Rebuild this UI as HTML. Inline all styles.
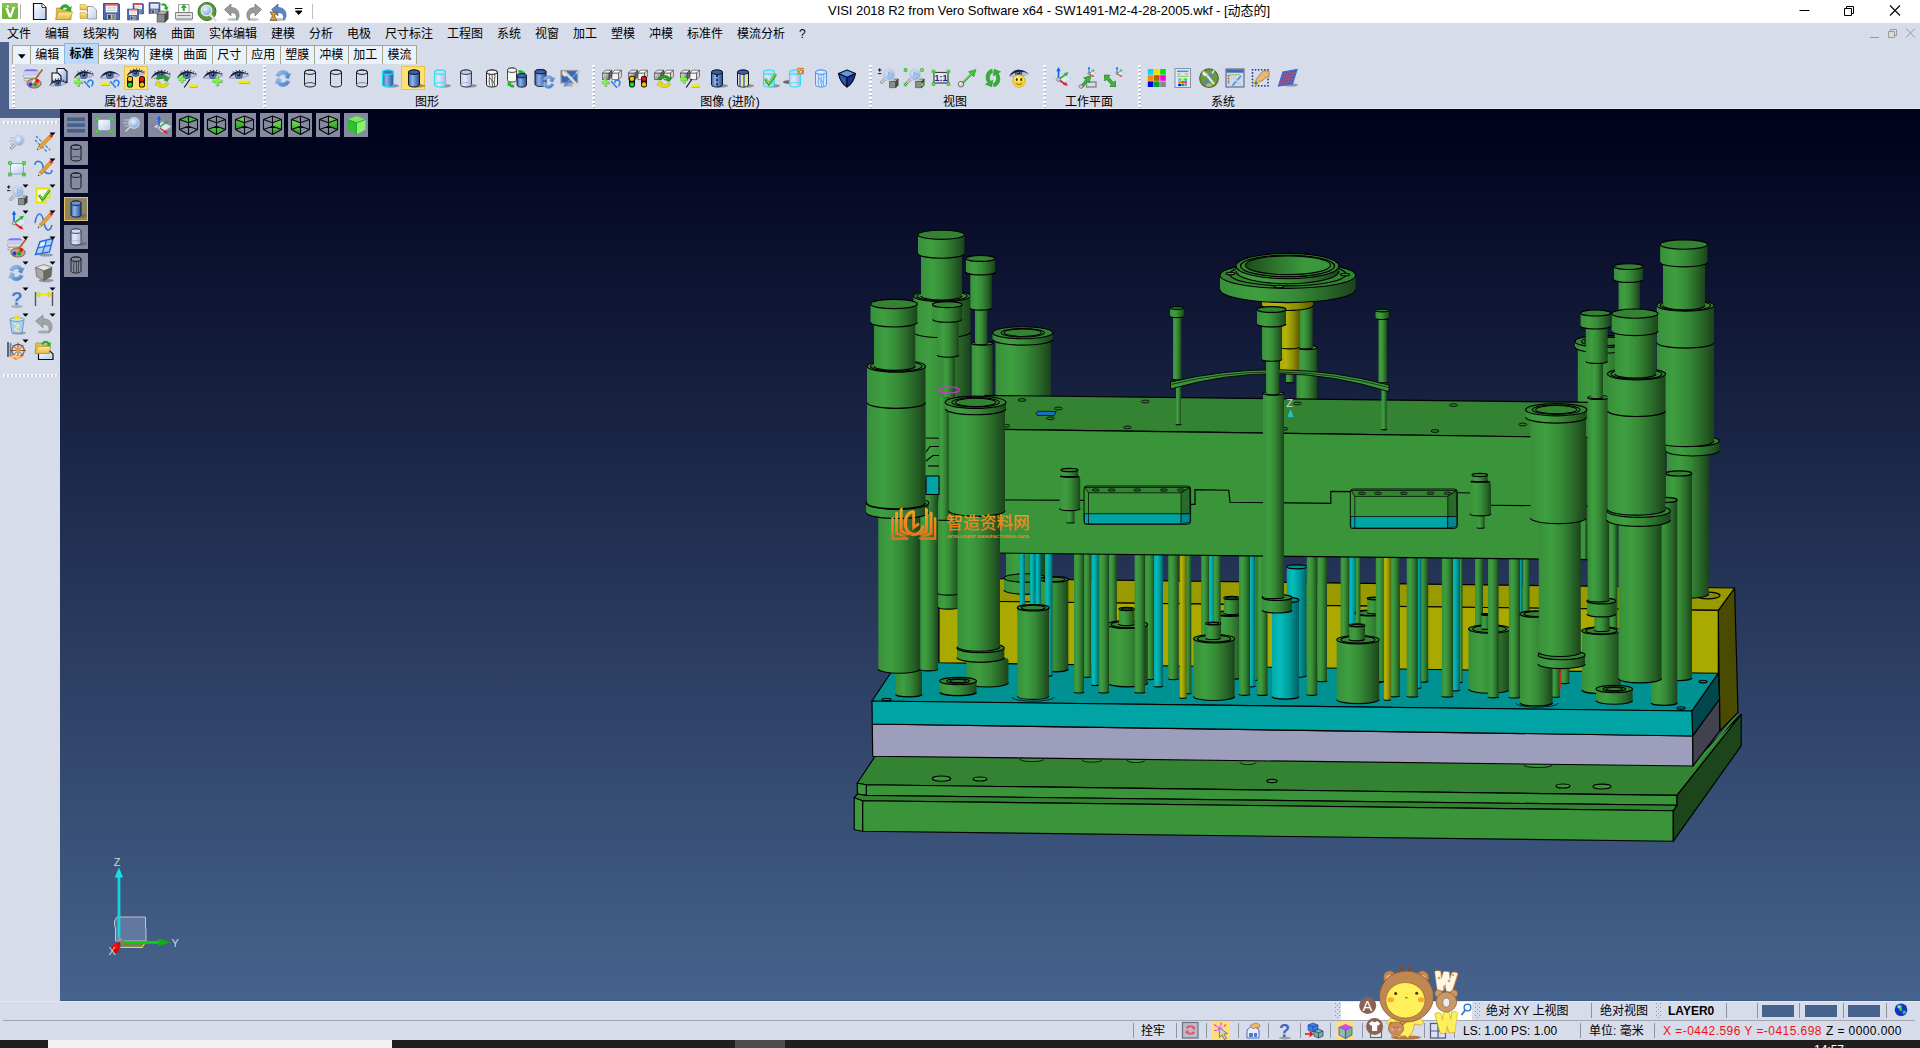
<!DOCTYPE html><html lang="zh"><head><meta charset="utf-8"><title>VISI 2018 R2</title><style>
*{box-sizing:border-box;margin:0;padding:0}
html,body{width:1920px;height:1048px;overflow:hidden;background:#d6dcea;font-family:"Liberation Sans","Noto Sans CJK SC",sans-serif;font-size:12px;color:#000}
.abs{position:absolute}
#title{left:0;top:0;width:1920px;height:23px;background:#fff}
#title .t{position:absolute;left:828px;top:3px;width:446px;font-size:13px;line-height:16px;white-space:nowrap;color:#000;letter-spacing:-0.045px}
#menu{left:0;top:23px;width:1920px;height:20px;background:#d6dcea}
#menu span{position:absolute;top:3px;line-height:17px;height:18px;font-size:12px;white-space:nowrap}
#strip{left:0;top:42px;width:9px;height:76px;background:#4a6089}
#strip2{left:0;top:109px;width:60px;height:9px;background:#4a6089}
#tabs{left:12px;top:43px;height:22px}
.tab{position:absolute;top:2px;height:20px;background:#eaf2fc;border:1px solid #a6a58c;border-bottom:none;font-size:12px;line-height:19px;text-align:center;white-space:nowrap}
.tab.act{top:0;height:22px;background:#bcd9f7;border-color:#8fb3dc;font-weight:bold;line-height:20px}
#tb{left:12px;top:64px;width:1908px;height:45px;background:#d6dcea;border-bottom:1px solid #e8ebf7}
.grip{position:absolute;top:65px;width:3px;height:43px;background:repeating-linear-gradient(#fff 0 2px,transparent 2px 4px)}
.grip:after{content:"";position:absolute;left:1px;top:1px;width:2px;height:42px;background:repeating-linear-gradient(transparent 0 1px,#8a90a8 1px 2px,transparent 2px 4px);opacity:.7}
.glab{position:absolute;top:94px;font-size:12px;line-height:16px;white-space:nowrap;transform:translateX(-50%)}
.hl{position:absolute;background:#ffe070;border:1px solid #e8c04a}
#left{left:0;top:118px;width:60px;height:883px;background:#d6dcea}
.hgrip{position:absolute;left:3px;width:55px;height:3px;background:repeating-linear-gradient(90deg,#f8f9ff 0 2px,transparent 2px 4px);box-shadow:none}
.hgrip:after{content:"";position:absolute;left:1px;top:1px;width:55px;height:2px;background:repeating-linear-gradient(90deg,transparent 0 1px,#9aa0b6 1px 2px,transparent 2px 4px);opacity:.6}
#vp{left:60px;top:109px;width:1860px;height:892px;background:linear-gradient(#00011b,#46638d);border-bottom:1px solid #3f5d8a}
.vb{position:absolute;width:24px;height:24px;background:#858aa0}
#st1{left:0;top:1001px;width:1920px;height:20px;background:#d6dcea;border-top:1px solid #e4e7f4}
#st2{left:0;top:1021px;width:1920px;height:19px;background:#d6dcea}
#stline{left:3px;top:1020px;width:1912px;height:1px;background:#a2a6b2}
.st{position:absolute;font-size:12px;line-height:16px;white-space:nowrap}
.vs{position:absolute;width:1px;background:#8f93a0}
#task{left:0;top:1040px;width:1920px;height:8px;background:#1f1f1f}
</style></head><body>
<div id="title" class="abs"><div class="t">VISI 2018 R2 from Vero Software x64 - SW1491-M2-4-28-2005.wkf - [动态的]</div>
<svg class="abs" style="left:1780px;top:0" width="140" height="24" viewBox="1780 0 140 24"><g stroke="#000" stroke-width="1" fill="none"><path d="M1799.5,10.5h10"/><path d="M1844.5,8.5h7v7h-7z M1846.5,8.5v-2h7v7h-2"/><path d="M1890,5.5l10,10 M1900,5.5l-10,10" stroke-width="1.1"/></g></svg>
<svg width="0" height="0" style="position:absolute"><defs>
<linearGradient id="iB" x1="0" x2="1" y1="0" y2="0"><stop offset="0" stop-color="#3a62b4"/><stop offset="0.35" stop-color="#8db4ea"/><stop offset="1" stop-color="#2a4a98"/></linearGradient>
<linearGradient id="iL" x1="0" x2="1" y1="0" y2="0"><stop offset="0" stop-color="#c4d0ee"/><stop offset="0.4" stop-color="#e2e8fa"/><stop offset="1" stop-color="#aab8de"/></linearGradient>
<linearGradient id="iW" x1="0" x2="1" y1="0" y2="1"><stop offset="0" stop-color="#ffffff"/><stop offset="1" stop-color="#b8cdf0"/></linearGradient>
<linearGradient id="iGr" x1="0" x2="0" y1="0" y2="1"><stop offset="0" stop-color="#7fe060"/><stop offset="1" stop-color="#1f9a1f"/></linearGradient>
<linearGradient id="iGy" x1="0" x2="1" y1="0" y2="1"><stop offset="0" stop-color="#e8e8e8"/><stop offset="1" stop-color="#707070"/></linearGradient>
<radialGradient id="iGl" cx="0.4" cy="0.35" r="0.7"><stop offset="0" stop-color="#e8f2ff"/><stop offset="0.7" stop-color="#9cbce6"/><stop offset="1" stop-color="#6a92cc"/></radialGradient>
<linearGradient id="iRf" x1="0" x2="1" y1="0" y2="1"><stop offset="0" stop-color="#a8c8ee"/><stop offset="1" stop-color="#3a72c0"/></linearGradient>
<linearGradient id="iFold" x1="0" x2="0" y1="0" y2="1"><stop offset="0" stop-color="#fbe9a0"/><stop offset="1" stop-color="#e8b840"/></linearGradient>
<linearGradient id="iDoc" x1="0" x2="1" y1="0" y2="1"><stop offset="0" stop-color="#ffffff"/><stop offset="1" stop-color="#7ea2e4"/></linearGradient>
</defs></svg><svg class="abs" style="left:0;top:0" width="330" height="24" viewBox="0 0 330 24"><rect x="2" y="3" width="16" height="16" rx="1" fill="#6fb83a"/><rect x="2" y="3" width="16" height="5" rx="1" fill="#8ccc5c" opacity="0.600"/><path d="M5.200,8 h2.800 l2.200,6.200 l2.400,-7.200 h2.600 l-3.800,10.400 h-2.600 z" fill="#fff"/><circle cx="7.800" cy="6.400" r="1.100" fill="#fff"/><path d="M20.500,4v15" stroke="#b0b0b0" stroke-width="1"/><path d="M33.500,3.500h8.500l4,4v12h-12.500z" fill="url(#iW)" stroke="#111" stroke-width="1.200"/><path d="M42,3.500v4h4" fill="#fff" stroke="#111" stroke-width="0.800"/><path d="M56,19.500 l0.500,-11.500 h5 l1.500,2 h8 v9.500 z" fill="#e8c050" stroke="#a8801a" stroke-width="0.600"/><path d="M55.500,19.500 l3,-7.500 h14 l-2.500,7.500 z" fill="url(#iFold)" stroke="#b08820" stroke-width="0.600"/><path d="M60,8.500 c2,-5 8,-5 9.500,-1 l2,-1 l-1,5 l-5,-1.500 l2,-1 c-1,-2 -4,-2 -5,0.500 z" fill="#2ab02a" stroke="#1a801a" stroke-width="0.400"/><path d="M80,4.500h5l1,1.500h3v4h-9z" fill="url(#iFold)" stroke="#b08820" stroke-width="0.500"/><path d="M80,12.500h5l1,1.500h3v4.500h-9z" fill="url(#iFold)" stroke="#b08820" stroke-width="0.500"/><path d="M87.500,6.500h5.500l3.500,3.500v9h-9z" fill="url(#iW)" stroke="#8a8a8a" stroke-width="0.800"/><path d="M86,11 h2 M86,16h2" stroke="#6a6" stroke-width="0.800"/><g transform="translate(103.5,3.5) scale(1.000)"><path d="M0,0h15l1,1v15h-16z" fill="#4668b4" stroke="#26387a" stroke-width="0.800"/><rect x="2.200" y="0.800" width="11.600" height="8" fill="#fff"/><rect x="2.200" y="0.800" width="11.600" height="1.300" fill="#e03a30"/><path d="M3.200,3.800h9.600 M3.200,5.400h9.600 M3.200,7h9.600" stroke="#b8b8b8" stroke-width="0.700"/><rect x="3.600" y="10.600" width="9" height="5.400" fill="#c4c4c4"/><rect x="4.600" y="11.400" width="2.600" height="4" fill="#3a3a44"/><rect x="8.600" y="11" width="3.600" height="5" fill="#8a8a8a"/></g><g transform="translate(133.0,3.5) scale(0.656)"><path d="M0,0h15l1,1v15h-16z" fill="#4668b4" stroke="#26387a" stroke-width="0.800"/><rect x="2.200" y="0.800" width="11.600" height="8" fill="#fff"/><rect x="2.200" y="0.800" width="11.600" height="1.300" fill="#e03a30"/><path d="M3.200,3.800h9.600 M3.200,5.400h9.600 M3.200,7h9.600" stroke="#b8b8b8" stroke-width="0.700"/><rect x="3.600" y="10.600" width="9" height="5.400" fill="#c4c4c4"/><rect x="4.600" y="11.400" width="2.600" height="4" fill="#3a3a44"/><rect x="8.600" y="11" width="3.600" height="5" fill="#8a8a8a"/></g><g transform="translate(127.5,9.0) scale(0.688)"><path d="M0,0h15l1,1v15h-16z" fill="#4668b4" stroke="#26387a" stroke-width="0.800"/><rect x="2.200" y="0.800" width="11.600" height="8" fill="#fff"/><rect x="2.200" y="0.800" width="11.600" height="1.300" fill="#e03a30"/><path d="M3.200,3.800h9.600 M3.200,5.400h9.600 M3.200,7h9.600" stroke="#b8b8b8" stroke-width="0.700"/><rect x="3.600" y="10.600" width="9" height="5.400" fill="#c4c4c4"/><rect x="4.600" y="11.400" width="2.600" height="4" fill="#3a3a44"/><rect x="8.600" y="11" width="3.600" height="5" fill="#8a8a8a"/></g><g transform="translate(149.0,2.5) scale(0.688)"><path d="M0,0h15l1,1v15h-16z" fill="#4668b4" stroke="#26387a" stroke-width="0.800"/><rect x="2.200" y="0.800" width="11.600" height="8" fill="#fff"/><rect x="2.200" y="0.800" width="11.600" height="1.300" fill="#e03a30"/><path d="M3.200,3.800h9.600 M3.200,5.400h9.600 M3.200,7h9.600" stroke="#b8b8b8" stroke-width="0.700"/><rect x="3.600" y="10.600" width="9" height="5.400" fill="#c4c4c4"/><rect x="4.600" y="11.400" width="2.600" height="4" fill="#3a3a44"/><rect x="8.600" y="11" width="3.600" height="5" fill="#8a8a8a"/></g><path d="M161,4 c3,-2 6,0 6,3 l1.500,-0.500 l-1.500,4 l-3.500,-2.500 l1.500,-0.500 c0,-1.500 -1.500,-2.500 -3,-1.500z" fill="#2ab02a"/><path d="M157.0,14.2 h8.0 v8.0 h-8.0 z" fill="#8c8c8c" stroke="#333" stroke-width="0.5"/><path d="M157.0,14.2 l3.2,-3.2 h8.0 l-3.2,3.2 z" fill="#b8b8b8" stroke="#333" stroke-width="0.5"/><path d="M165.0,14.2 l3.2,-3.2 v8.0 l-3.2,3.2 z" fill="#4c4c4c" stroke="#333" stroke-width="0.5"/><path d="M178.500,4.500h10.500v8h-10.500z" fill="#fff" stroke="#888" stroke-width="0.800"/><path d="M183.800,4 l3,4h-2v3h-2v-3h-2z" fill="#2ab02a"/><path d="M175.500,12.500h17v6.500h-17z" fill="#e4e4e4" stroke="#666" stroke-width="0.800"/><path d="M176.500,19h15l1,1.500h-17z" fill="#aaa"/><path d="M177.500,15.500h13" stroke="#888" stroke-width="1"/><circle cx="207" cy="11.500" r="9" fill="#5a9a3a" stroke="#3a6a2a" stroke-width="1"/><path d="M210.500,15 l5,5.500" stroke="#e0e0e0" stroke-width="2.600" stroke-linecap="round"/><circle cx="206.500" cy="10.500" r="5.200" fill="url(#iGl)" stroke="#e8e8e8" stroke-width="1.500"/><g transform="translate(224.0,3)"><ellipse cx="9" cy="16.500" rx="6" ry="1.500" fill="#888" opacity="0.500"/><path d="M0.500,6.500 L7,1 v3.500 c6,0 8.500,4 8,9 c-0.300,2 -1.500,3 -3,3.500 c1.500,-4 0,-7.500 -5,-7.500 v3.500 z" fill="#9a9a9a" stroke="#6a6a6a" stroke-width="0.600"/></g><g transform="translate(246.0,3) scale(-1,1) translate(-16,0)"><ellipse cx="9" cy="16.500" rx="6" ry="1.500" fill="#888" opacity="0.500"/><path d="M0.500,6.500 L7,1 v3.500 c6,0 8.500,4 8,9 c-0.300,2 -1.500,3 -3,3.500 c1.500,-4 0,-7.500 -5,-7.500 v3.500 z" fill="#9a9a9a" stroke="#6a6a6a" stroke-width="0.600"/></g><g transform="translate(271.0,3)"><ellipse cx="9" cy="16.500" rx="6" ry="1.500" fill="#888" opacity="0.500"/><path d="M0.500,6.500 L7,1 v3.500 c6,0 8.500,4 8,9 c-0.300,2 -1.500,3 -3,3.500 c1.500,-4 0,-7.500 -5,-7.500 v3.500 z" fill="#5a86c8" stroke="#3a5a98" stroke-width="0.600"/></g><path d="M270,12 h7 l-2.500,4 l2.500,4.500 h-7 l2.500,-4.500 z" fill="#c8a040" stroke="#6a4a10" stroke-width="0.700"/><path d="M295,8.500h7.500 M295.500,11h6.500l-3.250,3.500z" stroke="#000" stroke-width="1" fill="#000"/><path d="M312.500,4v15" stroke="#c0c0c0" stroke-width="1"/></svg>
</div>
<div id="menu" class="abs">
<span style="left:7px">文件</span>
<span style="left:45px">编辑</span>
<span style="left:83px">线架构</span>
<span style="left:133px">网格</span>
<span style="left:171px">曲面</span>
<span style="left:209px">实体编辑</span>
<span style="left:271px">建模</span>
<span style="left:309px">分析</span>
<span style="left:347px">电极</span>
<span style="left:385px">尺寸标注</span>
<span style="left:447px">工程图</span>
<span style="left:497px">系统</span>
<span style="left:535px">视窗</span>
<span style="left:573px">加工</span>
<span style="left:611px">塑模</span>
<span style="left:649px">冲模</span>
<span style="left:687px">标准件</span>
<span style="left:737px">模流分析</span>
<span style="left:799px">?</span>
<svg class="abs" style="left:1860px;top:4px" width="58" height="14" viewBox="1860 27 58 14"><g stroke="#a09a8c" stroke-width="1" fill="none"><path d="M1870,37.5h9"/><path d="M1888.5,31.5h6v6h-6z M1890.5,31.5v-2h6v6h-2"/><path d="M1906,28.5l9,9 M1915,28.5l-9,9"/></g></svg>
</div>
<div id="strip" class="abs"></div><div id="strip2" class="abs"></div>
<div id="tabs" class="abs">
<div class="tab" style="left:0;width:19px"><svg width="8" height="5" viewBox="0 0 8 5" style="position:absolute;left:5px;top:8px"><path d="M0,0.3h7.6l-3.8,4.4z" fill="#000"/></svg></div>
<div class="tab" style="left:18px;width:34.5px">编辑</div>
<div class="tab act" style="left:52px;width:35px">标准</div>
<div class="tab" style="left:86px;width:46.5px">线架构</div>
<div class="tab" style="left:132px;width:34.5px">建模</div>
<div class="tab" style="left:166px;width:34.5px">曲面</div>
<div class="tab" style="left:200px;width:34.5px">尺寸</div>
<div class="tab" style="left:234px;width:34.5px">应用</div>
<div class="tab" style="left:268px;width:34.5px">塑膜</div>
<div class="tab" style="left:302px;width:34.5px">冲模</div>
<div class="tab" style="left:336px;width:34.5px">加工</div>
<div class="tab" style="left:370px;width:35px">模流</div>
</div>
<div id="tb" class="abs"></div>
<div class="grip" style="left:12px"></div>
<div class="grip" style="left:262.5px"></div>
<div class="grip" style="left:591.5px"></div>
<div class="grip" style="left:868.5px"></div>
<div class="grip" style="left:1042.5px"></div>
<div class="grip" style="left:1137.5px"></div>
<div class="glab" style="left:136px">属性/过滤器</div>
<div class="glab" style="left:427px">图形</div>
<div class="glab" style="left:730px">图像 (进阶)</div>
<div class="glab" style="left:955px">视图</div>
<div class="glab" style="left:1089px">工作平面</div>
<div class="glab" style="left:1223px">系统</div>
<div class="hl" style="left:124px;top:66px;width:24px;height:24px"></div>
<div class="hl" style="left:401px;top:66px;width:24px;height:24px"></div>
<svg class="abs" style="left:0;top:64px" width="1920" height="44" viewBox="0 64 1920 44"><g transform="translate(21.00,66.00)"><path d="M2,5.5 l3,-2.2 h10 l3,2.2 z" fill="#7a7af8"/><path d="M2,5.5h16v2h-16z" fill="#c8c8ff"/><path d="M2.5,9h15v2.2h-15z" fill="#f0f0f0" stroke="#777" stroke-width="0.4"/><path d="M3,12.5h13v2.4h-13z" fill="#e0e0e0" stroke="#666" stroke-width="0.4"/><ellipse cx="13" cy="17.5" rx="7.2" ry="4.6" fill="#c89a80" stroke="#6a4030" stroke-width="0.7"/><circle cx="9.5" cy="18.5" r="2" fill="#1040f0"/><circle cx="14.2" cy="18.6" r="2" fill="#10b020"/><circle cx="16.2" cy="15" r="1.9" fill="#e01818"/><path d="M21.5,3.5 L13.5,14" stroke="#b8601a" stroke-width="1.7"/><path d="M13.8,13.4 l-2.6,3.4" stroke="#e8e8e8" stroke-width="1.8"/></g><g transform="translate(47.00,66.00)"><path d="M10,2.5h7l3,3v11h-10z" fill="url(#iDoc)" stroke="#111" stroke-width="1.1"/><path d="M5,7h6l3,3v9h-9z" fill="url(#iW)" stroke="#111" stroke-width="1.1"/><path d="M2.5,19.6 C6.6,13.8 13.5,12.7 19.5,17.4 C15.6,19.8 8.3,20.7 2.5,19.6 Z" fill="#bcc4ec" stroke="#a4869e" stroke-width="0.6"/><circle cx="10.7" cy="17.0" r="3.3" fill="#3a5686"/><circle cx="10.7" cy="17.4" r="2.5" fill="#5878aa"/><circle cx="10.7" cy="16.8" r="1.5" fill="#142040"/><circle cx="10.2" cy="15.7" r="0.8" fill="#c4dcff"/><path d="M2.3,19.7 C5.3,13.0 12.6,11.3 19.7,17.4 C14.3,14.4 7.5,14.9 2.3,19.7 Z" fill="#1a2238"/><path d="M6.2,14.7 l-0.7,-0.7 M8.8,13.7 l-0.4,-0.9 M11.3,13.3 l0.2,-1.0 M13.9,13.6 l0.6,-0.9 M16.2,14.6 l0.9,-0.7 M18.0,15.8 l1.0,-0.4" stroke="#1a2238" stroke-width="1.1" fill="none"/></g><g transform="translate(73.00,66.00)"><path d="M1.2,12.0 C6.0,5.4 14.0,4.1 21.0,9.5 C16.5,12.3 8.0,13.3 1.2,12.0 Z" fill="#bcc4ec" stroke="#a4869e" stroke-width="0.6"/><circle cx="10.8" cy="9.1" r="3.9" fill="#3a5686"/><circle cx="10.8" cy="9.6" r="2.9" fill="#5878aa"/><circle cx="10.8" cy="8.8" r="1.7" fill="#142040"/><circle cx="10.2" cy="7.5" r="0.9" fill="#c4dcff"/><path d="M1.0,12.2 C4.5,4.5 13.0,2.5 21.2,9.6 C15.0,6.0 7.0,6.6 1.0,12.2 Z" fill="#1a2238"/><path d="M5.5,6.4 l-0.7,-0.7 M8.5,5.3 l-0.4,-0.9 M11.5,4.8 l0.2,-1.0 M14.5,5.2 l0.6,-0.9 M17.2,6.3 l0.9,-0.7 M19.2,7.7 l1.0,-0.4" stroke="#1a2238" stroke-width="1.1" fill="none"/><path d="M1.6,16.6 h8.2 M5.7,12.5 v8.2" stroke="#3a5a30" stroke-width="2.6" fill="none" opacity="0.55"/><path d="M0.9,15.9 h8.2 M5.0,11.8 v8.2" stroke="#7cf04c" stroke-width="2.6" fill="none"/><g transform="translate(0.0,0.0)"><path d="M11.6,15.7 L16.6,21.2" stroke="#2f80e8" stroke-width="1.6" fill="none" stroke-linecap="round"/><polyline points="14.87,16.35 15.09,15.61 15.52,14.98 16.12,14.50 16.83,14.22 17.59,14.16 18.33,14.33 19.00,14.71 19.51,15.27 19.84,15.97 19.95,16.72 19.83,17.48 19.49,18.16 19.0,19.7" stroke="#2f80e8" stroke-width="1.6" fill="none" stroke-linecap="round" stroke-linejoin="round"/></g></g><g transform="translate(99.00,66.00)"><path d="M1.2,12.0 C6.0,5.4 14.0,4.1 21.0,9.5 C16.5,12.3 8.0,13.3 1.2,12.0 Z" fill="#bcc4ec" stroke="#a4869e" stroke-width="0.6"/><circle cx="10.8" cy="9.1" r="3.9" fill="#3a5686"/><circle cx="10.8" cy="9.6" r="2.9" fill="#5878aa"/><circle cx="10.8" cy="8.8" r="1.7" fill="#142040"/><circle cx="10.2" cy="7.5" r="0.9" fill="#c4dcff"/><path d="M1.0,12.2 C4.5,4.5 13.0,2.5 21.2,9.6 C15.0,6.0 7.0,6.6 1.0,12.2 Z" fill="#1a2238"/><path d="M1.7,17.9 h8.6" stroke="#a8a800" stroke-width="2.7" fill="none" transform="translate(0.5,0.6)"/><path d="M1.7,17.9 h8.6" stroke="#f0f000" stroke-width="2.7" fill="none"/><g transform="translate(0.0,0.0)"><path d="M11.6,15.7 L16.6,21.2" stroke="#2f80e8" stroke-width="1.6" fill="none" stroke-linecap="round"/><polyline points="14.87,16.35 15.09,15.61 15.52,14.98 16.12,14.50 16.83,14.22 17.59,14.16 18.33,14.33 19.00,14.71 19.51,15.27 19.84,15.97 19.95,16.72 19.83,17.48 19.49,18.16 19.0,19.7" stroke="#2f80e8" stroke-width="1.6" fill="none" stroke-linecap="round" stroke-linejoin="round"/></g></g><g transform="translate(124.00,66.00)"><path d="M3.0,9.8 C7.4,3.9 14.6,2.8 21.0,7.5 C16.9,10.0 9.2,10.9 3.0,9.8 Z" fill="#bcc4ec" stroke="#a4869e" stroke-width="0.6"/><circle cx="11.7" cy="7.2" r="3.5" fill="#3a5686"/><circle cx="11.7" cy="7.6" r="2.6" fill="#5878aa"/><circle cx="11.7" cy="6.9" r="1.5" fill="#142040"/><circle cx="11.2" cy="5.8" r="0.8" fill="#c4dcff"/><path d="M2.8,9.9 C6.0,3.1 13.7,1.4 21.2,7.6 C15.5,4.5 8.3,5.0 2.8,9.9 Z" fill="#1a2238"/><path d="M6.9,4.8 l-0.7,-0.7 M9.6,3.8 l-0.4,-0.9 M12.4,3.4 l0.2,-1.0 M15.1,3.7 l0.6,-0.9 M17.5,4.8 l0.9,-0.7 M19.4,6.0 l1.0,-0.4" stroke="#1a2238" stroke-width="1.1" fill="none"/><rect x="3.0" y="10.0" width="6" height="11.6" rx="2.6" fill="#111"/><rect x="15.0" y="10.0" width="6" height="11.6" rx="2.6" fill="#111"/><circle cx="6.0" cy="13.0" r="2.2" fill="#ffc000"/><circle cx="6.0" cy="18.6" r="2.2" fill="#10e020"/><circle cx="18.0" cy="13.0" r="2.2" fill="#f01010"/><circle cx="18.0" cy="18.6" r="2.2" fill="#ffc000"/></g><g transform="translate(150.00,66.00)"><path d="M1.2,12.0 C6.0,5.4 14.0,4.1 21.0,9.5 C16.5,12.3 8.0,13.3 1.2,12.0 Z" fill="#bcc4ec" stroke="#a4869e" stroke-width="0.6"/><circle cx="10.8" cy="9.1" r="3.9" fill="#3a5686"/><circle cx="10.8" cy="9.6" r="2.9" fill="#5878aa"/><circle cx="10.8" cy="8.8" r="1.7" fill="#142040"/><circle cx="10.2" cy="7.5" r="0.9" fill="#c4dcff"/><path d="M1.0,12.2 C4.5,4.5 13.0,2.5 21.2,9.6 C15.0,6.0 7.0,6.6 1.0,12.2 Z" fill="#1a2238"/><path d="M5.5,6.4 l-0.7,-0.7 M8.5,5.3 l-0.4,-0.9 M11.5,4.8 l0.2,-1.0 M14.5,5.2 l0.6,-0.9 M17.2,6.3 l0.9,-0.7 M19.2,7.7 l1.0,-0.4" stroke="#1a2238" stroke-width="1.1" fill="none"/><polygon points="18.7,17.7 18.0,18.8 17.0,19.8 15.8,20.6 14.4,21.1 12.9,21.4 11.4,21.3 9.9,21.0 8.5,20.4 7.3,19.6 6.4,18.6 4.9,19.3 7.3,14.9 10.8,16.5 9.4,17.2 9.8,17.7 10.4,18.1 11.1,18.4 11.8,18.6 12.6,18.6 13.4,18.5 14.1,18.2 14.7,17.8 15.2,17.3 15.5,16.8" fill="#e6e010" stroke="#a89a00" stroke-width="0.5" stroke-linejoin="round"/><polygon points="5.9,12.7 6.6,11.6 7.6,10.6 8.8,9.8 10.2,9.3 11.7,9.0 13.2,9.1 14.7,9.4 16.1,10.0 17.3,10.8 18.2,11.8 19.7,11.1 17.3,15.5 13.8,13.9 15.2,13.2 14.8,12.7 14.2,12.3 13.5,12.0 12.8,11.8 12.0,11.8 11.2,11.9 10.5,12.2 9.9,12.6 9.4,13.1 9.1,13.6" fill="#2aa02a" stroke="#157a15" stroke-width="0.5" stroke-linejoin="round"/></g><g transform="translate(176.00,66.00)"><path d="M1.2,12.0 C6.0,5.4 14.0,4.1 21.0,9.5 C16.5,12.3 8.0,13.3 1.2,12.0 Z" fill="#bcc4ec" stroke="#a4869e" stroke-width="0.6"/><circle cx="10.8" cy="9.1" r="3.9" fill="#3a5686"/><circle cx="10.8" cy="9.6" r="2.9" fill="#5878aa"/><circle cx="10.8" cy="8.8" r="1.7" fill="#142040"/><circle cx="10.2" cy="7.5" r="0.9" fill="#c4dcff"/><path d="M1.0,12.2 C4.5,4.5 13.0,2.5 21.2,9.6 C15.0,6.0 7.0,6.6 1.0,12.2 Z" fill="#1a2238"/><path d="M5.5,6.4 l-0.7,-0.7 M8.5,5.3 l-0.4,-0.9 M11.5,4.8 l0.2,-1.0 M14.5,5.2 l0.6,-0.9 M17.2,6.3 l0.9,-0.7 M19.2,7.7 l1.0,-0.4" stroke="#1a2238" stroke-width="1.1" fill="none"/><path d="M2.7,13.7 h7.0 M6.2,10.2 v7.0" stroke="#3a5a30" stroke-width="2.4" fill="none" opacity="0.55"/><path d="M2.0,13.0 h7.0 M5.5,9.5 v7.0" stroke="#7cf04c" stroke-width="2.4" fill="none"/><path d="M8.2,21.5 L14,13" stroke="#111" stroke-width="1.2"/><path d="M13.2,19.8 h7.6" stroke="#a8a800" stroke-width="2.6" fill="none" transform="translate(0.5,0.6)"/><path d="M13.2,19.8 h7.6" stroke="#f0f000" stroke-width="2.6" fill="none"/></g><g transform="translate(202.00,66.00)"><path d="M1.2,12.0 C6.0,5.4 14.0,4.1 21.0,9.5 C16.5,12.3 8.0,13.3 1.2,12.0 Z" fill="#bcc4ec" stroke="#a4869e" stroke-width="0.6"/><circle cx="10.8" cy="9.1" r="3.9" fill="#3a5686"/><circle cx="10.8" cy="9.6" r="2.9" fill="#5878aa"/><circle cx="10.8" cy="8.8" r="1.7" fill="#142040"/><circle cx="10.2" cy="7.5" r="0.9" fill="#c4dcff"/><path d="M1.0,12.2 C4.5,4.5 13.0,2.5 21.2,9.6 C15.0,6.0 7.0,6.6 1.0,12.2 Z" fill="#1a2238"/><path d="M5.5,6.4 l-0.7,-0.7 M8.5,5.3 l-0.4,-0.9 M11.5,4.8 l0.2,-1.0 M14.5,5.2 l0.6,-0.9 M17.2,6.3 l0.9,-0.7 M19.2,7.7 l1.0,-0.4" stroke="#1a2238" stroke-width="1.1" fill="none"/><path d="M10.9,15.5 h9.6 M15.7,10.7 v9.6" stroke="#3a5a30" stroke-width="2.8" fill="none" opacity="0.55"/><path d="M10.2,14.8 h9.6 M15.0,10.0 v9.6" stroke="#7cf04c" stroke-width="2.8" fill="none"/></g><g transform="translate(228.00,66.00)"><path d="M1.2,12.0 C6.0,5.4 14.0,4.1 21.0,9.5 C16.5,12.3 8.0,13.3 1.2,12.0 Z" fill="#bcc4ec" stroke="#a4869e" stroke-width="0.6"/><circle cx="10.8" cy="9.1" r="3.9" fill="#3a5686"/><circle cx="10.8" cy="9.6" r="2.9" fill="#5878aa"/><circle cx="10.8" cy="8.8" r="1.7" fill="#142040"/><circle cx="10.2" cy="7.5" r="0.9" fill="#c4dcff"/><path d="M1.0,12.2 C4.5,4.5 13.0,2.5 21.2,9.6 C15.0,6.0 7.0,6.6 1.0,12.2 Z" fill="#1a2238"/><path d="M5.5,6.4 l-0.7,-0.7 M8.5,5.3 l-0.4,-0.9 M11.5,4.8 l0.2,-1.0 M14.5,5.2 l0.6,-0.9 M17.2,6.3 l0.9,-0.7 M19.2,7.7 l1.0,-0.4" stroke="#1a2238" stroke-width="1.1" fill="none"/><path d="M10.5,16.0 h10.5" stroke="#a8a800" stroke-width="2.8" fill="none" transform="translate(0.5,0.6)"/><path d="M10.5,16.0 h10.5" stroke="#f0f000" stroke-width="2.8" fill="none"/></g><g transform="translate(271.00,66.00)"><polygon points="19.0,15.6 18.2,17.1 17.1,18.4 15.8,19.4 14.3,20.1 12.6,20.5 11.0,20.4 9.3,20.0 7.9,19.2 6.6,18.1 5.6,16.8 4.1,17.6 6.6,11.9 10.3,14.1 8.8,14.9 9.3,15.6 9.9,16.2 10.7,16.6 11.5,16.8 12.3,16.8 13.1,16.6 13.9,16.3 14.6,15.8 15.1,15.1 15.5,14.4" fill="url(#iRf)" stroke="#6a98d8" stroke-width="0.5" stroke-linejoin="round"/><polygon points="5.0,9.4 5.8,7.9 6.9,6.6 8.2,5.6 9.7,4.9 11.4,4.5 13.0,4.6 14.7,5.0 16.1,5.8 17.4,6.9 18.4,8.2 19.9,7.3 17.4,13.1 13.7,10.9 15.2,10.0 14.7,9.4 14.1,8.8 13.3,8.4 12.5,8.2 11.7,8.2 10.9,8.4 10.1,8.7 9.4,9.2 8.9,9.9 8.5,10.6" fill="url(#iRf)" stroke="#6a98d8" stroke-width="0.5" stroke-linejoin="round"/></g><g transform="translate(298.00,66.00)"><path d="M6.5,6.2 V18.8 A5.5,2.2 0 0 0 17.5,18.8 V6.2 A5.5,2.2 0 0 0 6.5,6.2 Z" fill="none" stroke="#222" stroke-width="1.0"/><ellipse cx="12.0" cy="6.2" rx="5.5" ry="2.2" fill="none" stroke="#222" stroke-width="1.0"/><path d="M6.5,18.8 A5.5,2.2 0 0 1 17.5,18.8" fill="none" stroke="#222" stroke-width="0.8"/></g><g transform="translate(324.00,66.00)"><path d="M6.5,6.2 V18.8 A5.5,2.2 0 0 0 17.5,18.8 V6.2 A5.5,2.2 0 0 0 6.5,6.2 Z" fill="none" stroke="#222" stroke-width="1.0"/><ellipse cx="12.0" cy="6.2" rx="5.5" ry="2.2" fill="none" stroke="#222" stroke-width="1.0"/></g><g transform="translate(350.00,66.00)"><path d="M6.5,6.2 V18.8 A5.5,2.2 0 0 0 17.5,18.8 V6.2 A5.5,2.2 0 0 0 6.5,6.2 Z" fill="none" stroke="#222" stroke-width="1.0"/><ellipse cx="12.0" cy="6.2" rx="5.5" ry="2.2" fill="none" stroke="#222" stroke-width="1.0"/><path d="M6.5,18.8 A5.5,2.2 0 0 1 17.5,18.8" fill="none" stroke="#777" stroke-width="0.8"/></g><g transform="translate(376.00,66.00)"><ellipse cx="16.0" cy="19.8" rx="7" ry="1.8" fill="#555" opacity="0.55"/><path d="M6.5,6.2 V18.8 A5.5,2.2 0 0 0 17.5,18.8 V6.2 A5.5,2.2 0 0 0 6.5,6.2 Z" fill="url(#iB)" stroke="#18e0f0" stroke-width="1.2"/><ellipse cx="12.0" cy="6.2" rx="5.5" ry="2.2" fill="#4a70c0" stroke="#18e0f0" stroke-width="1.2"/></g><g transform="translate(402.00,66.00)"><ellipse cx="16.0" cy="19.8" rx="7" ry="1.8" fill="#555" opacity="0.55"/><path d="M6.5,6.2 V18.8 A5.5,2.2 0 0 0 17.5,18.8 V6.2 A5.5,2.2 0 0 0 6.5,6.2 Z" fill="url(#iB)" stroke="#101828" stroke-width="1.0"/><ellipse cx="12.0" cy="6.2" rx="5.5" ry="2.2" fill="#3a60b0" stroke="#101828" stroke-width="1.0"/></g><g transform="translate(428.00,66.00)"><ellipse cx="16.0" cy="19.8" rx="7" ry="1.8" fill="#555" opacity="0.55"/><path d="M6.5,6.2 V18.8 A5.5,2.2 0 0 0 17.5,18.8 V6.2 A5.5,2.2 0 0 0 6.5,6.2 Z" fill="url(#iL)" stroke="#30e0f0" stroke-width="1.1"/><ellipse cx="12.0" cy="6.2" rx="5.5" ry="2.2" fill="#d0d6f0" stroke="#30e0f0" stroke-width="1.1"/><path d="M6.5,18.8 A5.5,2.2 0 0 1 17.5,18.8" fill="none" stroke="#30e0f0" stroke-width="0.8800000000000001"/></g><g transform="translate(454.00,66.00)"><ellipse cx="16.0" cy="19.8" rx="7" ry="1.8" fill="#555" opacity="0.55"/><path d="M6.5,6.2 V18.8 A5.5,2.2 0 0 0 17.5,18.8 V6.2 A5.5,2.2 0 0 0 6.5,6.2 Z" fill="url(#iL)" stroke="#222a38" stroke-width="0.9"/><ellipse cx="12.0" cy="6.2" rx="5.5" ry="2.2" fill="#c0cdf0" stroke="#222a38" stroke-width="0.9"/><path d="M6.5,18.8 A5.5,2.2 0 0 1 17.5,18.8" fill="none" stroke="#98a4c4" stroke-width="0.7200000000000001"/></g><g transform="translate(480.00,66.00)"><path d="M6.5,6.2 V18.8 A5.5,2.2 0 0 0 17.5,18.8 V6.2 A5.5,2.2 0 0 0 6.5,6.2 Z" fill="#f4f4f4" stroke="#222" stroke-width="1.0"/><ellipse cx="12.0" cy="6.2" rx="5.5" ry="2.2" fill="#f4f4f4" stroke="#222" stroke-width="1.0"/><path d="M9,7.5c1.5,4 -1,7 0.8,12 M11.5,8c2,4 -0.5,7 1.2,12.5 M14.5,7.5c1.5,4 -1.5,8 0.3,12.5 M10,12l4,5" stroke="#333" stroke-width="0.8" fill="none"/></g><g transform="translate(505.00,66.00)"><path d="M2.5,4.2 V13.8 A4.5,2.2 0 0 0 11.5,13.8 V4.2 A4.5,2.2 0 0 0 2.5,4.2 Z" fill="#f6f6f6" stroke="#333" stroke-width="0.9"/><ellipse cx="7.0" cy="4.2" rx="4.5" ry="2.2" fill="#f6f6f6" stroke="#333" stroke-width="0.9"/><path d="M13,4.5 a4,3.5 0 0 1 5.5,1.5 l1.2,-1 l0.3,4.6 l-4.6,-0.6 l1.3,-1.2 a2.5,2 0 0 0 -3,-1z" fill="#2ab02a"/><path d="M9.5,21 a4,3.5 0 0 1 -5.5,-1.5 l-1.2,1 l-0.3,-4.6 l4.6,0.6 l-1.3,1.2 a2.5,2 0 0 0 3,1z" fill="#2ab02a"/><path d="M12.0,9.7 V19.3 A4.8,2.2 0 0 0 21.5,19.3 V9.7 A4.8,2.2 0 0 0 12.0,9.7 Z" fill="url(#iB)" stroke="#101828" stroke-width="0.9"/><ellipse cx="16.8" cy="9.7" rx="4.8" ry="2.2" fill="#3a60b0" stroke="#101828" stroke-width="0.9"/></g><g transform="translate(532.00,66.00)"><path d="M3.0,5.7 V18.3 A5.5,2.2 0 0 0 14.0,18.3 V5.7 A5.5,2.2 0 0 0 3.0,5.7 Z" fill="url(#iB)" stroke="#101828" stroke-width="1.0"/><ellipse cx="8.5" cy="5.7" rx="5.5" ry="2.2" fill="#3a60b0" stroke="#101828" stroke-width="1.0"/><g transform="translate(4.50,5.50)"><polygon points="17.5,13.1 16.9,14.3 16.0,15.3 15.0,16.1 13.8,16.6 12.5,16.9 11.2,16.8 9.9,16.5 8.8,15.9 7.8,15.1 7.0,14.0 5.5,14.8 7.7,10.2 11.0,11.7 9.5,12.5 9.9,13.1 10.4,13.5 11.0,13.8 11.6,14.0 12.3,14.0 12.9,13.9 13.5,13.6 14.0,13.2 14.4,12.7 14.7,12.1" fill="url(#iRf)" stroke="#6a98d8" stroke-width="0.5" stroke-linejoin="round"/><polygon points="6.5,7.9 7.1,6.7 8.0,5.7 9.0,4.9 10.2,4.4 11.5,4.1 12.8,4.2 14.1,4.5 15.2,5.1 16.2,5.9 17.0,7.0 18.5,6.1 16.3,10.8 13.0,9.3 14.5,8.4 14.1,7.9 13.6,7.5 13.0,7.2 12.4,7.0 11.7,7.0 11.1,7.1 10.5,7.4 10.0,7.8 9.6,8.3 9.3,8.9" fill="url(#iRf)" stroke="#6a98d8" stroke-width="0.5" stroke-linejoin="round"/></g></g><g transform="translate(558.00,66.00)"><rect x="3" y="4.5" width="16.5" height="12.5" fill="#3a66b8" stroke="#9a9a9a" stroke-width="1.3"/><path d="M8,20.5h7l-1,-3h-5z" fill="#a8a8a8"/><path d="M20.5,5 L7,19.5" stroke="#5a8ad0" stroke-width="2.4" stroke-linecap="round"/><path d="M21.5,4 l-3,3.4" stroke="#c8d8f0" stroke-width="1.6"/><path d="M7.5,6.5 L19.5,19.5" stroke="#d8d8d8" stroke-width="2.6" stroke-linecap="round"/><path d="M6,4 a3.4,3.4 0 1 0 4.8,3.4 l-2.6,0.4 l-1.4,-1.8 z" fill="#e8e8e8" stroke="#888" stroke-width="0.4"/></g><g transform="translate(600.00,66.00)"><path d="M2.5,7.0 h6.6 v6.6 h-6.6 z" fill="url(#iGy)" stroke="#333" stroke-width="0.6"/><path d="M2.5,7.0 l2.8,-2.8 h6.6 l-2.8,2.8 z" fill="#e8e8e8" stroke="#333" stroke-width="0.6"/><path d="M9.1,7.0 l2.8,-2.8 v6.6 l-2.8,2.8 z" fill="#666" stroke="#333" stroke-width="0.6"/><path d="M12.0,7.0 h6.6 v6.6 h-6.6 z" fill="#f4f4f4" stroke="#333" stroke-width="0.6"/><path d="M12.0,7.0 l2.8,-2.8 h6.6 l-2.8,2.8 z" fill="#fff" stroke="#333" stroke-width="0.6"/><path d="M18.6,7.0 l2.8,-2.8 v6.6 l-2.8,2.8 z" fill="#ddd" stroke="#333" stroke-width="0.6"/><path d="M2.2,17.0 h7.4 M5.9,13.3 v7.4" stroke="#3a5a30" stroke-width="2.4" fill="none" opacity="0.55"/><path d="M1.5,16.3 h7.4 M5.2,12.6 v7.4" stroke="#7cf04c" stroke-width="2.4" fill="none"/><g transform="translate(0.0,0.0)"><path d="M11.6,15.7 L16.6,21.2" stroke="#2f80e8" stroke-width="1.6" fill="none" stroke-linecap="round"/><polyline points="14.87,16.35 15.09,15.61 15.52,14.98 16.12,14.50 16.83,14.22 17.59,14.16 18.33,14.33 19.00,14.71 19.51,15.27 19.84,15.97 19.95,16.72 19.83,17.48 19.49,18.16 19.0,19.7" stroke="#2f80e8" stroke-width="1.6" fill="none" stroke-linecap="round" stroke-linejoin="round"/></g></g><g transform="translate(626.00,66.00)"><path d="M2.5,7.0 h6.6 v6.6 h-6.6 z" fill="url(#iGy)" stroke="#333" stroke-width="0.6"/><path d="M2.5,7.0 l2.8,-2.8 h6.6 l-2.8,2.8 z" fill="#e8e8e8" stroke="#333" stroke-width="0.6"/><path d="M9.1,7.0 l2.8,-2.8 v6.6 l-2.8,2.8 z" fill="#666" stroke="#333" stroke-width="0.6"/><path d="M12.0,7.0 h6.6 v6.6 h-6.6 z" fill="#f4f4f4" stroke="#333" stroke-width="0.6"/><path d="M12.0,7.0 l2.8,-2.8 h6.6 l-2.8,2.8 z" fill="#fff" stroke="#333" stroke-width="0.6"/><path d="M18.6,7.0 l2.8,-2.8 v6.6 l-2.8,2.8 z" fill="#ddd" stroke="#333" stroke-width="0.6"/><rect x="3.0" y="9.8" width="6" height="11.6" rx="2.6" fill="#111"/><rect x="15.0" y="9.8" width="6" height="11.6" rx="2.6" fill="#111"/><circle cx="6.0" cy="12.8" r="2.2" fill="#ffc000"/><circle cx="6.0" cy="18.4" r="2.2" fill="#10e020"/><circle cx="18.0" cy="12.8" r="2.2" fill="#f01010"/><circle cx="18.0" cy="18.4" r="2.2" fill="#ffc000"/></g><g transform="translate(652.00,66.00)"><path d="M2.5,7.0 h6.6 v6.6 h-6.6 z" fill="url(#iGy)" stroke="#333" stroke-width="0.6"/><path d="M2.5,7.0 l2.8,-2.8 h6.6 l-2.8,2.8 z" fill="#e8e8e8" stroke="#333" stroke-width="0.6"/><path d="M9.1,7.0 l2.8,-2.8 v6.6 l-2.8,2.8 z" fill="#666" stroke="#333" stroke-width="0.6"/><path d="M12.0,7.0 h6.6 v6.6 h-6.6 z" fill="#f4f4f4" stroke="#333" stroke-width="0.6"/><path d="M12.0,7.0 l2.8,-2.8 h6.6 l-2.8,2.8 z" fill="#fff" stroke="#333" stroke-width="0.6"/><path d="M18.6,7.0 l2.8,-2.8 v6.6 l-2.8,2.8 z" fill="#ddd" stroke="#333" stroke-width="0.6"/><polygon points="18.7,17.9 18.0,19.0 17.0,20.0 15.8,20.8 14.4,21.3 12.9,21.6 11.4,21.5 9.9,21.2 8.5,20.6 7.3,19.8 6.4,18.8 4.9,19.5 7.3,15.1 10.8,16.7 9.4,17.4 9.8,17.9 10.4,18.3 11.1,18.6 11.8,18.8 12.6,18.8 13.4,18.7 14.1,18.4 14.7,18.0 15.2,17.5 15.5,17.0" fill="#e6e010" stroke="#a89a00" stroke-width="0.5" stroke-linejoin="round"/><polygon points="5.9,12.9 6.6,11.8 7.6,10.8 8.8,10.0 10.2,9.5 11.7,9.2 13.2,9.3 14.7,9.6 16.1,10.2 17.3,11.0 18.2,12.0 19.7,11.3 17.3,15.7 13.8,14.1 15.2,13.4 14.8,12.9 14.2,12.5 13.5,12.2 12.8,12.0 12.0,12.0 11.2,12.1 10.5,12.4 9.9,12.8 9.4,13.3 9.1,13.8" fill="#2aa02a" stroke="#157a15" stroke-width="0.5" stroke-linejoin="round"/></g><g transform="translate(678.00,66.00)"><path d="M2.5,7.0 h6.6 v6.6 h-6.6 z" fill="url(#iGy)" stroke="#333" stroke-width="0.6"/><path d="M2.5,7.0 l2.8,-2.8 h6.6 l-2.8,2.8 z" fill="#e8e8e8" stroke="#333" stroke-width="0.6"/><path d="M9.1,7.0 l2.8,-2.8 v6.6 l-2.8,2.8 z" fill="#666" stroke="#333" stroke-width="0.6"/><path d="M12.0,7.0 h6.6 v6.6 h-6.6 z" fill="#f4f4f4" stroke="#333" stroke-width="0.6"/><path d="M12.0,7.0 l2.8,-2.8 h6.6 l-2.8,2.8 z" fill="#fff" stroke="#333" stroke-width="0.6"/><path d="M18.6,7.0 l2.8,-2.8 v6.6 l-2.8,2.8 z" fill="#ddd" stroke="#333" stroke-width="0.6"/><path d="M2.7,14.0 h7.0 M6.2,10.5 v7.0" stroke="#3a5a30" stroke-width="2.4" fill="none" opacity="0.55"/><path d="M2.0,13.3 h7.0 M5.5,9.8 v7.0" stroke="#7cf04c" stroke-width="2.4" fill="none"/><path d="M8.2,21.5 L14,13" stroke="#111" stroke-width="1.2"/><path d="M13.2,19.8 h7.6" stroke="#a8a800" stroke-width="2.6" fill="none" transform="translate(0.5,0.6)"/><path d="M13.2,19.8 h7.6" stroke="#f0f000" stroke-width="2.6" fill="none"/></g><g transform="translate(705.00,66.00)"><ellipse cx="16.0" cy="19.8" rx="7" ry="1.8" fill="#555" opacity="0.55"/><path d="M6.5,6.2 V18.8 A5.5,2.2 0 0 0 17.5,18.8 V6.2 A5.5,2.2 0 0 0 6.5,6.2 Z" fill="url(#iB)" stroke="#101828" stroke-width="1.0"/><ellipse cx="12.0" cy="6.2" rx="5.5" ry="2.2" fill="#3a60b0" stroke="#101828" stroke-width="1.0"/><path d="M12,8.5v12" stroke="#000" stroke-width="1.3" stroke-dasharray="2.6 1.6"/></g><g transform="translate(731.00,66.00)"><ellipse cx="16.0" cy="19.8" rx="7" ry="1.8" fill="#555" opacity="0.55"/><path d="M6.5,6.2 V18.8 A5.5,2.2 0 0 0 17.5,18.8 V6.2 A5.5,2.2 0 0 0 6.5,6.2 Z" fill="#d8dcea" stroke="#101828" stroke-width="1.0"/><ellipse cx="12.0" cy="6.2" rx="5.5" ry="2.2" fill="#3a60b0" stroke="#101828" stroke-width="1.0"/><path d="M9,8.6v12" stroke="#3a60b0" stroke-width="1.3"/><path d="M11,8.8v12" stroke="#f0f040" stroke-width="1.3"/><path d="M13,8.8v12" stroke="#3a60b0" stroke-width="1.3"/><path d="M15,8.6v12" stroke="#f0f040" stroke-width="1.3"/></g><g transform="translate(757.00,66.00)"><ellipse cx="16.0" cy="19.8" rx="7" ry="1.8" fill="#555" opacity="0.55"/><path d="M6.5,6.2 V18.8 A5.5,2.2 0 0 0 17.5,18.8 V6.2 A5.5,2.2 0 0 0 6.5,6.2 Z" fill="url(#iL)" stroke="#30e0f0" stroke-width="1.1"/><ellipse cx="12.0" cy="6.2" rx="5.5" ry="2.2" fill="#d0d6f0" stroke="#30e0f0" stroke-width="1.1"/><path d="M6.5,18.8 A5.5,2.2 0 0 1 17.5,18.8" fill="none" stroke="#30e0f0" stroke-width="0.8800000000000001"/><path d="M8.2,12.8 l3.6,5.4 l7,-10" stroke="#3aa82a" stroke-width="3" fill="none"/><path d="M8.6,12.5 l3.2,4.6 l6.6,-9.4" stroke="#8ae860" stroke-width="1.1" fill="none"/></g><g transform="translate(783.00,66.00)"><ellipse cx="6" cy="16" rx="6" ry="1.8" fill="#333" opacity="0.7"/><path d="M6.5,6.2 V18.8 A5.5,2.2 0 0 0 17.5,18.8 V6.2 A5.5,2.2 0 0 0 6.5,6.2 Z" fill="url(#iL)" stroke="#30e0f0" stroke-width="1.1"/><ellipse cx="12.0" cy="6.2" rx="5.5" ry="2.2" fill="#d0d6f0" stroke="#30e0f0" stroke-width="1.1"/><path d="M6.5,18.8 A5.5,2.2 0 0 1 17.5,18.8" fill="none" stroke="#30e0f0" stroke-width="0.8800000000000001"/><rect x="15" y="2.5" width="5.2" height="5.2" fill="#f4e0c0" stroke="#c89010" stroke-width="1.3"/><path d="M16.5,6.5 a1.6,1.6 0 1 1 2.2,0.5" stroke="#e03010" stroke-width="1" fill="none"/></g><g transform="translate(809.00,66.00)"><path d="M6.5,6.2 V18.8 A5.5,2.2 0 0 0 17.5,18.8 V6.2 A5.5,2.2 0 0 0 6.5,6.2 Z" fill="#dce6fa" stroke="#4a98e8" stroke-width="1.0"/><ellipse cx="12.0" cy="6.2" rx="5.5" ry="2.2" fill="#dce6fa" stroke="#4a98e8" stroke-width="1.0"/><path d="M9,7.5c1.5,4 -1,7 0.8,12 M11.5,8c2,4 -0.5,7 1.2,12.5 M14.5,7.5c1.5,4 -1.5,8 0.3,12.5 M10,12l4,5" stroke="#4a98e8" stroke-width="0.8" fill="none"/></g><g transform="translate(835.00,66.00)"><path d="M3.5,7.5 L12,4 L20.5,7.5 L12,11.5 Z" fill="#5a9ae8" stroke="#0a1020" stroke-width="1.2" stroke-linejoin="round"/><path d="M3.5,7.5 L12,11.5 V21 C7,18 4.5,13 3.5,7.5 Z" fill="#2a5ab8" stroke="#0a1020" stroke-width="1.2" stroke-linejoin="round"/><path d="M20.5,7.5 L12,11.5 V21 C17,18 19.5,13 20.5,7.5 Z" fill="#1a2f88" stroke="#0a1020" stroke-width="1.2" stroke-linejoin="round"/></g><g transform="translate(876.00,66.00)"><path d="M2,4h3.4 M3.7,2.3v3.4 M2,7.6h3.4" stroke="#000" stroke-width="0.9"/><path d="M13.5,15.5 h6.2 v6.2 h-6.2 z" fill="#8c8c8c" stroke="#333" stroke-width="0.5"/><path d="M13.5,15.5 l2.5,-2.5 h6.2 l-2.5,2.5 z" fill="#b8b8b8" stroke="#333" stroke-width="0.5"/><path d="M19.7,15.5 l2.5,-2.5 v6.2 l-2.5,2.5 z" fill="#4c4c4c" stroke="#333" stroke-width="0.5"/><path d="M9.8,12.2 l-4.1,4.1" stroke="#8a8a8a" stroke-width="3" stroke-linecap="round"/><path d="M9.8,12.2 l-4.1,4.1" stroke="#dcdcdc" stroke-width="1.4" stroke-linecap="round"/><circle cx="13.2" cy="8.8" r="5.7" fill="url(#iGl)" stroke="#c8d0dc" stroke-width="1.4"/><path d="M12,5.5v5.4l4.4,-2.7z" fill="#a8c4e8" stroke="#7a9cd0" stroke-width="0.5"/></g><g transform="translate(902.00,66.00)"><path d="M13.5,15.5 h6.2 v6.2 h-6.2 z" fill="#8c8c8c" stroke="#333" stroke-width="0.5"/><path d="M13.5,15.5 l2.5,-2.5 h6.2 l-2.5,2.5 z" fill="#b8b8b8" stroke="#333" stroke-width="0.5"/><path d="M19.7,15.5 l2.5,-2.5 v6.2 l-2.5,2.5 z" fill="#4c4c4c" stroke="#333" stroke-width="0.5"/><path d="M9.6,12.2 l-4.1,4.1" stroke="#8a8a8a" stroke-width="3" stroke-linecap="round"/><path d="M9.6,12.2 l-4.1,4.1" stroke="#dcdcdc" stroke-width="1.4" stroke-linecap="round"/><circle cx="13.0" cy="8.8" r="5.7" fill="url(#iGl)" stroke="#c8d0dc" stroke-width="1.4"/><path d="M11.5,5.5v5.4l4.4,-2.7z" fill="#a8c4e8" stroke="#7a9cd0" stroke-width="0.5"/><rect x="1.8" y="2.3" width="3.4" height="3.4" fill="#22b022"/><path d="M1.8,2.3 l3.4,3.4 M5.2,2.3 l-3.4,3.4" stroke="#9af07a" stroke-width="0.7"/><rect x="18.3" y="2.3" width="3.4" height="3.4" fill="#22b022"/><path d="M18.3,2.3 l3.4,3.4 M21.7,2.3 l-3.4,3.4" stroke="#9af07a" stroke-width="0.7"/><rect x="1.8" y="16.8" width="3.4" height="3.4" fill="#22b022"/><path d="M1.8,16.8 l3.4,3.4 M5.2,16.8 l-3.4,3.4" stroke="#9af07a" stroke-width="0.7"/><rect x="18.3" y="16.8" width="3.4" height="3.4" fill="#22b022"/><path d="M18.3,16.8 l3.4,3.4 M21.7,16.8 l-3.4,3.4" stroke="#9af07a" stroke-width="0.7"/></g><g transform="translate(929.00,66.00)"><rect x="5" y="6.5" width="14" height="10.5" fill="url(#iW)" stroke="#444" stroke-width="1.2"/><text x="5.6" y="15.3" font-family="Liberation Sans,sans-serif" font-weight="bold" font-size="8.6" fill="#2a1a88" textLength="12.8" lengthAdjust="spacingAndGlyphs">1:1</text><rect x="2.8" y="3.8" width="3.4" height="3.4" fill="#22b022"/><path d="M2.8,3.8 l3.4,3.4 M6.2,3.8 l-3.4,3.4" stroke="#9af07a" stroke-width="0.7"/><rect x="17.8" y="3.8" width="3.4" height="3.4" fill="#22b022"/><path d="M17.8,3.8 l3.4,3.4 M21.2,3.8 l-3.4,3.4" stroke="#9af07a" stroke-width="0.7"/><rect x="2.8" y="16.3" width="3.4" height="3.4" fill="#22b022"/><path d="M2.8,16.3 l3.4,3.4 M6.2,16.3 l-3.4,3.4" stroke="#9af07a" stroke-width="0.7"/><rect x="17.8" y="16.3" width="3.4" height="3.4" fill="#22b022"/><path d="M17.8,16.3 l3.4,3.4 M21.2,16.3 l-3.4,3.4" stroke="#9af07a" stroke-width="0.7"/></g><g transform="translate(955.00,66.00)"><path d="M6.5,18 L18,6.5" stroke="#2aa82a" stroke-width="2.2"/><path d="M21,3.5 l-7.5,2.2 l5.3,5.3 z" fill="#3ac03a" stroke="#1f8a1f" stroke-width="0.5"/><path d="M7.5,16.5 L17.5,6.5" stroke="#a0f080" stroke-width="0.7"/><circle cx="6" cy="18.2" r="2.8" fill="#d0d0c8" stroke="#444" stroke-width="0.7"/><circle cx="5.2" cy="17.4" r="1" fill="#fff"/></g><g transform="translate(981.00,66.00)"><path d="M11,3.2 C5,4.5 3.5,12 7,17 l-2.6,1.2 l6.4,2.6 l1,-6.6 l-2.4,1.2 C7.5,12 8.5,8 11.5,6.6 z" fill="#34b034" stroke="#1f8a1f" stroke-width="0.5"/><path d="M13,20.8 C19,19.5 20.5,12 17,7 l2.6,-1.2 l-6.4,-2.6 l-1,6.6 l2.4,-1.2 C16.500,12 15.5,16 12.500,17.4 z" fill="#34b034" stroke="#1f8a1f" stroke-width="0.5"/></g><g transform="translate(1007.00,66.00)"><path d="M2.5,10.0 C7.1,3.9 14.8,2.7 21.5,7.7 C17.2,10.3 9.0,11.2 2.5,10.0 Z" fill="#bcc4ec" stroke="#a4869e" stroke-width="0.6"/><circle cx="11.7" cy="7.3" r="3.6" fill="#3a5686"/><circle cx="11.7" cy="7.8" r="2.7" fill="#5878aa"/><circle cx="11.7" cy="7.0" r="1.6" fill="#142040"/><circle cx="11.1" cy="5.9" r="0.9" fill="#c4dcff"/><path d="M2.3,10.2 C5.7,3.0 13.8,1.2 21.7,7.8 C15.7,4.5 8.1,5.0 2.3,10.2 Z" fill="#1a2238"/><circle cx="12" cy="15" r="6.3" fill="#f8d830" stroke="#c8a010" stroke-width="0.6"/><circle cx="10.8" cy="12.8" r="3" fill="#fff8a0" opacity="0.6"/><ellipse cx="9.8" cy="13.6" rx="0.9" ry="1.5" fill="#222"/><ellipse cx="14.2" cy="13.6" rx="0.9" ry="1.5" fill="#222"/><path d="M8.6,17 c2,2 5,2 6.8,0" stroke="#6a4a00" stroke-width="0.8" fill="none"/></g><g transform="translate(1050.00,66.00)"><path d="M3.5,12.5 l9.0,-5.0 l9.0,5.0 l-9.0,6.0 z" fill="#dfe6fa" stroke="#b4bcd4" stroke-width="0.5"/><path d="M8.5,13.5 v-9.0" stroke="#1060f0" stroke-width="1.6"/><path d="M8.5,1.0 l-2.2,4.2 h4.4 z" fill="#1060f0"/><path d="M8.5,13.5 l7.0,-5.0" stroke="#28b028" stroke-width="1.6"/><path d="M18.5,6.3 l-4.6,0.6 l2.6,3.4 z" fill="#28b028"/><path d="M8.5,13.5 l6.5,4.5" stroke="#e02020" stroke-width="1.6"/><path d="M18.0,20.1 l-2.2,-4.0 l-2.8,2.6 z" fill="#e02020"/><circle cx="8.5" cy="13.5" r="1.9" fill="#c8c8c8" stroke="#555" stroke-width="0.5"/></g><g transform="translate(1076.00,66.00)"><path d="M10.2,7.0 l5.0,-2.8 l5.0,2.8 l-5.0,3.3 z" fill="#dfe6fa" stroke="#b4bcd4" stroke-width="0.5"/><path d="M13.0,7.5 v-5.0" stroke="#1060f0" stroke-width="0.9"/><path d="M13.0,0.6 l-1.2,2.3 h2.4 z" fill="#1060f0"/><path d="M13.0,7.5 l3.9,-2.8" stroke="#28b028" stroke-width="0.9"/><path d="M18.5,3.5 l-2.5,0.3 l1.4,1.9 z" fill="#28b028"/><path d="M13.0,7.5 l3.6,2.5" stroke="#e02020" stroke-width="0.9"/><path d="M18.2,11.1 l-1.2,-2.2 l-1.5,1.4 z" fill="#e02020"/><circle cx="13.0" cy="7.5" r="1.0" fill="#c8c8c8" stroke="#555" stroke-width="0.5"/><rect x="10.5" y="16" width="9.5" height="5" fill="#d8dcea" stroke="#888" stroke-width="1.4"/><path d="M4.5,20 L10,13.5 l-2.2,-1.6 l7,-2.2 l-1.6,7.2 l-1.8,-1.8 L7,21.5 z" fill="#3ab83a" stroke="#1a7a1a" stroke-width="0.7"/><circle cx="5" cy="20.5" r="2" fill="#c8c8c0" stroke="#555" stroke-width="0.5"/></g><g transform="translate(1102.00,66.00)"><path d="M12.2,7.0 l5.0,-2.8 l5.0,2.8 l-5.0,3.3 z" fill="#dfe6fa" stroke="#b4bcd4" stroke-width="0.5"/><path d="M15.0,7.5 v-5.0" stroke="#1060f0" stroke-width="0.9"/><path d="M15.0,0.6 l-1.2,2.3 h2.4 z" fill="#1060f0"/><path d="M15.0,7.5 l3.9,-2.8" stroke="#28b028" stroke-width="0.9"/><path d="M20.5,3.5 l-2.5,0.3 l1.4,1.9 z" fill="#28b028"/><path d="M15.0,7.5 l3.6,2.5" stroke="#e02020" stroke-width="0.9"/><path d="M20.2,11.1 l-1.2,-2.2 l-1.5,1.4 z" fill="#e02020"/><circle cx="15.0" cy="7.5" r="1.0" fill="#c8c8c8" stroke="#555" stroke-width="0.5"/><path d="M2.5,9 l5.500,0.300 l-1.500,1.800 l5,5.400 l1.800,-1.600 l0.300,5.800 l-5.800,-0.400 l1.700,-1.600 l-5,-5.400 l-1.700,1.700 z" fill="#3ab83a" stroke="#1a7a1a" stroke-width="0.7"/></g><g transform="translate(1145.00,66.00)"><rect x="2.8" y="3.0" width="5.6" height="5.6" fill="#00d8f8"/><rect x="9.0" y="3.0" width="5.6" height="5.6" fill="#ffd800"/><rect x="15.2" y="3.0" width="5.6" height="5.6" fill="#00e800"/><rect x="2.8" y="9.2" width="5.6" height="5.6" fill="#ff8800"/><rect x="9.0" y="9.2" width="5.6" height="5.6" fill="#b06000"/><rect x="15.2" y="9.2" width="5.6" height="5.6" fill="#ff00e0"/><rect x="2.8" y="15.4" width="5.6" height="5.6" fill="#0000f0"/><rect x="9.0" y="15.4" width="5.6" height="5.6" fill="#00a830"/><rect x="15.2" y="15.4" width="5.6" height="5.6" fill="#888888"/></g><g transform="translate(1171.00,66.00)"><rect x="4" y="2.5" width="15.5" height="19" fill="#dce8fc" stroke="#8a90a0" stroke-width="1"/><rect x="6" y="4.5" width="11.5" height="1.6" fill="#4a90e8"/><path d="M6,8h4 M13.500,8h4" stroke="#f0a020" stroke-width="1"/><path d="M6,10.3h11.5" stroke="#8ad060" stroke-width="1.2"/><rect x="7.3" y="12.4" width="2.6" height="2.3" fill="#00d8f8"/><rect x="10.3" y="12.4" width="2.6" height="2.3" fill="#ffd800"/><rect x="13.3" y="12.4" width="2.6" height="2.3" fill="#00e800"/><rect x="7.3" y="15.1" width="2.6" height="2.3" fill="#ff8800"/><rect x="10.3" y="15.1" width="2.6" height="2.3" fill="#b06000"/><rect x="13.3" y="15.1" width="2.6" height="2.3" fill="#ff00e0"/><rect x="7.3" y="17.8" width="2.6" height="2.3" fill="#0000f0"/><rect x="10.3" y="17.8" width="2.6" height="2.3" fill="#00a830"/><rect x="13.3" y="17.8" width="2.6" height="2.3" fill="#888888"/></g><g transform="translate(1197.00,66.00)"><circle cx="12" cy="12.2" r="9.3" fill="#6a9a3a" stroke="#4a6a3a" stroke-width="1.2"/><path d="M9,19.5 c0.5,-3 5.500,-3 6,0 c-1,1.600 -5,1.600 -6,0z" fill="#b8b890"/><path d="M16.500,5.500 L8,18" stroke="#4a84d0" stroke-width="2.2" stroke-linecap="round"/><path d="M17,4.500 l-2,3.200" stroke="#e0e8f0" stroke-width="1.500"/><path d="M8.500,7.500 L16.500,17.500" stroke="#e4e4e4" stroke-width="2.2" stroke-linecap="round"/><path d="M7,4.500 a3,3 0 1 0 4.200,3 l-2.300,0.400 l-1.200,-1.600 z" fill="#eee" stroke="#888" stroke-width="0.4"/></g><g transform="translate(1223.00,66.00)"><rect x="3" y="3" width="18" height="18" fill="#c8dcf8" stroke="#556" stroke-width="1"/><rect x="3.500" y="3.500" width="17" height="3.200" fill="#3a6ab8"/><path d="M6.500,8.800h10" stroke="#b8b020" stroke-width="1.600" stroke-dasharray="1.800 1"/><path d="M5.500,9v9" stroke="#b06030" stroke-width="1.600" stroke-dasharray="1.800 1"/><path d="M17.500,10.500 L10,19" stroke="#5a8ad0" stroke-width="1.800" stroke-linecap="round"/><path d="M10.500,11.500 L17.500,19" stroke="#c8d0d8" stroke-width="1.800" stroke-linecap="round"/><circle cx="10" cy="11" r="1.600" fill="none" stroke="#c8d0d8" stroke-width="1.200"/></g><g transform="translate(1249.00,66.00)"><circle cx="3.5" cy="3.800" r="0.900" fill="#1a3a88"/><circle cx="3.5" cy="19.800" r="0.900" fill="#1a3a88"/><circle cx="6.6" cy="3.800" r="0.900" fill="#1a3a88"/><circle cx="6.6" cy="19.800" r="0.900" fill="#1a3a88"/><circle cx="9.7" cy="3.800" r="0.900" fill="#1a3a88"/><circle cx="9.7" cy="19.800" r="0.900" fill="#1a3a88"/><circle cx="12.8" cy="3.800" r="0.900" fill="#1a3a88"/><circle cx="12.8" cy="19.800" r="0.900" fill="#1a3a88"/><circle cx="15.9" cy="3.800" r="0.900" fill="#1a3a88"/><circle cx="15.9" cy="19.800" r="0.900" fill="#1a3a88"/><circle cx="19.0" cy="3.800" r="0.900" fill="#1a3a88"/><circle cx="19.0" cy="19.800" r="0.900" fill="#1a3a88"/><circle cx="3.500" cy="7.0" r="0.900" fill="#1a3a88"/><circle cx="19" cy="7.0" r="0.900" fill="#1a3a88"/><circle cx="3.500" cy="10.2" r="0.900" fill="#1a3a88"/><circle cx="19" cy="10.2" r="0.900" fill="#1a3a88"/><circle cx="3.500" cy="13.4" r="0.900" fill="#1a3a88"/><circle cx="19" cy="13.4" r="0.900" fill="#1a3a88"/><circle cx="3.500" cy="16.6" r="0.900" fill="#1a3a88"/><circle cx="19" cy="16.6" r="0.900" fill="#1a3a88"/><path d="M7,13.500 L12,7 c2,-2.500 5,-2.500 8,-2 v6 c-3,0 -4,1.500 -6.500,3.500 c-2,1 -4,1.800 -6.500,-1z" fill="#e8b870" stroke="#8a5a20" stroke-width="0.6"/><circle cx="7" cy="17" r="2.800" fill="#f8f060" stroke="#c8b020" stroke-width="0.5"/><path d="M4.800,17h4.400 M7,14.800v4.400" stroke="#1a50d0" stroke-width="1.100"/></g><g transform="translate(1275.00,66.00)"><ellipse cx="16" cy="19" rx="7" ry="1.600" fill="#555" opacity="0.500"/><path d="M3.500,20 L8,6 L22,3.500 L17.500,18 Z" fill="#3a5ac8" stroke="#2a70e0" stroke-width="1.200"/><path d="M6.3,19.6 L10.8,5.5" stroke="#e05050" stroke-width="0.700"/><path d="M4.4,17.2 L18.4,15.1" stroke="#e05050" stroke-width="0.700"/><path d="M9.1,19.2 L13.6,5.0" stroke="#e05050" stroke-width="0.700"/><path d="M5.3,14.4 L19.3,12.2" stroke="#e05050" stroke-width="0.700"/><path d="M11.9,18.8 L16.4,4.5" stroke="#e05050" stroke-width="0.700"/><path d="M6.2,11.6 L20.2,9.3" stroke="#e05050" stroke-width="0.700"/><path d="M14.7,18.4 L19.2,4.0" stroke="#e05050" stroke-width="0.700"/><path d="M7.1,8.8 L21.1,6.4" stroke="#e05050" stroke-width="0.700"/></g></svg>
<div id="left" class="abs"><div class="hgrip" style="top:3px"></div><div class="hgrip" style="top:256px"></div></div>
<svg class="abs" style="left:0;top:125px" width="60" height="245" viewBox="0 125 60 245"><g transform="translate(5.00,131.00)"><path d="M5,7h5 M4,10h5 M5.500,13h4" stroke="#a0b8d8" stroke-width="1.200"/><path d="M10.9,12.6 l-4.4,4.4" stroke="#8a8a8a" stroke-width="3" stroke-linecap="round"/><path d="M10.9,12.6 l-4.4,4.4" stroke="#dcdcdc" stroke-width="1.4" stroke-linecap="round"/><circle cx="14.0" cy="9.5" r="5.2" fill="url(#iGl)" stroke="#c8d0dc" stroke-width="1.4"/></g><g transform="translate(5.00,157.00)"><rect x="5.500" y="6.500" width="13" height="10.500" fill="url(#iW)" stroke="#8090b0" stroke-width="0.800"/><rect x="3.2" y="4.2" width="3.6" height="3.6" fill="#22b022"/><path d="M3.2,4.2 l3.6,3.6 M6.8,4.2 l-3.6,3.6" stroke="#9af07a" stroke-width="0.7"/><rect x="17.2" y="4.2" width="3.6" height="3.6" fill="#22b022"/><path d="M17.2,4.2 l3.6,3.6 M20.8,4.2 l-3.6,3.6" stroke="#9af07a" stroke-width="0.7"/><rect x="3.2" y="15.7" width="3.6" height="3.6" fill="#22b022"/><path d="M3.2,15.7 l3.6,3.6 M6.8,15.7 l-3.6,3.6" stroke="#9af07a" stroke-width="0.7"/><rect x="17.2" y="15.7" width="3.6" height="3.6" fill="#22b022"/><path d="M17.2,15.7 l3.6,3.6 M20.8,15.7 l-3.6,3.6" stroke="#9af07a" stroke-width="0.7"/></g><g transform="translate(5.00,183.00)"><path d="M2,4h3.400 M3.700,2.300v3.400 M2,7.600h3.400" stroke="#000" stroke-width="0.900"/><path d="M13.5,15.5 h6.2 v6.2 h-6.2 z" fill="#8c8c8c" stroke="#333" stroke-width="0.5"/><path d="M13.5,15.5 l2.5,-2.5 h6.2 l-2.5,2.5 z" fill="#b8b8b8" stroke="#333" stroke-width="0.5"/><path d="M19.7,15.5 l2.5,-2.5 v6.2 l-2.5,2.5 z" fill="#4c4c4c" stroke="#333" stroke-width="0.5"/><path d="M9.8,12.2 l-4.1,4.1" stroke="#8a8a8a" stroke-width="3" stroke-linecap="round"/><path d="M9.8,12.2 l-4.1,4.1" stroke="#dcdcdc" stroke-width="1.4" stroke-linecap="round"/><circle cx="13.2" cy="8.8" r="5.7" fill="url(#iGl)" stroke="#c8d0dc" stroke-width="1.4"/><path d="M12,5.500v5.400l4.400,-2.700z" fill="#a8c4e8" stroke="#7a9cd0" stroke-width="0.500"/><path d="M17.500,1.500h6l-3,3.200z" fill="#000"/></g><g transform="translate(5.00,209.00)"><path d="M4.0,13.0 l9.0,-5.0 l9.0,5.0 l-9.0,6.0 z" fill="#dfe6fa" stroke="#b4bcd4" stroke-width="0.5"/><path d="M9.0,14.0 v-9.0" stroke="#1060f0" stroke-width="1.6"/><path d="M9.0,1.5 l-2.2,4.2 h4.4 z" fill="#1060f0"/><path d="M9.0,14.0 l7.0,-5.0" stroke="#28b028" stroke-width="1.6"/><path d="M19.0,6.8 l-4.6,0.6 l2.6,3.4 z" fill="#28b028"/><path d="M9.0,14.0 l6.5,4.5" stroke="#e02020" stroke-width="1.6"/><path d="M18.5,20.6 l-2.2,-4.0 l-2.8,2.6 z" fill="#e02020"/><circle cx="9.0" cy="14.0" r="1.9" fill="#c8c8c8" stroke="#555" stroke-width="0.5"/><path d="M17.500,1.500h6l-3,3.200z" fill="#000"/></g><g transform="translate(5.00,235.00)"><path d="M2,5.500 l3,-2.200 h10 l3,2.200 z" fill="#7a7af8"/><path d="M2,5.500h16v2h-16z" fill="#c8c8ff"/><path d="M2.500,9h15v2.200h-15z" fill="#f0f0f0" stroke="#777" stroke-width="0.400"/><path d="M3,12.500h13v2.400h-13z" fill="#e0e0e0" stroke="#666" stroke-width="0.400"/><ellipse cx="13" cy="17.500" rx="7.200" ry="4.600" fill="#c89a80" stroke="#6a4030" stroke-width="0.700"/><circle cx="9.500" cy="18.500" r="2" fill="#1040f0"/><circle cx="14.200" cy="18.600" r="2" fill="#10b020"/><circle cx="16.200" cy="15" r="1.900" fill="#e01818"/><path d="M21.500,3.500 L13.500,14" stroke="#b8601a" stroke-width="1.700"/><path d="M17.500,1.500h6l-3,3.200z" fill="#000"/></g><g transform="translate(5.00,260.00)"><polygon points="18.3,16.1 17.5,17.5 16.5,18.8 15.2,19.8 13.7,20.4 12.1,20.8 10.5,20.7 8.9,20.3 7.5,19.6 6.2,18.5 5.3,17.2 3.8,18.0 6.2,12.5 9.9,14.5 8.4,15.4 8.9,16.1 9.5,16.6 10.2,17.0 11.0,17.2 11.8,17.2 12.6,17.0 13.4,16.7 14.0,16.2 14.5,15.6 14.9,14.8" fill="url(#iRf)" stroke="#6a98d8" stroke-width="0.5" stroke-linejoin="round"/><polygon points="4.7,9.9 5.5,8.5 6.5,7.2 7.8,6.2 9.3,5.6 10.9,5.2 12.5,5.3 14.1,5.7 15.5,6.4 16.8,7.5 17.7,8.8 19.2,7.9 16.8,13.5 13.1,11.4 14.6,10.6 14.1,9.9 13.5,9.4 12.8,9.0 12.0,8.8 11.2,8.8 10.4,9.0 9.6,9.3 9.0,9.8 8.5,10.4 8.1,11.2" fill="url(#iRf)" stroke="#6a98d8" stroke-width="0.5" stroke-linejoin="round"/><path d="M17.500,1.500h6l-3,3.200z" fill="#000"/></g><g transform="translate(5.00,286.00)"><ellipse cx="12" cy="20.500" rx="6" ry="1.500" fill="#777" opacity="0.500"/><text x="6" y="19" font-family="Liberation Sans,sans-serif" font-weight="bold" font-size="19" fill="#3a6ac0" stroke="#a8c4f0" stroke-width="0.500">?</text><path d="M17.500,1.500h6l-3,3.200z" fill="#000"/></g><g transform="translate(5.00,312.00)"><ellipse cx="14" cy="21" rx="7" ry="1.600" fill="#666" opacity="0.500"/><path d="M5,7.500 h14 l-2,13.500 h-10 z" fill="#a8d0f0" stroke="#5a88b8" stroke-width="0.800" opacity="0.950"/><ellipse cx="12" cy="7.500" rx="7" ry="1.800" fill="#d0e8fc" stroke="#5a88b8" stroke-width="0.800"/><path d="M10,3.500h4l1,4h-6z" fill="#f0e020"/><path d="M9,11l5,3l-4,3l4,3" stroke="#e8f0a0" stroke-width="1.500" fill="none"/><path d="M17.500,1.500h6l-3,3.200z" fill="#000"/></g><g transform="translate(5.00,338.00)"><path d="M3,4v15" stroke="#333" stroke-width="1.400"/><path d="M5.500,5v13" stroke="#4a8ac8" stroke-width="1.800"/><circle cx="13" cy="12.500" r="6.200" fill="none" stroke="#8a4a20" stroke-width="1.200"/><path d="M13,4.500v16 M5,12.500h16 M7.300,6.800l11.400,11.400 M18.700,6.800L7.300,18.200" stroke="#8a4a20" stroke-width="0.900"/><circle cx="13" cy="12.500" r="2" fill="#f0a020"/><path d="M3,18 l7,-1 l8,1.500 l-7,3.500 z" fill="#ff8a10"/><path d="M5,18.500l8,1 M8,17.500l7,1.500 M7,20l4,-2.500 M11,21l4,-3" stroke="#fff" stroke-width="0.500"/><path d="M17.500,1.500h6l-3,3.200z" fill="#000"/></g><g transform="translate(32.00,131.00)"><path d="M4,5l14,14 M3,9l12,12" stroke="#3a78d8" stroke-width="1.200" stroke-dasharray="3 1.500"/><path d="M5.0,19.0 L9.0,17.4 L6.6,15.0 Z" fill="#f0d8a8" stroke="#7a5a20" stroke-width="0.4"/><path d="M9.0,17.4 L19.4,7.0 L17.0,4.6 L6.6,15.0 Z" fill="#e8a030" stroke="#8a5a10" stroke-width="0.4"/><path d="M19.4,7.0 L21.2,5.2 L18.8,2.8 L17.0,4.6 Z" fill="#e03030"/><path d="M5.0,19.0 l0.8,-0.8" stroke="#222" stroke-width="0.9"/><path d="M17.500,1.500h6l-3,3.200z" fill="#000"/></g><g transform="translate(32.00,157.00)"><path d="M3,8c0,-6 8,-4 8,2c0,7 9,9 9,3" stroke="#3a78d8" stroke-width="1.600" fill="none"/><path d="M6.0,19.0 L10.0,17.2 L7.5,14.9 Z" fill="#f0d8a8" stroke="#7a5a20" stroke-width="0.4"/><path d="M10.0,17.2 L19.5,7.0 L17.1,4.7 L7.5,14.9 Z" fill="#e8a030" stroke="#8a5a10" stroke-width="0.4"/><path d="M19.5,7.0 L21.2,5.2 L18.8,2.8 L17.1,4.7 Z" fill="#e03030"/><path d="M6.0,19.0 l0.8,-0.9" stroke="#222" stroke-width="0.9"/><path d="M17.500,1.500h6l-3,3.200z" fill="#000"/></g><g transform="translate(32.00,183.00)"><path d="M4.500,5.500h13v9h-4v5h-9z" fill="#f8f8e8" stroke="#f0e000" stroke-width="1.800"/><path d="M7,12 l3.600,4.600 l7,-9.500" stroke="#3aa82a" stroke-width="2.800" fill="none"/><path d="M7.400,11.800 l3.200,4 l6.600,-8.800" stroke="#8ae860" stroke-width="1" fill="none"/><path d="M17.500,1.500h6l-3,3.200z" fill="#000"/></g><g transform="translate(32.00,209.00)"><path d="M3,14c2,-12 7,-12 9,0c2,9 6,9 8,2" stroke="#3a78d8" stroke-width="1.600" fill="none"/><path d="M6.0,19.0 L10.0,17.2 L7.5,14.9 Z" fill="#f0d8a8" stroke="#7a5a20" stroke-width="0.4"/><path d="M10.0,17.2 L19.5,7.0 L17.1,4.7 L7.5,14.9 Z" fill="#e8a030" stroke="#8a5a10" stroke-width="0.4"/><path d="M19.5,7.0 L21.2,5.2 L18.8,2.8 L17.1,4.7 Z" fill="#e03030"/><path d="M6.0,19.0 l0.8,-0.9" stroke="#222" stroke-width="0.9"/><path d="M17.500,1.500h6l-3,3.200z" fill="#000"/></g><g transform="translate(32.00,235.00)"><ellipse cx="14" cy="20" rx="7" ry="1.600" fill="#555" opacity="0.500"/><path d="M3.500,19.500 L8,6.500 L21,3.500 L17.500,17 Z" fill="#a8d0f8" stroke="#2a6ae0" stroke-width="1.400"/><path d="M5.800,13 L19.200,10.200 M14.500,5 L10.500,18.200" stroke="#2a6ae0" stroke-width="1.200"/><path d="M9,8l4,-1l-1,3.500l-4,1z" fill="#e8f4ff"/><path d="M17.500,1.500h6l-3,3.200z" fill="#000"/></g><g transform="translate(32.00,260.00)"><ellipse cx="14" cy="20.500" rx="7.500" ry="1.800" fill="#555" opacity="0.500"/><path d="M3.500,7.500 L12,4.500 L20,7.500 L12,11 Z" fill="#e4e4e0" stroke="#555" stroke-width="0.600"/><path d="M3.500,7.500 L12,11 V20.500 L4.500,16.500 Z" fill="#a8a8a0" stroke="#555" stroke-width="0.600"/><path d="M20,7.500 L12,11 V20.500 L19,16.500 Z" fill="#6a6a64" stroke="#555" stroke-width="0.600"/><path d="M17.500,1.500h6l-3,3.200z" fill="#000"/></g><g transform="translate(32.00,286.00)"><path d="M3.500,6v14 M20.500,6v14" stroke="#555" stroke-width="1.400"/><path d="M5,8.500h14" stroke="#f0e800" stroke-width="1.800"/><path d="M3.800,8.500l4,-2.400v4.800z M20.200,8.500l-4,-2.400v4.800z" fill="#f0e800" stroke="#a8a000" stroke-width="0.300"/><path d="M17.500,1.500h6l-3,3.200z" fill="#000"/></g><g transform="translate(32.00,312.00)"><ellipse cx="12" cy="20" rx="6.500" ry="1.600" fill="#777" opacity="0.500"/><path d="M3.500,9 L11,3 v3.800 c7,0 9.500,4.500 9,9.500 c-0.300,2.200 -1.700,3.400 -3.500,4 c1.800,-4.500 0,-8.300 -5.500,-8.300 v3.800 z" fill="#a4a4a4" stroke="#7a7a7a" stroke-width="0.600"/><path d="M17.500,1.500h6l-3,3.200z" fill="#000"/></g><g transform="translate(32.00,338.00)"><path d="M6.500,12.500h11l3.500,3.500v5.500h-14.500z" fill="url(#iW)" stroke="#111" stroke-width="1.200"/><path d="M3,15 l1,-10 h5 l1.500,2 h7 v8.500 z" fill="#e8c050" stroke="#a8801a" stroke-width="0.600"/><path d="M3,15.500 l3,-7 h13 l-2.500,7 z" fill="url(#iFold)" stroke="#b08820" stroke-width="0.600"/><path d="M9,6 c2,-4 7,-4 8.500,-1 l1.600,-0.800 l-0.800,4.200 l-4.200,-1.200 l1.600,-0.800 c-1,-1.600 -3.400,-1.600 -4.200,0.400 z" fill="#2ab02a"/></g></svg>
<div id="vp" class="abs"></div>
<div class="vb" style="left:64px;top:113px"></div>
<div class="vb" style="left:92px;top:113px"></div>
<div class="vb" style="left:120px;top:113px"></div>
<div class="vb" style="left:148px;top:113px"></div>
<div class="vb" style="left:176px;top:113px"></div>
<div class="vb" style="left:204px;top:113px"></div>
<div class="vb" style="left:232px;top:113px"></div>
<div class="vb" style="left:260px;top:113px"></div>
<div class="vb" style="left:288px;top:113px"></div>
<div class="vb" style="left:316px;top:113px"></div>
<div class="vb" style="left:344px;top:113px"></div>
<div class="vb" style="left:64px;top:141px"></div>
<div class="vb" style="left:64px;top:169px"></div>
<div class="vb" style="left:64px;top:197px;background:#8f8763;border:1px solid #e9c462"></div>
<div class="vb" style="left:64px;top:225px"></div>
<div class="vb" style="left:64px;top:253px"></div>
<svg class="abs" style="left:0;top:0" width="1920" height="1048" viewBox="0 0 1920 1048">
<defs>
<linearGradient id="gG" x1="0" x2="1" y1="0" y2="0"><stop offset="0" stop-color="#38903a"/><stop offset="0.28" stop-color="#3f9f40"/><stop offset="0.55" stop-color="#368a37"/><stop offset="0.8" stop-color="#286628"/><stop offset="1" stop-color="#1b431b"/></linearGradient>
<linearGradient id="gC" x1="0" x2="1" y1="0" y2="0"><stop offset="0" stop-color="#00a8a8"/><stop offset="0.3" stop-color="#05bcbc"/><stop offset="0.65" stop-color="#009a9a"/><stop offset="1" stop-color="#005e62"/></linearGradient>
<linearGradient id="gY" x1="0" x2="1" y1="0" y2="0"><stop offset="0" stop-color="#a8a800"/><stop offset="0.3" stop-color="#b6b408"/><stop offset="0.7" stop-color="#8c8c00"/><stop offset="1" stop-color="#5e5e00"/></linearGradient>
<linearGradient id="gBore" x1="0" x2="1" y1="0" y2="0"><stop offset="0" stop-color="#1d4a1d"/><stop offset="0.35" stop-color="#2d742d"/><stop offset="0.7" stop-color="#3c993c"/><stop offset="1" stop-color="#3a943a"/></linearGradient>
</defs>
<polygon points="857.2,783.2 876.0,755.0 1700.0,755.0 1741.2,714.5 1677.0,795.4 866.4,784.7" fill="#338333" stroke="#000" stroke-width="1.15" stroke-linejoin="round" />
<polygon points="857.2,783.2 866.4,784.7 866.4,795.4 857.5,794.0" fill="#3c9a3c" stroke="#000" stroke-width="1.15" stroke-linejoin="round" />
<polygon points="866.4,784.7 1677.0,795.4 1677.0,805.3 866.4,795.4" fill="#3a943a" stroke="#000" stroke-width="1.15" stroke-linejoin="round" />
<polygon points="866.4,795.4 1677.0,805.3 1673.3,810.7 862.6,800.8 854.2,797.7 857.5,794.0" fill="#338333" stroke="#000" stroke-width="1.15" stroke-linejoin="round" />
<polygon points="862.6,800.8 1673.3,810.7 1673.3,841.2 862.6,831.3" fill="#3a943a" stroke="#000" stroke-width="1.15" stroke-linejoin="round" />
<polygon points="854.2,797.7 862.6,800.8 862.6,831.3 854.2,829.8" fill="#3c9a3c" stroke="#000" stroke-width="1.15" stroke-linejoin="round" />
<polygon points="1677.0,795.4 1741.2,714.5 1741.2,745.8 1673.3,841.2 1673.3,810.7 1677.0,805.3" fill="#1c451c" stroke="#000" stroke-width="1.15" stroke-linejoin="round" />
<polyline points="1693.5,768.0 1738.0,713.5" fill="none" stroke="#3a943a" stroke-width="1.6"/>
<ellipse cx="941.5" cy="778.6" rx="9.2" ry="2.6" fill="#3a943a" stroke="#000" stroke-width="1.15"/>
<ellipse cx="980.0" cy="779.0" rx="6.9" ry="2.0" fill="#3a943a" stroke="#000" stroke-width="1.15"/>
<ellipse cx="1563.0" cy="786.0" rx="6.9" ry="2.0" fill="#3a943a" stroke="#000" stroke-width="1.15"/>
<ellipse cx="1602.0" cy="786.6" rx="9.0" ry="2.4" fill="#3a943a" stroke="#000" stroke-width="1.15"/>
<ellipse cx="1272.0" cy="781.0" rx="5.0" ry="1.6" fill="#3a943a" stroke="#000" stroke-width="1.15"/>
<path d="M1020.0,759.0 A12.0,2.4 0 0 0 1044.0,759.3" fill="#3a943a" stroke="#000" stroke-width="0.8"/>
<path d="M1082.0,759.6 A10.0,2.4 0 0 0 1102.0,759.9" fill="#3a943a" stroke="#000" stroke-width="0.8"/>
<path d="M1127.0,760.0 A9.0,2.4 0 0 0 1145.0,760.3" fill="#3a943a" stroke="#000" stroke-width="0.8"/>
<path d="M1524.0,765.0 A14.0,2.4 0 0 0 1552.0,765.3" fill="#3a943a" stroke="#000" stroke-width="0.8"/>
<path d="M1240.0,762.0 A8.0,2.4 0 0 0 1256.0,762.3" fill="#3a943a" stroke="#000" stroke-width="0.8"/>
<polygon points="1718.3,610.4 1734.6,588.0 1738.0,712.5 1719.8,731.0" fill="#4a4a00" stroke="#000" stroke-width="1.15" stroke-linejoin="round" />
<polygon points="872.3,724.0 1692.7,736.0 1693.0,766.0 872.7,756.2" fill="#9d9dbc" stroke="#000" stroke-width="1.15" stroke-linejoin="round" />
<polygon points="1692.7,735.9 1719.6,699.0 1719.8,730.5 1693.0,766.0" fill="#41414f" stroke="#000" stroke-width="1.15" stroke-linejoin="round" />
<polygon points="872.0,701.0 890.0,674.0 897.0,660.0 1718.3,671.0 1718.3,673.3 1692.0,711.0" fill="#009292" stroke="#000" stroke-width="1.15" stroke-linejoin="round" />
<polygon points="872.0,701.0 1692.0,711.0 1692.7,736.0 872.3,724.0" fill="#00a4a4" stroke="#000" stroke-width="1.15" stroke-linejoin="round" />
<polygon points="1692.0,711.0 1718.3,673.3 1719.6,699.0 1692.7,735.9" fill="#00474e" stroke="#000" stroke-width="1.15" stroke-linejoin="round" />
<ellipse cx="886.5" cy="699.5" rx="4.5" ry="1.3" fill="#008080" stroke="#000" stroke-width="1.15"/>
<ellipse cx="1703.0" cy="681.5" rx="4.0" ry="1.3" fill="#008080" stroke="#000" stroke-width="1.15"/>
<ellipse cx="1681.0" cy="708.0" rx="4.0" ry="1.3" fill="#008080" stroke="#000" stroke-width="1.15"/>
<polygon points="939.0,578.0 1734.6,588.0 1718.3,610.4 939.0,600.8" fill="#999900" stroke="#000" stroke-width="1.15" stroke-linejoin="round" />
<polygon points="939.0,600.8 1718.3,610.4 1718.3,673.3 939.0,662.8" fill="#a9a900" stroke="#000" stroke-width="1.15" stroke-linejoin="round" />
<ellipse cx="1708.0" cy="595.5" rx="12.0" ry="3.4" fill="#8a8a00" stroke="#000" stroke-width="1.15"/>
<path d="M1666.8,452.0 L1666.8,594.0 A21.0,4.2 0 0 0 1708.8,594.0 L1708.8,452.0 A21.0,4.2 0 0 0 1666.8,452.0 Z" fill="url(#gG)"/>
<path d="M1666.8,594.0 A21.0,4.2 0 0 0 1708.8,594.0" fill="none" stroke="#000" stroke-width="1.15"/>
<path d="M1665.8,441.0 L1665.8,450.9 A26.8,5.4 0 0 0 1719.3,450.9 L1719.3,441.0 A26.8,5.4 0 0 0 1665.8,441.0 Z" fill="url(#gG)"/>
<path d="M1665.8,450.9 A26.8,5.4 0 0 0 1719.3,450.9" fill="none" stroke="#000" stroke-width="1.15"/>
<ellipse cx="1692.5" cy="441.0" rx="26.8" ry="5.4" fill="#338333" stroke="#000" stroke-width="1.15"/>
<path d="M1656.8,305.5 L1656.8,441.0 A28.6,5.7 0 0 0 1714.0,441.0 L1714.0,305.5 A28.6,5.7 0 0 0 1656.8,305.5 Z" fill="url(#gG)"/>
<path d="M1656.8,441.0 A28.6,5.7 0 0 0 1714.0,441.0" fill="none" stroke="#000" stroke-width="1.15"/>
<ellipse cx="1685.4" cy="305.5" rx="28.6" ry="5.7" fill="#338333" stroke="#000" stroke-width="1.15"/>
<path d="M1656.8,342.4 A28.6,5.7 0 0 0 1714.0,342.4" fill="none" stroke="#000" stroke-width="1.15"/>
<ellipse cx="1685.4" cy="305.5" rx="25.2" ry="5.0" fill="none" stroke="#000" stroke-width="1.035"/>
<path d="M1663.0,262.2 L1663.0,305.5 A21.0,4.2 0 0 0 1705.0,305.5 L1705.0,262.2 A21.0,4.2 0 0 0 1663.0,262.2 Z" fill="url(#gG)"/>
<path d="M1663.0,305.5 A21.0,4.2 0 0 0 1705.0,305.5" fill="none" stroke="#000" stroke-width="1.15"/>
<path d="M1660.2,244.5 L1660.2,262.2 A23.6,4.7 0 0 0 1707.4,262.2 L1707.4,244.5 A23.6,4.7 0 0 0 1660.2,244.5 Z" fill="url(#gG)"/>
<path d="M1660.2,262.2 A23.6,4.7 0 0 0 1707.4,262.2" fill="none" stroke="#000" stroke-width="1.15"/>
<ellipse cx="1683.8" cy="244.5" rx="23.6" ry="4.7" fill="#338333" stroke="#000" stroke-width="1.15"/>
<path d="M1665.8,473.4 L1665.8,678.0 A13.1,2.6 0 0 0 1692.0,678.0 L1692.0,473.4 A13.1,2.6 0 0 0 1665.8,473.4 Z" fill="url(#gG)"/>
<path d="M1665.8,678.0 A13.1,2.6 0 0 0 1692.0,678.0" fill="none" stroke="#000" stroke-width="1.15"/>
<ellipse cx="1678.9" cy="473.4" rx="13.1" ry="2.6" fill="#338333" stroke="#000" stroke-width="1.15"/>
<path d="M1618.6,279.4 L1618.6,318.0 A10.6,2.1 0 0 0 1639.8,318.0 L1639.8,279.4 A10.6,2.1 0 0 0 1618.6,279.4 Z" fill="url(#gG)"/>
<path d="M1618.6,318.0 A10.6,2.1 0 0 0 1639.8,318.0" fill="none" stroke="#000" stroke-width="1.15"/>
<path d="M1614.0,266.6 L1614.0,279.4 A14.5,2.9 0 0 0 1643.0,279.4 L1643.0,266.6 A14.5,2.9 0 0 0 1614.0,266.6 Z" fill="url(#gG)"/>
<path d="M1614.0,279.4 A14.5,2.9 0 0 0 1643.0,279.4" fill="none" stroke="#000" stroke-width="1.15"/>
<ellipse cx="1628.5" cy="266.6" rx="14.5" ry="2.9" fill="#338333" stroke="#000" stroke-width="1.15"/>
<path d="M1577.8,347.0 L1577.8,404.0 A27.1,5.4 0 0 0 1632.0,404.0 L1632.0,347.0 A27.1,5.4 0 0 0 1577.8,347.0 Z" fill="url(#gG)"/>
<path d="M1577.8,404.0 A27.1,5.4 0 0 0 1632.0,404.0" fill="none" stroke="#000" stroke-width="1.15"/>
<path d="M1575.0,341.4 L1575.0,347.0 A30.0,6.0 0 0 0 1635.0,347.0 L1635.0,341.4 A30.0,6.0 0 0 0 1575.0,341.4 Z" fill="url(#gG)"/>
<path d="M1575.0,347.0 A30.0,6.0 0 0 0 1635.0,347.0" fill="none" stroke="#000" stroke-width="1.15"/>
<ellipse cx="1605.0" cy="341.4" rx="30.0" ry="6.0" fill="#338333" stroke="#000" stroke-width="1.15"/>
<ellipse cx="1605.0" cy="341.4" rx="23.4" ry="4.7" fill="none" stroke="#000" stroke-width="1.035"/>
<ellipse cx="1605.0" cy="341.4" rx="20.4" ry="4.1" fill="none" stroke="#000" stroke-width="1.035"/>
<path d="M913.5,296.0 L913.5,476.0 A28.5,5.7 0 0 0 970.5,476.0 L970.5,296.0 A28.5,5.7 0 0 0 913.5,296.0 Z" fill="url(#gG)"/>
<path d="M913.5,476.0 A28.5,5.7 0 0 0 970.5,476.0" fill="none" stroke="#000" stroke-width="1.15"/>
<ellipse cx="942.0" cy="296.0" rx="28.5" ry="5.7" fill="#338333" stroke="#000" stroke-width="1.15"/>
<path d="M913.5,332.0 A28.5,5.7 0 0 0 970.5,332.0" fill="none" stroke="#000" stroke-width="1.15"/>
<ellipse cx="942.0" cy="296.0" rx="25.1" ry="5.0" fill="none" stroke="#000" stroke-width="1.035"/>
<path d="M921.0,253.6 L921.0,296.0 A20.5,4.1 0 0 0 962.0,296.0 L962.0,253.6 A20.5,4.1 0 0 0 921.0,253.6 Z" fill="url(#gG)"/>
<path d="M921.0,296.0 A20.5,4.1 0 0 0 962.0,296.0" fill="none" stroke="#000" stroke-width="1.15"/>
<path d="M918.0,234.8 L918.0,253.6 A23.2,4.6 0 0 0 964.4,253.6 L964.4,234.8 A23.2,4.6 0 0 0 918.0,234.8 Z" fill="url(#gG)"/>
<path d="M918.0,253.6 A23.2,4.6 0 0 0 964.4,253.6" fill="none" stroke="#000" stroke-width="1.15"/>
<ellipse cx="941.2" cy="234.8" rx="23.2" ry="4.6" fill="#338333" stroke="#000" stroke-width="1.15"/>
<path d="M971.6,343.5 L971.6,396.0 A10.5,1.6 0 0 0 992.6,396.0 L992.6,343.5 A10.5,1.6 0 0 0 971.6,343.5 Z" fill="url(#gG)"/>
<path d="M971.6,396.0 A10.5,1.6 0 0 0 992.6,396.0" fill="none" stroke="#000" stroke-width="1.15"/>
<ellipse cx="982.1" cy="343.5" rx="10.5" ry="1.6" fill="#338333" stroke="#000" stroke-width="1.15"/>
<path d="M975.0,308.0 L975.0,343.5 A6.2,1.2 0 0 0 987.5,343.5 L987.5,308.0 A6.2,1.2 0 0 0 975.0,308.0 Z" fill="url(#gG)"/>
<path d="M975.0,343.5 A6.2,1.2 0 0 0 987.5,343.5" fill="none" stroke="#000" stroke-width="1.15"/>
<path d="M970.3,272.0 L970.3,308.0 A10.7,2.1 0 0 0 991.7,308.0 L991.7,272.0 A10.7,2.1 0 0 0 970.3,272.0 Z" fill="url(#gG)"/>
<path d="M970.3,308.0 A10.7,2.1 0 0 0 991.7,308.0" fill="none" stroke="#000" stroke-width="1.15"/>
<path d="M966.0,258.4 L966.0,272.0 A14.5,2.9 0 0 0 995.0,272.0 L995.0,258.4 A14.5,2.9 0 0 0 966.0,258.4 Z" fill="url(#gG)"/>
<path d="M966.0,272.0 A14.5,2.9 0 0 0 995.0,272.0" fill="none" stroke="#000" stroke-width="1.15"/>
<ellipse cx="980.5" cy="258.4" rx="14.5" ry="2.9" fill="#338333" stroke="#000" stroke-width="1.15"/>
<path d="M995.5,340.0 L995.5,398.0 A27.6,5.5 0 0 0 1050.8,398.0 L1050.8,340.0 A27.6,5.5 0 0 0 995.5,340.0 Z" fill="url(#gG)"/>
<path d="M995.5,398.0 A27.6,5.5 0 0 0 1050.8,398.0" fill="none" stroke="#000" stroke-width="1.15"/>
<path d="M992.6,332.7 L992.6,339.5 A30.1,6.0 0 0 0 1052.7,339.5 L1052.7,332.7 A30.1,6.0 0 0 0 992.6,332.7 Z" fill="url(#gG)"/>
<path d="M992.6,339.5 A30.1,6.0 0 0 0 1052.7,339.5" fill="none" stroke="#000" stroke-width="1.15"/>
<ellipse cx="1022.7" cy="332.7" rx="30.1" ry="6.0" fill="#338333" stroke="#000" stroke-width="1.15"/>
<ellipse cx="1022.7" cy="332.7" rx="21.6" ry="4.3" fill="none" stroke="#000" stroke-width="1.035"/>
<ellipse cx="1022.7" cy="332.7" rx="18.6" ry="3.7" fill="none" stroke="#000" stroke-width="1.035"/>
<path d="M942.4,355.0 L942.4,402.0 A6.2,1.2 0 0 0 954.8,402.0 L954.8,355.0 A6.2,1.2 0 0 0 942.4,355.0 Z" fill="url(#gG)"/>
<path d="M942.4,402.0 A6.2,1.2 0 0 0 954.8,402.0" fill="none" stroke="#000" stroke-width="1.15"/>
<path d="M937.3,320.0 L937.3,355.0 A10.8,2.2 0 0 0 958.9,355.0 L958.9,320.0 A10.8,2.2 0 0 0 937.3,320.0 Z" fill="url(#gG)"/>
<path d="M937.3,355.0 A10.8,2.2 0 0 0 958.9,355.0" fill="none" stroke="#000" stroke-width="1.15"/>
<path d="M932.5,304.6 L932.5,319.5 A14.8,3.0 0 0 0 962.0,319.5 L962.0,304.6 A14.8,3.0 0 0 0 932.5,304.6 Z" fill="url(#gG)"/>
<path d="M932.5,319.5 A14.8,3.0 0 0 0 962.0,319.5" fill="none" stroke="#000" stroke-width="1.15"/>
<ellipse cx="947.2" cy="304.6" rx="14.8" ry="3.0" fill="#338333" stroke="#000" stroke-width="1.15"/>
<ellipse cx="949.0" cy="390.0" rx="10.5" ry="3.0" fill="none" stroke="#e626e6" stroke-width="1.1"/>
<path d="M1296.5,347.5 L1296.5,400.0 A10.2,2.1 0 0 0 1317.0,400.0 L1317.0,347.5 A10.2,2.1 0 0 0 1296.5,347.5 Z" fill="url(#gG)"/>
<path d="M1296.5,400.0 A10.2,2.1 0 0 0 1317.0,400.0" fill="none" stroke="#000" stroke-width="1.15"/>
<ellipse cx="1306.8" cy="347.5" rx="10.2" ry="2.1" fill="#338333" stroke="#000" stroke-width="1.15"/>
<path d="M1299.3,300.0 L1299.3,347.5 A6.7,1.3 0 0 0 1312.7,347.5 L1312.7,300.0 A6.7,1.3 0 0 0 1299.3,300.0 Z" fill="url(#gG)"/>
<path d="M1299.3,347.5 A6.7,1.3 0 0 0 1312.7,347.5" fill="none" stroke="#000" stroke-width="1.15"/>
<path d="M1280.0,304.0 L1280.0,371.7 A9.5,1.9 0 0 0 1299.0,371.7 L1299.0,304.0 A9.5,1.9 0 0 0 1280.0,304.0 Z" fill="url(#gY)"/>
<path d="M1280.0,371.7 A9.5,1.9 0 0 0 1299.0,371.7" fill="none" stroke="#000" stroke-width="1.15"/>
<path d="M1280.0,347.0 A9.5,1.9 0 0 0 1299.0,347.0" fill="none" stroke="#000" stroke-width="1.15"/>
<path d="M1286.0,372.0 L1286.0,382.0 A3.8,0.8 0 0 0 1293.6,382.0 L1293.6,372.0 A3.8,0.8 0 0 0 1286.0,372.0 Z" fill="url(#gG)"/>
<path d="M1286.0,382.0 A3.8,0.8 0 0 0 1293.6,382.0" fill="none" stroke="#000" stroke-width="1.15"/>
<path d="M1262.0,297.0 L1262.0,305.5 A25.5,5.0 0 0 0 1313.0,305.5 L1313.0,297.0 A25.5,5.0 0 0 0 1262.0,297.0 Z" fill="url(#gY)"/>
<path d="M1262.0,305.5 A25.5,5.0 0 0 0 1313.0,305.5" fill="none" stroke="#000" stroke-width="1.15"/>
<path d="M1220.0,275.3 L1220.0,289.6 A67.8,13.0 0 0 0 1355.6,289.6 L1355.6,275.3 A67.8,13.0 0 0 0 1220.0,275.3 Z" fill="url(#gG)"/>
<path d="M1220.0,289.6 A67.8,13.0 0 0 0 1355.6,289.6" fill="none" stroke="#000" stroke-width="1.15"/>
<ellipse cx="1287.8" cy="275.3" rx="67.8" ry="13.0" fill="#338333" stroke="#000" stroke-width="1.15"/>
<ellipse cx="1287.8" cy="274.3" rx="58.0" ry="11.6" fill="none" stroke="#000" stroke-width="1.15"/>
<path d="M1236.0,266.0 L1236.0,271.0 A51.5,12.7 0 0 0 1339.0,271.0 L1339.0,266.0 A51.5,12.7 0 0 0 1236.0,266.0 Z" fill="url(#gG)"/>
<path d="M1236.0,271.0 A51.5,12.7 0 0 0 1339.0,271.0" fill="none" stroke="#000" stroke-width="1.15"/>
<ellipse cx="1287.5" cy="266.0" rx="51.5" ry="12.7" fill="#338333" stroke="#000" stroke-width="1.15"/>
<ellipse cx="1287.5" cy="266.0" rx="47.0" ry="10.8" fill="none" stroke="#000" stroke-width="1.15"/>
<ellipse cx="1288.0" cy="265.2" rx="42.5" ry="9.4" fill="url(#gBore)" stroke="#000" stroke-width="1.15"/>
<ellipse cx="1230.5" cy="273.5" rx="4.5" ry="1.3" fill="#3a943a" stroke="#000" stroke-width="1.15"/>
<ellipse cx="1345.0" cy="274.5" rx="4.5" ry="1.3" fill="#3a943a" stroke="#000" stroke-width="1.15"/>
<ellipse cx="1279.0" cy="286.5" rx="4.5" ry="1.3" fill="#3a943a" stroke="#000" stroke-width="1.15"/>
<path d="M1006.0,548.0 L1006.0,578.0 A19.5,3.9 0 0 0 1045.0,578.0 L1045.0,548.0 A19.5,3.9 0 0 0 1006.0,548.0 Z" fill="url(#gG)"/>
<path d="M1006.0,578.0 A19.5,3.9 0 0 0 1045.0,578.0" fill="none" stroke="#000" stroke-width="1.15"/>
<path d="M1004.0,578.0 L1004.0,590.0 A21.5,4.3 0 0 0 1047.0,590.0 L1047.0,578.0 A21.5,4.3 0 0 0 1004.0,578.0 Z" fill="url(#gG)"/>
<path d="M1004.0,590.0 A21.5,4.3 0 0 0 1047.0,590.0" fill="none" stroke="#000" stroke-width="1.15"/>
<ellipse cx="1025.5" cy="578.0" rx="21.5" ry="4.3" fill="#338333" stroke="#000" stroke-width="1.15"/>
<path d="M1609.0,520.0 L1609.0,640.0 A4.2,0.9 0 0 0 1617.5,640.0 L1617.5,520.0 A4.2,0.9 0 0 0 1609.0,520.0 Z" fill="url(#gG)"/>
<path d="M1609.0,640.0 A4.2,0.9 0 0 0 1617.5,640.0" fill="none" stroke="#000" stroke-width="1.15"/>
<path d="M1040.0,579.3 L1040.0,669.0 A14.1,2.8 0 0 0 1068.3,669.0 L1068.3,579.3 A14.1,2.8 0 0 0 1040.0,579.3 Z" fill="url(#gG)"/>
<path d="M1040.0,669.0 A14.1,2.8 0 0 0 1068.3,669.0" fill="none" stroke="#000" stroke-width="1.15"/>
<ellipse cx="1054.2" cy="579.3" rx="14.1" ry="2.8" fill="#338333" stroke="#000" stroke-width="1.15"/>
<ellipse cx="1054.2" cy="579.3" rx="10.6" ry="2.1" fill="none" stroke="#000" stroke-width="1.035"/>
<path d="M1030.0,548.0 L1030.0,672.0 A2.8,0.8 0 0 0 1035.5,672.0 L1035.5,548.0 A2.8,0.8 0 0 0 1030.0,548.0 Z" fill="url(#gC)"/>
<path d="M1030.0,672.0 A2.8,0.8 0 0 0 1035.5,672.0" fill="none" stroke="#000" stroke-width="1.15"/>
<path d="M1035.5,548.0 L1035.5,672.0 A2.8,0.8 0 0 0 1041.0,672.0 L1041.0,548.0 A2.8,0.8 0 0 0 1035.5,548.0 Z" fill="url(#gC)"/>
<path d="M1035.5,672.0 A2.8,0.8 0 0 0 1041.0,672.0" fill="none" stroke="#000" stroke-width="1.15"/>
<path d="M1045.0,548.0 L1045.0,675.4 A3.8,0.8 0 0 0 1052.5,675.4 L1052.5,548.0 A3.8,0.8 0 0 0 1045.0,548.0 Z" fill="url(#gC)"/>
<path d="M1045.0,675.4 A3.8,0.8 0 0 0 1052.5,675.4" fill="none" stroke="#000" stroke-width="1.15"/>
<path d="M1286.8,566.8 L1286.8,675.4 A10.0,2.0 0 0 0 1306.7,675.4 L1306.7,566.8 A10.0,2.0 0 0 0 1286.8,566.8 Z" fill="url(#gC)"/>
<path d="M1286.8,675.4 A10.0,2.0 0 0 0 1306.7,675.4" fill="none" stroke="#000" stroke-width="1.15"/>
<ellipse cx="1296.8" cy="566.8" rx="10.0" ry="2.0" fill="#009292" stroke="#000" stroke-width="1.15"/>
<path d="M1108.4,548.0 L1108.4,676.0 A4.2,0.8 0 0 0 1116.8,676.0 L1116.8,548.0 A4.2,0.8 0 0 0 1108.4,548.0 Z" fill="url(#gG)"/>
<path d="M1108.4,676.0 A4.2,0.8 0 0 0 1116.8,676.0" fill="none" stroke="#000" stroke-width="1.15"/>
<path d="M1252.5,548.0 L1252.5,676.0 A1.9,0.8 0 0 0 1256.3,676.0 L1256.3,548.0 A1.9,0.8 0 0 0 1252.5,548.0 Z" fill="url(#gG)"/>
<path d="M1252.5,676.0 A1.9,0.8 0 0 0 1256.3,676.0" fill="none" stroke="#000" stroke-width="1.15"/>
<path d="M1084.0,548.0 L1084.0,676.5 A3.6,0.8 0 0 0 1091.3,676.5 L1091.3,548.0 A3.6,0.8 0 0 0 1084.0,548.0 Z" fill="url(#gG)"/>
<path d="M1084.0,676.5 A3.6,0.8 0 0 0 1091.3,676.5" fill="none" stroke="#000" stroke-width="1.15"/>
<path d="M1216.0,613.5 L1216.0,676.5 A14.0,2.8 0 0 0 1244.0,676.5 L1244.0,613.5 A14.0,2.8 0 0 0 1216.0,613.5 Z" fill="url(#gG)"/>
<path d="M1216.0,676.5 A14.0,2.8 0 0 0 1244.0,676.5" fill="none" stroke="#000" stroke-width="1.15"/>
<ellipse cx="1230.0" cy="613.5" rx="14.0" ry="2.8" fill="#338333" stroke="#000" stroke-width="1.15"/>
<ellipse cx="1230.0" cy="613.5" rx="11.2" ry="2.2" fill="none" stroke="#000" stroke-width="1.035"/>
<path d="M1223.8,598.0 L1223.8,613.0 A7.9,1.6 0 0 0 1239.6,613.0 L1239.6,598.0 A7.9,1.6 0 0 0 1223.8,598.0 Z" fill="url(#gG)"/>
<path d="M1223.8,613.0 A7.9,1.6 0 0 0 1239.6,613.0" fill="none" stroke="#000" stroke-width="1.15"/>
<ellipse cx="1231.7" cy="598.0" rx="7.9" ry="1.6" fill="#338333" stroke="#000" stroke-width="1.15"/>
<ellipse cx="1231.7" cy="598.0" rx="5.5" ry="1.1" fill="none" stroke="#000" stroke-width="1.035"/>
<path d="M1145.0,548.0 L1145.0,678.6 A5.0,1.0 0 0 0 1155.0,678.6 L1155.0,548.0 A5.0,1.0 0 0 0 1145.0,548.0 Z" fill="url(#gG)"/>
<path d="M1145.0,678.6 A5.0,1.0 0 0 0 1155.0,678.6" fill="none" stroke="#000" stroke-width="1.15"/>
<path d="M1168.2,548.0 L1168.2,678.6 A5.2,1.1 0 0 0 1178.7,678.6 L1178.7,548.0 A5.2,1.1 0 0 0 1168.2,548.0 Z" fill="url(#gG)"/>
<path d="M1168.2,678.6 A5.2,1.1 0 0 0 1178.7,678.6" fill="none" stroke="#000" stroke-width="1.15"/>
<path d="M1253.2,548.0 L1253.2,679.6 A2.6,0.8 0 0 0 1258.4,679.6 L1258.4,548.0 A2.6,0.8 0 0 0 1253.2,548.0 Z" fill="url(#gG)"/>
<path d="M1253.2,679.6 A2.6,0.8 0 0 0 1258.4,679.6" fill="none" stroke="#000" stroke-width="1.15"/>
<path d="M1019.5,548.0 L1019.5,680.0 A2.8,0.8 0 0 0 1025.0,680.0 L1025.0,548.0 A2.8,0.8 0 0 0 1019.5,548.0 Z" fill="url(#gC)"/>
<path d="M1019.5,680.0 A2.8,0.8 0 0 0 1025.0,680.0" fill="none" stroke="#000" stroke-width="1.15"/>
<path d="M1201.2,548.0 L1201.2,680.0 A4.2,0.8 0 0 0 1209.6,680.0 L1209.6,548.0 A4.2,0.8 0 0 0 1201.2,548.0 Z" fill="url(#gG)"/>
<path d="M1201.2,680.0 A4.2,0.8 0 0 0 1209.6,680.0" fill="none" stroke="#000" stroke-width="1.15"/>
<path d="M1340.6,548.0 L1340.6,680.0 A4.5,0.9 0 0 0 1349.5,680.0 L1349.5,548.0 A4.5,0.9 0 0 0 1340.6,548.0 Z" fill="url(#gG)"/>
<path d="M1340.6,680.0 A4.5,0.9 0 0 0 1349.5,680.0" fill="none" stroke="#000" stroke-width="1.15"/>
<path d="M1475.0,548.0 L1475.0,680.0 A4.0,0.8 0 0 0 1483.0,680.0 L1483.0,548.0 A4.0,0.8 0 0 0 1475.0,548.0 Z" fill="url(#gG)"/>
<path d="M1475.0,680.0 A4.0,0.8 0 0 0 1483.0,680.0" fill="none" stroke="#000" stroke-width="1.15"/>
<path d="M1522.6,548.0 L1522.6,680.1 A3.5,0.8 0 0 0 1529.5,680.1 L1529.5,548.0 A3.5,0.8 0 0 0 1522.6,548.0 Z" fill="url(#gG)"/>
<path d="M1522.6,680.1 A3.5,0.8 0 0 0 1529.5,680.1" fill="none" stroke="#000" stroke-width="1.15"/>
<path d="M1209.0,548.0 L1209.0,680.2 A2.7,0.8 0 0 0 1214.4,680.2 L1214.4,548.0 A2.7,0.8 0 0 0 1209.0,548.0 Z" fill="url(#gC)"/>
<path d="M1209.0,680.2 A2.7,0.8 0 0 0 1214.4,680.2" fill="none" stroke="#000" stroke-width="1.15"/>
<path d="M1349.2,548.0 L1349.2,680.2 A3.4,0.8 0 0 0 1356.0,680.2 L1356.0,548.0 A3.4,0.8 0 0 0 1349.2,548.0 Z" fill="url(#gC)"/>
<path d="M1349.2,680.2 A3.4,0.8 0 0 0 1356.0,680.2" fill="none" stroke="#000" stroke-width="1.15"/>
<path d="M1355.0,613.0 L1355.0,680.3 A15.0,3.0 0 0 0 1385.0,680.3 L1385.0,613.0 A15.0,3.0 0 0 0 1355.0,613.0 Z" fill="url(#gG)"/>
<path d="M1355.0,680.3 A15.0,3.0 0 0 0 1385.0,680.3" fill="none" stroke="#000" stroke-width="1.15"/>
<ellipse cx="1370.0" cy="613.0" rx="15.0" ry="3.0" fill="#338333" stroke="#000" stroke-width="1.15"/>
<ellipse cx="1370.0" cy="613.0" rx="12.0" ry="2.4" fill="none" stroke="#000" stroke-width="1.035"/>
<path d="M1367.2,598.5 L1367.2,612.5 A6.9,1.4 0 0 0 1381.0,612.5 L1381.0,598.5 A6.9,1.4 0 0 0 1367.2,598.5 Z" fill="url(#gG)"/>
<path d="M1367.2,612.5 A6.9,1.4 0 0 0 1381.0,612.5" fill="none" stroke="#000" stroke-width="1.15"/>
<ellipse cx="1374.1" cy="598.5" rx="6.9" ry="1.4" fill="#338333" stroke="#000" stroke-width="1.15"/>
<ellipse cx="1374.1" cy="598.5" rx="4.8" ry="1.0" fill="none" stroke="#000" stroke-width="1.035"/>
<path d="M1213.3,548.0 L1213.3,680.4 A3.7,0.8 0 0 0 1220.7,680.4 L1220.7,548.0 A3.7,0.8 0 0 0 1213.3,548.0 Z" fill="url(#gG)"/>
<path d="M1213.3,680.4 A3.7,0.8 0 0 0 1220.7,680.4" fill="none" stroke="#000" stroke-width="1.15"/>
<path d="M1355.7,548.0 L1355.7,680.4 A2.4,0.8 0 0 0 1360.4,680.4 L1360.4,548.0 A2.4,0.8 0 0 0 1355.7,548.0 Z" fill="url(#gG)"/>
<path d="M1355.7,680.4 A2.4,0.8 0 0 0 1360.4,680.4" fill="none" stroke="#000" stroke-width="1.15"/>
<path d="M1375.8,548.0 L1375.8,680.5 A5.1,1.0 0 0 0 1386.0,680.5 L1386.0,548.0 A5.1,1.0 0 0 0 1375.8,548.0 Z" fill="url(#gG)"/>
<path d="M1375.8,680.5 A5.1,1.0 0 0 0 1386.0,680.5" fill="none" stroke="#000" stroke-width="1.15"/>
<path d="M1317.2,548.0 L1317.2,680.7 A4.9,1.0 0 0 0 1327.0,680.7 L1327.0,548.0 A4.9,1.0 0 0 0 1317.2,548.0 Z" fill="url(#gG)"/>
<path d="M1317.2,680.7 A4.9,1.0 0 0 0 1327.0,680.7" fill="none" stroke="#000" stroke-width="1.15"/>
<path d="M1418.7,548.0 L1418.7,681.4 A4.8,1.0 0 0 0 1428.2,681.4 L1428.2,548.0 A4.8,1.0 0 0 0 1418.7,548.0 Z" fill="url(#gG)"/>
<path d="M1418.7,681.4 A4.8,1.0 0 0 0 1428.2,681.4" fill="none" stroke="#000" stroke-width="1.15"/>
<path d="M1458.8,548.0 L1458.8,682.0 A1.9,0.8 0 0 0 1462.5,682.0 L1462.5,548.0 A1.9,0.8 0 0 0 1458.8,548.0 Z" fill="url(#gG)"/>
<path d="M1458.8,682.0 A1.9,0.8 0 0 0 1462.5,682.0" fill="none" stroke="#000" stroke-width="1.15"/>
<path d="M1560.9,548.0 L1560.9,682.8 A4.2,0.8 0 0 0 1569.3,682.8 L1569.3,548.0 A4.2,0.8 0 0 0 1560.9,548.0 Z" fill="url(#gG)"/>
<path d="M1560.9,682.8 A4.2,0.8 0 0 0 1569.3,682.8" fill="none" stroke="#000" stroke-width="1.15"/>
<path d="M1107.3,624.5 L1107.3,682.8 A20.2,4.0 0 0 0 1147.8,682.8 L1147.8,624.5 A20.2,4.0 0 0 0 1107.3,624.5 Z" fill="url(#gG)"/>
<path d="M1107.3,682.8 A20.2,4.0 0 0 0 1147.8,682.8" fill="none" stroke="#000" stroke-width="1.15"/>
<ellipse cx="1127.5" cy="624.5" rx="20.2" ry="4.0" fill="#338333" stroke="#000" stroke-width="1.15"/>
<ellipse cx="1127.5" cy="624.5" rx="16.2" ry="3.2" fill="none" stroke="#000" stroke-width="1.035"/>
<path d="M1118.9,609.0 L1118.9,624.0 A7.8,1.6 0 0 0 1134.6,624.0 L1134.6,609.0 A7.8,1.6 0 0 0 1118.9,609.0 Z" fill="url(#gG)"/>
<path d="M1118.9,624.0 A7.8,1.6 0 0 0 1134.6,624.0" fill="none" stroke="#000" stroke-width="1.15"/>
<ellipse cx="1126.8" cy="609.0" rx="7.8" ry="1.6" fill="#338333" stroke="#000" stroke-width="1.15"/>
<ellipse cx="1126.8" cy="609.0" rx="5.5" ry="1.1" fill="none" stroke="#000" stroke-width="1.035"/>
<path d="M1091.3,548.0 L1091.3,684.9 A3.9,0.8 0 0 0 1099.0,684.9 L1099.0,548.0 A3.9,0.8 0 0 0 1091.3,548.0 Z" fill="url(#gC)"/>
<path d="M1091.3,684.9 A3.9,0.8 0 0 0 1099.0,684.9" fill="none" stroke="#000" stroke-width="1.15"/>
<path d="M1154.0,548.0 L1154.0,686.0 A4.5,0.9 0 0 0 1163.0,686.0 L1163.0,548.0 A4.5,0.9 0 0 0 1154.0,548.0 Z" fill="url(#gC)"/>
<path d="M1154.0,686.0 A4.5,0.9 0 0 0 1163.0,686.0" fill="none" stroke="#000" stroke-width="1.15"/>
<path d="M1248.0,548.0 L1248.0,686.0 A3.6,0.8 0 0 0 1255.3,686.0 L1255.3,548.0 A3.6,0.8 0 0 0 1248.0,548.0 Z" fill="url(#gC)"/>
<path d="M1248.0,686.0 A3.6,0.8 0 0 0 1255.3,686.0" fill="none" stroke="#000" stroke-width="1.15"/>
<path d="M1415.3,548.0 L1415.3,687.4 A3.0,0.8 0 0 0 1421.3,687.4 L1421.3,548.0 A3.0,0.8 0 0 0 1415.3,548.0 Z" fill="url(#gC)"/>
<path d="M1415.3,687.4 A3.0,0.8 0 0 0 1421.3,687.4" fill="none" stroke="#000" stroke-width="1.15"/>
<path d="M1468.5,629.0 L1468.5,689.0 A21.0,4.2 0 0 0 1510.6,689.0 L1510.6,629.0 A21.0,4.2 0 0 0 1468.5,629.0 Z" fill="url(#gG)"/>
<path d="M1468.5,689.0 A21.0,4.2 0 0 0 1510.6,689.0" fill="none" stroke="#000" stroke-width="1.15"/>
<ellipse cx="1489.5" cy="629.0" rx="21.0" ry="4.2" fill="#338333" stroke="#000" stroke-width="1.15"/>
<ellipse cx="1489.5" cy="629.0" rx="16.8" ry="3.4" fill="none" stroke="#000" stroke-width="1.035"/>
<path d="M1481.4,614.5 L1481.4,628.5 A4.3,0.9 0 0 0 1490.0,628.5 L1490.0,614.5 A4.3,0.9 0 0 0 1481.4,614.5 Z" fill="url(#gG)"/>
<path d="M1481.4,628.5 A4.3,0.9 0 0 0 1490.0,628.5" fill="none" stroke="#000" stroke-width="1.15"/>
<ellipse cx="1485.7" cy="614.5" rx="4.3" ry="0.9" fill="#338333" stroke="#000" stroke-width="1.15"/>
<ellipse cx="1485.7" cy="614.5" rx="3.0" ry="0.6" fill="none" stroke="#000" stroke-width="1.035"/>
<path d="M1451.4,548.0 L1451.4,690.0 A4.3,0.9 0 0 0 1460.0,690.0 L1460.0,548.0 A4.3,0.9 0 0 0 1451.4,548.0 Z" fill="url(#gC)"/>
<path d="M1451.4,690.0 A4.3,0.9 0 0 0 1460.0,690.0" fill="none" stroke="#000" stroke-width="1.15"/>
<path d="M1517.5,548.0 L1517.5,690.0 A2.5,0.8 0 0 0 1522.6,690.0 L1522.6,548.0 A2.5,0.8 0 0 0 1517.5,548.0 Z" fill="url(#gC)"/>
<path d="M1517.5,690.0 A2.5,0.8 0 0 0 1522.6,690.0" fill="none" stroke="#000" stroke-width="1.15"/>
<path d="M1581.8,630.7 L1581.8,690.0 A19.5,3.9 0 0 0 1620.7,690.0 L1620.7,630.7 A19.5,3.9 0 0 0 1581.8,630.7 Z" fill="url(#gG)"/>
<path d="M1581.8,690.0 A19.5,3.9 0 0 0 1620.7,690.0" fill="none" stroke="#000" stroke-width="1.15"/>
<ellipse cx="1601.2" cy="630.7" rx="19.5" ry="3.9" fill="#338333" stroke="#000" stroke-width="1.15"/>
<ellipse cx="1601.2" cy="630.7" rx="15.6" ry="3.1" fill="none" stroke="#000" stroke-width="1.035"/>
<path d="M1074.0,548.0 L1074.0,692.0 A5.0,1.0 0 0 0 1084.0,692.0 L1084.0,548.0 A5.0,1.0 0 0 0 1074.0,548.0 Z" fill="url(#gG)"/>
<path d="M1074.0,692.0 A5.0,1.0 0 0 0 1084.0,692.0" fill="none" stroke="#000" stroke-width="1.15"/>
<path d="M1098.7,548.0 L1098.7,692.0 A5.1,1.0 0 0 0 1109.0,692.0 L1109.0,548.0 A5.1,1.0 0 0 0 1098.7,548.0 Z" fill="url(#gG)"/>
<path d="M1098.7,692.0 A5.1,1.0 0 0 0 1109.0,692.0" fill="none" stroke="#000" stroke-width="1.15"/>
<path d="M1134.6,548.0 L1134.6,692.0 A5.2,1.0 0 0 0 1145.0,692.0 L1145.0,548.0 A5.2,1.0 0 0 0 1134.6,548.0 Z" fill="url(#gG)"/>
<path d="M1134.6,692.0 A5.2,1.0 0 0 0 1145.0,692.0" fill="none" stroke="#000" stroke-width="1.15"/>
<path d="M1185.0,548.0 L1185.0,693.0 A3.1,0.8 0 0 0 1191.3,693.0 L1191.3,548.0 A3.1,0.8 0 0 0 1185.0,548.0 Z" fill="url(#gG)"/>
<path d="M1185.0,693.0 A3.1,0.8 0 0 0 1191.3,693.0" fill="none" stroke="#000" stroke-width="1.15"/>
<path d="M1239.0,548.0 L1239.0,694.3 A5.5,1.1 0 0 0 1250.0,694.3 L1250.0,548.0 A5.5,1.1 0 0 0 1239.0,548.0 Z" fill="url(#gG)"/>
<path d="M1239.0,694.3 A5.5,1.1 0 0 0 1250.0,694.3" fill="none" stroke="#000" stroke-width="1.15"/>
<path d="M1306.7,548.0 L1306.7,694.3 A5.2,1.1 0 0 0 1317.2,694.3 L1317.2,548.0 A5.2,1.1 0 0 0 1306.7,548.0 Z" fill="url(#gG)"/>
<path d="M1306.7,694.3 A5.2,1.1 0 0 0 1317.2,694.3" fill="none" stroke="#000" stroke-width="1.15"/>
<path d="M1257.4,548.0 L1257.4,694.4 A5.0,1.0 0 0 0 1267.5,694.4 L1267.5,548.0 A5.0,1.0 0 0 0 1257.4,548.0 Z" fill="url(#gG)"/>
<path d="M1257.4,694.4 A5.0,1.0 0 0 0 1267.5,694.4" fill="none" stroke="#000" stroke-width="1.15"/>
<path d="M1389.6,548.0 L1389.6,696.0 A5.2,1.0 0 0 0 1399.9,696.0 L1399.9,548.0 A5.2,1.0 0 0 0 1389.6,548.0 Z" fill="url(#gG)"/>
<path d="M1389.6,696.0 A5.2,1.0 0 0 0 1399.9,696.0" fill="none" stroke="#000" stroke-width="1.15"/>
<path d="M1406.7,548.0 L1406.7,696.0 A5.6,1.1 0 0 0 1417.9,696.0 L1417.9,548.0 A5.6,1.1 0 0 0 1406.7,548.0 Z" fill="url(#gG)"/>
<path d="M1406.7,696.0 A5.6,1.1 0 0 0 1417.9,696.0" fill="none" stroke="#000" stroke-width="1.15"/>
<path d="M1441.9,548.0 L1441.9,696.0 A5.6,1.1 0 0 0 1453.1,696.0 L1453.1,548.0 A5.6,1.1 0 0 0 1441.9,548.0 Z" fill="url(#gG)"/>
<path d="M1441.9,696.0 A5.6,1.1 0 0 0 1453.1,696.0" fill="none" stroke="#000" stroke-width="1.15"/>
<path d="M1551.4,548.0 L1551.4,696.4 A4.2,0.8 0 0 0 1559.8,696.4 L1559.8,548.0 A4.2,0.8 0 0 0 1551.4,548.0 Z" fill="url(#gG)"/>
<path d="M1551.4,696.4 A4.2,0.8 0 0 0 1559.8,696.4" fill="none" stroke="#000" stroke-width="1.15"/>
<path d="M1193.4,638.7 L1193.4,696.4 A20.6,4.1 0 0 0 1234.7,696.4 L1234.7,638.7 A20.6,4.1 0 0 0 1193.4,638.7 Z" fill="url(#gG)"/>
<path d="M1193.4,696.4 A20.6,4.1 0 0 0 1234.7,696.4" fill="none" stroke="#000" stroke-width="1.15"/>
<ellipse cx="1214.1" cy="638.7" rx="20.6" ry="4.1" fill="#338333" stroke="#000" stroke-width="1.15"/>
<ellipse cx="1214.1" cy="638.7" rx="16.5" ry="3.3" fill="none" stroke="#000" stroke-width="1.035"/>
<path d="M1205.6,623.5 L1205.6,638.2 A7.6,1.5 0 0 0 1220.7,638.2 L1220.7,623.5 A7.6,1.5 0 0 0 1205.6,623.5 Z" fill="url(#gG)"/>
<path d="M1205.6,638.2 A7.6,1.5 0 0 0 1220.7,638.2" fill="none" stroke="#000" stroke-width="1.15"/>
<ellipse cx="1213.2" cy="623.5" rx="7.6" ry="1.5" fill="#338333" stroke="#000" stroke-width="1.15"/>
<ellipse cx="1213.2" cy="623.5" rx="5.3" ry="1.1" fill="none" stroke="#000" stroke-width="1.035"/>
<path d="M1017.3,607.7 L1017.3,696.4 A15.9,3.2 0 0 0 1049.0,696.4 L1049.0,607.7 A15.9,3.2 0 0 0 1017.3,607.7 Z" fill="url(#gG)"/>
<path d="M1017.3,696.4 A15.9,3.2 0 0 0 1049.0,696.4" fill="none" stroke="#000" stroke-width="1.15"/>
<ellipse cx="1033.2" cy="607.7" rx="15.9" ry="3.2" fill="#338333" stroke="#000" stroke-width="1.15"/>
<ellipse cx="1033.2" cy="607.7" rx="11.9" ry="2.4" fill="none" stroke="#000" stroke-width="1.035"/>
<path d="M1272.0,600.0 L1272.0,696.4 A13.5,2.7 0 0 0 1299.0,696.4 L1299.0,600.0 A13.5,2.7 0 0 0 1272.0,600.0 Z" fill="url(#gC)"/>
<path d="M1272.0,696.4 A13.5,2.7 0 0 0 1299.0,696.4" fill="none" stroke="#000" stroke-width="1.15"/>
<ellipse cx="1285.5" cy="600.0" rx="13.5" ry="2.7" fill="#009292" stroke="#000" stroke-width="1.15"/>
<path d="M1488.0,548.0 L1488.0,696.8 A5.3,1.1 0 0 0 1498.6,696.8 L1498.6,548.0 A5.3,1.1 0 0 0 1488.0,548.0 Z" fill="url(#gG)"/>
<path d="M1488.0,696.8 A5.3,1.1 0 0 0 1498.6,696.8" fill="none" stroke="#000" stroke-width="1.15"/>
<path d="M1508.9,548.0 L1508.9,696.9 A5.5,1.1 0 0 0 1520.0,696.9 L1520.0,548.0 A5.5,1.1 0 0 0 1508.9,548.0 Z" fill="url(#gG)"/>
<path d="M1508.9,696.9 A5.5,1.1 0 0 0 1520.0,696.9" fill="none" stroke="#000" stroke-width="1.15"/>
<path d="M1179.7,548.0 L1179.7,697.5 A3.4,0.8 0 0 0 1186.5,697.5 L1186.5,548.0 A3.4,0.8 0 0 0 1179.7,548.0 Z" fill="url(#gY)"/>
<path d="M1179.7,697.5 A3.4,0.8 0 0 0 1186.5,697.5" fill="none" stroke="#000" stroke-width="1.15"/>
<path d="M1383.9,548.0 L1383.9,699.4 A3.4,0.8 0 0 0 1390.8,699.4 L1390.8,548.0 A3.4,0.8 0 0 0 1383.9,548.0 Z" fill="url(#gY)"/>
<path d="M1383.9,699.4 A3.4,0.8 0 0 0 1390.8,699.4" fill="none" stroke="#000" stroke-width="1.15"/>
<path d="M1336.7,639.7 L1336.7,699.4 A21.2,4.2 0 0 0 1379.2,699.4 L1379.2,639.7 A21.2,4.2 0 0 0 1336.7,639.7 Z" fill="url(#gG)"/>
<path d="M1336.7,699.4 A21.2,4.2 0 0 0 1379.2,699.4" fill="none" stroke="#000" stroke-width="1.15"/>
<ellipse cx="1358.0" cy="639.7" rx="21.2" ry="4.2" fill="#338333" stroke="#000" stroke-width="1.15"/>
<ellipse cx="1358.0" cy="639.7" rx="17.0" ry="3.4" fill="none" stroke="#000" stroke-width="1.035"/>
<path d="M1349.2,625.3 L1349.2,639.2 A7.9,1.6 0 0 0 1365.0,639.2 L1365.0,625.3 A7.9,1.6 0 0 0 1349.2,625.3 Z" fill="url(#gG)"/>
<path d="M1349.2,639.2 A7.9,1.6 0 0 0 1365.0,639.2" fill="none" stroke="#000" stroke-width="1.15"/>
<ellipse cx="1357.1" cy="625.3" rx="7.9" ry="1.6" fill="#338333" stroke="#000" stroke-width="1.15"/>
<ellipse cx="1357.1" cy="625.3" rx="5.5" ry="1.1" fill="none" stroke="#000" stroke-width="1.035"/>
<path d="M1520.0,614.0 L1520.0,702.7 A16.2,3.2 0 0 0 1552.5,702.7 L1552.5,614.0 A16.2,3.2 0 0 0 1520.0,614.0 Z" fill="url(#gG)"/>
<path d="M1520.0,702.7 A16.2,3.2 0 0 0 1552.5,702.7" fill="none" stroke="#000" stroke-width="1.15"/>
<ellipse cx="1536.2" cy="614.0" rx="16.2" ry="3.2" fill="#338333" stroke="#000" stroke-width="1.15"/>
<ellipse cx="1536.2" cy="614.0" rx="12.2" ry="2.4" fill="none" stroke="#000" stroke-width="1.035"/>
<path d="M1651.0,500.0 L1651.0,702.7 A13.1,2.6 0 0 0 1677.3,702.7 L1677.3,500.0 A13.1,2.6 0 0 0 1651.0,500.0 Z" fill="url(#gG)"/>
<path d="M1651.0,702.7 A13.1,2.6 0 0 0 1677.3,702.7" fill="none" stroke="#000" stroke-width="1.15"/>
<ellipse cx="1664.2" cy="500.0" rx="13.1" ry="2.6" fill="#338333" stroke="#000" stroke-width="1.15"/>
<path d="M1012,697 A21,4.2 0 0 0 1054,697" fill="none" stroke="#000" stroke-width="0.8"/>
<path d="M1516,703 A21,4.2 0 0 0 1558,703" fill="none" stroke="#000" stroke-width="0.8"/>
<path d="M938.0,500.0 L938.0,607.0 A10.5,2.1 0 0 0 959.0,607.0 L959.0,500.0 A10.5,2.1 0 0 0 938.0,500.0 Z" fill="url(#gG)"/>
<path d="M938.0,607.0 A10.5,2.1 0 0 0 959.0,607.0" fill="none" stroke="#000" stroke-width="1.15"/>
<path d="M938.0,593.0 A10.5,2.1 0 0 0 959.0,593.0" fill="none" stroke="#000" stroke-width="1.15"/>
<path d="M938.5,397.0 L938.5,520.0 A5.5,0.3 0 0 0 949.5,520.0 L949.5,397.0 A5.5,0.3 0 0 0 938.5,397.0 Z" fill="url(#gG)"/>
<path d="M938.5,520.0 A5.5,0.3 0 0 0 949.5,520.0" fill="none" stroke="#000" stroke-width="1.15"/>
<path d="M919.0,494.5 L919.0,669.0 A9.5,1.9 0 0 0 938.0,669.0 L938.0,494.5 A9.5,1.9 0 0 0 919.0,494.5 Z" fill="url(#gG)"/>
<path d="M919.0,669.0 A9.5,1.9 0 0 0 938.0,669.0" fill="none" stroke="#000" stroke-width="1.15"/>
<polygon points="926.0,476.0 939.0,476.0 939.0,494.5 926.0,494.5" fill="#00a4a4" stroke="#000" stroke-width="1.15" stroke-linejoin="round" />
<polyline points="925.5,438.0 939.0,438.3" fill="none" stroke="#000" stroke-width="1.15"/>
<polyline points="926.0,452.0 930.0,446.5 939.0,446.5" fill="none" stroke="#000" stroke-width="1.15"/>
<polyline points="926.0,461.0 933.0,455.5 939.0,455.5" fill="none" stroke="#000" stroke-width="1.15"/>
<polyline points="928.0,466.0 939.0,466.0" fill="none" stroke="#000" stroke-width="1.15"/>
<polygon points="985.0,395.4 1612.0,402.6 1589.0,437.6 975.0,429.0" fill="#338333" stroke="#000" stroke-width="1.15" stroke-linejoin="round" />
<polygon points="975.0,429.0 1589.0,437.6 1589.0,559.6 975.0,552.8" fill="#3a943a" stroke="#000" stroke-width="1.15" stroke-linejoin="round" />
<polygon points="1586.0,437.5 1589.0,437.6 1589.0,559.6 1586.0,559.5" fill="#2c702c" stroke="#000" stroke-width="0.6" stroke-linejoin="round" />
<polyline points="975.0,499.8 1084.0,500.4" fill="none" stroke="#000" stroke-width="1.15"/>
<polyline points="1190.6,504.4 1195.0,504.4 1195.0,489.7 1228.8,490.2 1230.0,502.3 1330.8,503.3 1330.8,491.4 1350.3,491.6" fill="none" stroke="#000" stroke-width="1.15"/>
<polyline points="1457.3,492.8 1472.0,493.0" fill="none" stroke="#000" stroke-width="1.15"/>
<polyline points="1489.0,505.3 1589.0,506.0" fill="none" stroke="#000" stroke-width="1.15"/>
<polygon points="1035.7,413.3 1038.0,411.2 1056.2,411.5 1054.0,415.6 1037.0,415.4" fill="#1270bd" stroke="#000" stroke-width="0.7" stroke-linejoin="round" />
<ellipse cx="1022.0" cy="400.0" rx="4.0" ry="1.4" fill="#2f7a2f" stroke="#000" stroke-width="0.8"/>
<ellipse cx="1058.3" cy="408.5" rx="4.0" ry="1.4" fill="#2f7a2f" stroke="#000" stroke-width="0.8"/>
<ellipse cx="1050.4" cy="418.3" rx="4.0" ry="1.4" fill="#2f7a2f" stroke="#000" stroke-width="0.8"/>
<ellipse cx="1145.4" cy="401.5" rx="4.0" ry="1.4" fill="#2f7a2f" stroke="#000" stroke-width="0.8"/>
<ellipse cx="1127.4" cy="427.4" rx="4.0" ry="1.4" fill="#2f7a2f" stroke="#000" stroke-width="0.8"/>
<ellipse cx="1005.9" cy="425.7" rx="4.0" ry="1.4" fill="#2f7a2f" stroke="#000" stroke-width="0.8"/>
<ellipse cx="1297.5" cy="403.5" rx="4.0" ry="1.4" fill="#2f7a2f" stroke="#000" stroke-width="0.8"/>
<ellipse cx="1453.5" cy="405.2" rx="4.0" ry="1.4" fill="#2f7a2f" stroke="#000" stroke-width="0.8"/>
<ellipse cx="1435.0" cy="431.0" rx="4.0" ry="1.4" fill="#2f7a2f" stroke="#000" stroke-width="0.8"/>
<ellipse cx="1284.0" cy="428.8" rx="4.0" ry="1.4" fill="#2f7a2f" stroke="#000" stroke-width="0.8"/>
<ellipse cx="1522.8" cy="424.5" rx="4.0" ry="1.4" fill="#2f7a2f" stroke="#000" stroke-width="0.8"/>
<rect x="1084.0" y="486.0" width="106.6" height="38.3" rx="3" fill="#3a943a" stroke="#000" stroke-width="0.9"/>
<path d="M1085.0,487.5 L1189.6,487.5 L1181.1,492.8 L1088.5,492.8 Z" fill="#338333" stroke="#000" stroke-width="0.7"/>
<path d="M1189.6,487.5 L1181.1,492.8 L1181.1,513.8 L1190.1,513.8 Z" fill="#2a6a2a" stroke="#000" stroke-width="0.7"/>
<rect x="1084.5" y="513.8" width="96.6" height="10.0" fill="#00a4a4" stroke="#000" stroke-width="0.7"/>
<path d="M1181.1,513.8 L1190.1,513.8 L1190.1,522.3 L1181.1,523.8 Z" fill="#008890" stroke="#000" stroke-width="0.7"/>
<polyline points="1088.5,492.8 1088.5,523.8" fill="none" stroke="#000" stroke-width="0.7"/>
<ellipse cx="1095.7" cy="490.0" rx="3.6" ry="1.2" fill="#2a6e2a" stroke="#000" stroke-width="0.7"/>
<ellipse cx="1111.7" cy="490.0" rx="3.6" ry="1.2" fill="#2a6e2a" stroke="#000" stroke-width="0.7"/>
<ellipse cx="1137.2" cy="490.0" rx="3.6" ry="1.2" fill="#2a6e2a" stroke="#000" stroke-width="0.7"/>
<ellipse cx="1163.9" cy="490.0" rx="3.6" ry="1.2" fill="#2a6e2a" stroke="#000" stroke-width="0.7"/>
<ellipse cx="1180.9" cy="490.0" rx="3.6" ry="1.2" fill="#2a6e2a" stroke="#000" stroke-width="0.7"/>
<rect x="1350.3" y="489.0" width="107.0" height="39.5" rx="3" fill="#3a943a" stroke="#000" stroke-width="0.9"/>
<path d="M1351.3,490.5 L1456.3,490.5 L1447.8,496.4 L1354.8,496.4 Z" fill="#338333" stroke="#000" stroke-width="0.7"/>
<path d="M1456.3,490.5 L1447.8,496.4 L1447.8,516.5 L1456.8,516.5 Z" fill="#2a6a2a" stroke="#000" stroke-width="0.7"/>
<rect x="1350.8" y="516.5" width="97.0" height="11.5" fill="#00a4a4" stroke="#000" stroke-width="0.7"/>
<path d="M1447.8,516.5 L1456.8,516.5 L1456.8,526.5 L1447.8,528.0 Z" fill="#008890" stroke="#000" stroke-width="0.7"/>
<polyline points="1354.8,496.4 1354.8,528.0" fill="none" stroke="#000" stroke-width="0.7"/>
<ellipse cx="1362.0" cy="493.3" rx="3.6" ry="1.2" fill="#2a6e2a" stroke="#000" stroke-width="0.7"/>
<ellipse cx="1378.0" cy="493.3" rx="3.6" ry="1.2" fill="#2a6e2a" stroke="#000" stroke-width="0.7"/>
<ellipse cx="1403.7" cy="493.3" rx="3.6" ry="1.2" fill="#2a6e2a" stroke="#000" stroke-width="0.7"/>
<ellipse cx="1430.5" cy="493.3" rx="3.6" ry="1.2" fill="#2a6e2a" stroke="#000" stroke-width="0.7"/>
<ellipse cx="1447.6" cy="493.3" rx="3.6" ry="1.2" fill="#2a6e2a" stroke="#000" stroke-width="0.7"/>
<path d="M1066.7,508.0 L1066.7,522.2 A3.9,0.8 0 0 0 1074.5,522.2 L1074.5,508.0 A3.9,0.8 0 0 0 1066.7,508.0 Z" fill="url(#gG)"/>
<path d="M1066.7,522.2 A3.9,0.8 0 0 0 1074.5,522.2" fill="none" stroke="#000" stroke-width="1.15"/>
<path d="M1059.4,478.0 L1059.4,508.6 A10.4,2.1 0 0 0 1080.2,508.6 L1080.2,478.0 A10.4,2.1 0 0 0 1059.4,478.0 Z" fill="url(#gG)"/>
<path d="M1059.4,508.6 A10.4,2.1 0 0 0 1080.2,508.6" fill="none" stroke="#000" stroke-width="1.15"/>
<path d="M1060.9,470.0 L1060.9,475.5 A8.5,1.7 0 0 0 1078.0,475.5 L1078.0,470.0 A8.5,1.7 0 0 0 1060.9,470.0 Z" fill="url(#gG)"/>
<path d="M1060.9,475.5 A8.5,1.7 0 0 0 1078.0,475.5" fill="none" stroke="#000" stroke-width="1.15"/>
<ellipse cx="1069.5" cy="470.0" rx="8.5" ry="1.7" fill="#338333" stroke="#000" stroke-width="1.15"/>
<polyline points="1060.2,476.6 1079.4,476.8" fill="none" stroke="#000" stroke-width="1.4"/>
<path d="M1477.0,513.0 L1477.0,527.5 A3.8,0.8 0 0 0 1484.6,527.5 L1484.6,513.0 A3.8,0.8 0 0 0 1477.0,513.0 Z" fill="url(#gG)"/>
<path d="M1477.0,527.5 A3.8,0.8 0 0 0 1484.6,527.5" fill="none" stroke="#000" stroke-width="1.15"/>
<path d="M1470.0,484.0 L1470.0,513.8 A10.5,2.1 0 0 0 1491.0,513.8 L1491.0,484.0 A10.5,2.1 0 0 0 1470.0,484.0 Z" fill="url(#gG)"/>
<path d="M1470.0,513.8 A10.5,2.1 0 0 0 1491.0,513.8" fill="none" stroke="#000" stroke-width="1.15"/>
<path d="M1472.0,475.0 L1472.0,480.5 A7.8,1.6 0 0 0 1487.6,480.5 L1487.6,475.0 A7.8,1.6 0 0 0 1472.0,475.0 Z" fill="url(#gG)"/>
<path d="M1472.0,480.5 A7.8,1.6 0 0 0 1487.6,480.5" fill="none" stroke="#000" stroke-width="1.15"/>
<ellipse cx="1479.8" cy="475.0" rx="7.8" ry="1.6" fill="#338333" stroke="#000" stroke-width="1.15"/>
<polyline points="1470.6,481.8 1490.2,482.0" fill="none" stroke="#000" stroke-width="1.4"/>
<path d="M1176.0,380.0 L1176.0,424.0 A2.5,0.8 0 0 0 1181.0,424.0 L1181.0,380.0 A2.5,0.8 0 0 0 1176.0,380.0 Z" fill="url(#gG)"/>
<path d="M1176.0,424.0 A2.5,0.8 0 0 0 1181.0,424.0" fill="none" stroke="#000" stroke-width="1.15"/>
<path d="M1381.4,383.0 L1381.4,429.0 A2.6,0.8 0 0 0 1386.7,429.0 L1386.7,383.0 A2.6,0.8 0 0 0 1381.4,383.0 Z" fill="url(#gG)"/>
<path d="M1381.4,429.0 A2.6,0.8 0 0 0 1386.7,429.0" fill="none" stroke="#000" stroke-width="1.15"/>
<path d="M1170.5,382 Q1280,356 1389,385 L1389,391.7 Q1280,357 1170.5,389 Z" fill="#3a943a" stroke="#000" stroke-width="0.9"/>
<path d="M1170.5,384.5 Q1280,358 1389,387.5" fill="none" stroke="#000" stroke-width="0.6"/>
<path d="M1173.0,316.3 L1173.0,379.0 A4.2,0.8 0 0 0 1181.4,379.0 L1181.4,316.3 A4.2,0.8 0 0 0 1173.0,316.3 Z" fill="url(#gG)"/>
<path d="M1173.0,379.0 A4.2,0.8 0 0 0 1181.4,379.0" fill="none" stroke="#000" stroke-width="1.15"/>
<path d="M1170.0,308.0 L1170.0,316.3 A7.0,1.4 0 0 0 1184.0,316.3 L1184.0,308.0 A7.0,1.4 0 0 0 1170.0,308.0 Z" fill="url(#gG)"/>
<path d="M1170.0,316.3 A7.0,1.4 0 0 0 1184.0,316.3" fill="none" stroke="#000" stroke-width="1.15"/>
<ellipse cx="1177.0" cy="308.0" rx="7.0" ry="1.4" fill="#338333" stroke="#000" stroke-width="1.15"/>
<path d="M1378.5,318.2 L1378.5,382.0 A4.2,0.9 0 0 0 1387.0,382.0 L1387.0,318.2 A4.2,0.9 0 0 0 1378.5,318.2 Z" fill="url(#gG)"/>
<path d="M1378.5,382.0 A4.2,0.9 0 0 0 1387.0,382.0" fill="none" stroke="#000" stroke-width="1.15"/>
<path d="M1375.6,310.5 L1375.6,318.2 A6.7,1.3 0 0 0 1389.0,318.2 L1389.0,310.5 A6.7,1.3 0 0 0 1375.6,310.5 Z" fill="url(#gG)"/>
<path d="M1375.6,318.2 A6.7,1.3 0 0 0 1389.0,318.2" fill="none" stroke="#000" stroke-width="1.15"/>
<ellipse cx="1382.3" cy="310.5" rx="6.7" ry="1.3" fill="#338333" stroke="#000" stroke-width="1.15"/>
<path d="M1262.2,597.5 L1262.2,610.0 A14.9,3.0 0 0 0 1292.0,610.0 L1292.0,597.5 A14.9,3.0 0 0 0 1262.2,597.5 Z" fill="url(#gG)"/>
<path d="M1262.2,610.0 A14.9,3.0 0 0 0 1292.0,610.0" fill="none" stroke="#000" stroke-width="1.15"/>
<ellipse cx="1277.1" cy="597.5" rx="14.9" ry="3.0" fill="#338333" stroke="#000" stroke-width="1.15"/>
<path d="M1263.0,393.5 L1263.0,597.0 A10.5,1.6 0 0 0 1284.0,597.0 L1284.0,393.5 A10.5,1.6 0 0 0 1263.0,393.5 Z" fill="url(#gG)"/>
<path d="M1263.0,597.0 A10.5,1.6 0 0 0 1284.0,597.0" fill="none" stroke="#000" stroke-width="1.15"/>
<ellipse cx="1273.5" cy="393.5" rx="10.5" ry="1.6" fill="#338333" stroke="#000" stroke-width="1.15"/>
<path d="M1266.0,359.0 L1266.0,393.5 A6.6,1.3 0 0 0 1279.3,393.5 L1279.3,359.0 A6.6,1.3 0 0 0 1266.0,359.0 Z" fill="url(#gG)"/>
<path d="M1266.0,393.5 A6.6,1.3 0 0 0 1279.3,393.5" fill="none" stroke="#000" stroke-width="1.15"/>
<path d="M1262.0,324.0 L1262.0,359.3 A10.0,2.0 0 0 0 1282.0,359.3 L1282.0,324.0 A10.0,2.0 0 0 0 1262.0,324.0 Z" fill="url(#gG)"/>
<path d="M1262.0,359.3 A10.0,2.0 0 0 0 1282.0,359.3" fill="none" stroke="#000" stroke-width="1.15"/>
<path d="M1257.0,309.5 L1257.0,324.0 A14.5,2.9 0 0 0 1286.0,324.0 L1286.0,309.5 A14.5,2.9 0 0 0 1257.0,309.5 Z" fill="url(#gG)"/>
<path d="M1257.0,324.0 A14.5,2.9 0 0 0 1286.0,324.0" fill="none" stroke="#000" stroke-width="1.15"/>
<ellipse cx="1271.5" cy="309.5" rx="14.5" ry="2.9" fill="#338333" stroke="#000" stroke-width="1.15"/>
<text x="1286.3" y="407.3" font-family="Liberation Sans, sans-serif" font-size="11" fill="#d8d8d8">Z</text>
<polygon points="1290.5,409.0 1293.6,417.0 1287.5,417.0" fill="#19c8c8" stroke="none" stroke-width="0" stroke-linejoin="round" />
<path d="M895.7,672.0 L895.7,694.3 A13.1,2.6 0 0 0 922.0,694.3 L922.0,672.0 A13.1,2.6 0 0 0 895.7,672.0 Z" fill="url(#gG)"/>
<path d="M895.7,694.3 A13.1,2.6 0 0 0 922.0,694.3" fill="none" stroke="#000" stroke-width="1.15"/>
<path d="M878.3,515.0 L878.3,669.0 A21.0,4.2 0 0 0 920.3,669.0 L920.3,515.0 A21.0,4.2 0 0 0 878.3,515.0 Z" fill="url(#gG)"/>
<path d="M878.3,669.0 A21.0,4.2 0 0 0 920.3,669.0" fill="none" stroke="#000" stroke-width="1.15"/>
<path d="M866.0,503.0 L866.0,512.6 A31.4,6.3 0 0 0 928.7,512.6 L928.7,503.0 A31.4,6.3 0 0 0 866.0,503.0 Z" fill="url(#gG)"/>
<path d="M866.0,512.6 A31.4,6.3 0 0 0 928.7,512.6" fill="none" stroke="#000" stroke-width="1.15"/>
<ellipse cx="897.4" cy="503.0" rx="31.4" ry="6.3" fill="#338333" stroke="#000" stroke-width="1.15"/>
<path d="M867.0,366.2 L867.0,503.0 A29.2,5.9 0 0 0 925.5,503.0 L925.5,366.2 A29.2,5.9 0 0 0 867.0,366.2 Z" fill="url(#gG)"/>
<path d="M867.0,503.0 A29.2,5.9 0 0 0 925.5,503.0" fill="none" stroke="#000" stroke-width="1.15"/>
<ellipse cx="896.2" cy="366.2" rx="29.2" ry="5.9" fill="#338333" stroke="#000" stroke-width="1.15"/>
<path d="M867.0,402.5 A29.2,5.9 0 0 0 925.5,402.5" fill="none" stroke="#000" stroke-width="1.15"/>
<ellipse cx="896.2" cy="366.2" rx="25.7" ry="5.1" fill="none" stroke="#000" stroke-width="1.035"/>
<path d="M874.0,322.3 L874.0,366.2 A20.6,4.1 0 0 0 915.3,366.2 L915.3,322.3 A20.6,4.1 0 0 0 874.0,322.3 Z" fill="url(#gG)"/>
<path d="M874.0,366.2 A20.6,4.1 0 0 0 915.3,366.2" fill="none" stroke="#000" stroke-width="1.15"/>
<path d="M870.5,304.0 L870.5,322.3 A23.4,4.7 0 0 0 917.3,322.3 L917.3,304.0 A23.4,4.7 0 0 0 870.5,304.0 Z" fill="url(#gG)"/>
<path d="M870.5,322.3 A23.4,4.7 0 0 0 917.3,322.3" fill="none" stroke="#000" stroke-width="1.15"/>
<ellipse cx="893.9" cy="304.0" rx="23.4" ry="4.7" fill="#338333" stroke="#000" stroke-width="1.15"/>
<path d="M966.5,660.0 L966.5,682.8 A20.9,4.2 0 0 0 1008.4,682.8 L1008.4,660.0 A20.9,4.2 0 0 0 966.5,660.0 Z" fill="url(#gG)"/>
<path d="M966.5,682.8 A20.9,4.2 0 0 0 1008.4,682.8" fill="none" stroke="#000" stroke-width="1.15"/>
<path d="M957.0,648.0 L957.0,657.6 A23.6,4.7 0 0 0 1004.3,657.6 L1004.3,648.0 A23.6,4.7 0 0 0 957.0,648.0 Z" fill="url(#gG)"/>
<path d="M957.0,657.6 A23.6,4.7 0 0 0 1004.3,657.6" fill="none" stroke="#000" stroke-width="1.15"/>
<ellipse cx="980.6" cy="648.0" rx="23.6" ry="4.7" fill="#338333" stroke="#000" stroke-width="1.15"/>
<path d="M957.5,512.0 L957.5,647.0 A21.2,4.2 0 0 0 1000.0,647.0 L1000.0,512.0 A21.2,4.2 0 0 0 957.5,512.0 Z" fill="url(#gG)"/>
<path d="M957.5,647.0 A21.2,4.2 0 0 0 1000.0,647.0" fill="none" stroke="#000" stroke-width="1.15"/>
<path d="M948.7,409.5 L948.7,510.7 A28.1,5.6 0 0 0 1005.0,510.7 L1005.0,409.5 A28.1,5.6 0 0 0 948.7,409.5 Z" fill="url(#gG)"/>
<path d="M948.7,510.7 A28.1,5.6 0 0 0 1005.0,510.7" fill="none" stroke="#000" stroke-width="1.15"/>
<path d="M945.3,402.3 L945.3,409.0 A30.4,6.1 0 0 0 1006.0,409.0 L1006.0,402.3 A30.4,6.1 0 0 0 945.3,402.3 Z" fill="url(#gG)"/>
<path d="M945.3,409.0 A30.4,6.1 0 0 0 1006.0,409.0" fill="none" stroke="#000" stroke-width="1.15"/>
<ellipse cx="975.6" cy="402.3" rx="30.4" ry="6.1" fill="#338333" stroke="#000" stroke-width="1.15"/>
<ellipse cx="975.6" cy="402.3" rx="23.7" ry="4.7" fill="none" stroke="#000" stroke-width="1.035"/>
<ellipse cx="975.6" cy="402.3" rx="20.3" ry="4.1" fill="none" stroke="#000" stroke-width="1.035"/>
<path d="M1594.4,616.0 L1594.4,630.0 A7.5,1.5 0 0 0 1609.5,630.0 L1609.5,616.0 A7.5,1.5 0 0 0 1594.4,616.0 Z" fill="url(#gG)"/>
<path d="M1594.4,630.0 A7.5,1.5 0 0 0 1609.5,630.0" fill="none" stroke="#000" stroke-width="1.15"/>
<path d="M1587.0,601.0 L1587.0,614.0 A14.4,2.9 0 0 0 1615.8,614.0 L1615.8,601.0 A14.4,2.9 0 0 0 1587.0,601.0 Z" fill="url(#gG)"/>
<path d="M1587.0,614.0 A14.4,2.9 0 0 0 1615.8,614.0" fill="none" stroke="#000" stroke-width="1.15"/>
<ellipse cx="1601.4" cy="601.0" rx="14.4" ry="2.9" fill="#338333" stroke="#000" stroke-width="1.15"/>
<path d="M1587.7,397.5 L1587.7,600.0 A10.6,2.0 0 0 0 1609.0,600.0 L1609.0,397.5 A10.6,2.0 0 0 0 1587.7,397.5 Z" fill="url(#gG)"/>
<path d="M1587.7,600.0 A10.6,2.0 0 0 0 1609.0,600.0" fill="none" stroke="#000" stroke-width="1.15"/>
<ellipse cx="1598.3" cy="397.5" rx="10.6" ry="2.0" fill="#338333" stroke="#000" stroke-width="1.15"/>
<path d="M1590.6,363.0 L1590.6,397.5 A6.2,1.2 0 0 0 1603.0,397.5 L1603.0,363.0 A6.2,1.2 0 0 0 1590.6,363.0 Z" fill="url(#gG)"/>
<path d="M1590.6,397.5 A6.2,1.2 0 0 0 1603.0,397.5" fill="none" stroke="#000" stroke-width="1.15"/>
<path d="M1585.8,326.0 L1585.8,361.5 A11.0,2.2 0 0 0 1607.7,361.5 L1607.7,326.0 A11.0,2.2 0 0 0 1585.8,326.0 Z" fill="url(#gG)"/>
<path d="M1585.8,361.5 A11.0,2.2 0 0 0 1607.7,361.5" fill="none" stroke="#000" stroke-width="1.15"/>
<path d="M1580.6,313.0 L1580.6,326.0 A15.0,3.0 0 0 0 1610.6,326.0 L1610.6,313.0 A15.0,3.0 0 0 0 1580.6,313.0 Z" fill="url(#gG)"/>
<path d="M1580.6,326.0 A15.0,3.0 0 0 0 1610.6,326.0" fill="none" stroke="#000" stroke-width="1.15"/>
<ellipse cx="1595.6" cy="313.0" rx="15.0" ry="3.0" fill="#338333" stroke="#000" stroke-width="1.15"/>
<path d="M1618.6,520.0 L1618.6,678.6 A21.5,4.3 0 0 0 1661.6,678.6 L1661.6,520.0 A21.5,4.3 0 0 0 1618.6,520.0 Z" fill="url(#gG)"/>
<path d="M1618.6,678.6 A21.5,4.3 0 0 0 1661.6,678.6" fill="none" stroke="#000" stroke-width="1.15"/>
<path d="M1607.0,511.0 L1607.0,520.0 A31.7,6.3 0 0 0 1670.4,520.0 L1670.4,511.0 A31.7,6.3 0 0 0 1607.0,511.0 Z" fill="url(#gG)"/>
<path d="M1607.0,520.0 A31.7,6.3 0 0 0 1670.4,520.0" fill="none" stroke="#000" stroke-width="1.15"/>
<ellipse cx="1638.7" cy="511.0" rx="31.7" ry="6.3" fill="#338333" stroke="#000" stroke-width="1.15"/>
<path d="M1607.6,374.0 L1607.6,509.6 A29.0,5.8 0 0 0 1665.5,509.6 L1665.5,374.0 A29.0,5.8 0 0 0 1607.6,374.0 Z" fill="url(#gG)"/>
<path d="M1607.6,509.6 A29.0,5.8 0 0 0 1665.5,509.6" fill="none" stroke="#000" stroke-width="1.15"/>
<ellipse cx="1636.5" cy="374.0" rx="29.0" ry="5.8" fill="#338333" stroke="#000" stroke-width="1.15"/>
<path d="M1607.6,411.0 A29.0,5.8 0 0 0 1665.5,411.0" fill="none" stroke="#000" stroke-width="1.15"/>
<ellipse cx="1636.5" cy="374.0" rx="25.5" ry="5.1" fill="none" stroke="#000" stroke-width="1.035"/>
<path d="M1614.8,331.0 L1614.8,374.0 A20.6,4.1 0 0 0 1656.0,374.0 L1656.0,331.0 A20.6,4.1 0 0 0 1614.8,331.0 Z" fill="url(#gG)"/>
<path d="M1614.8,374.0 A20.6,4.1 0 0 0 1656.0,374.0" fill="none" stroke="#000" stroke-width="1.15"/>
<path d="M1611.6,313.6 L1611.6,331.0 A23.2,4.6 0 0 0 1658.0,331.0 L1658.0,313.6 A23.2,4.6 0 0 0 1611.6,313.6 Z" fill="url(#gG)"/>
<path d="M1611.6,331.0 A23.2,4.6 0 0 0 1658.0,331.0" fill="none" stroke="#000" stroke-width="1.15"/>
<ellipse cx="1634.8" cy="313.6" rx="23.2" ry="4.6" fill="#338333" stroke="#000" stroke-width="1.15"/>
<polyline points="1560.2,668.0 1560.2,689.0" fill="none" stroke="#e01818" stroke-width="1.4"/>
<path d="M1538.2,655.0 L1538.2,663.9 A23.4,4.7 0 0 0 1585.0,663.9 L1585.0,655.0 A23.4,4.7 0 0 0 1538.2,655.0 Z" fill="url(#gG)"/>
<path d="M1538.2,663.9 A23.4,4.7 0 0 0 1585.0,663.9" fill="none" stroke="#000" stroke-width="1.15"/>
<ellipse cx="1561.6" cy="655.0" rx="23.4" ry="4.7" fill="#338333" stroke="#000" stroke-width="1.15"/>
<path d="M1538.8,519.0 L1538.8,652.3 A21.0,4.2 0 0 0 1580.8,652.3 L1580.8,519.0 A21.0,4.2 0 0 0 1538.8,519.0 Z" fill="url(#gG)"/>
<path d="M1538.8,652.3 A21.0,4.2 0 0 0 1580.8,652.3" fill="none" stroke="#000" stroke-width="1.15"/>
<path d="M1530.4,417.3 L1530.4,518.0 A27.8,5.6 0 0 0 1586.0,518.0 L1586.0,417.3 A27.8,5.6 0 0 0 1530.4,417.3 Z" fill="url(#gG)"/>
<path d="M1530.4,518.0 A27.8,5.6 0 0 0 1586.0,518.0" fill="none" stroke="#000" stroke-width="1.15"/>
<path d="M1525.6,409.7 L1525.6,417.3 A30.6,6.1 0 0 0 1586.7,417.3 L1586.7,409.7 A30.6,6.1 0 0 0 1525.6,409.7 Z" fill="url(#gG)"/>
<path d="M1525.6,417.3 A30.6,6.1 0 0 0 1586.7,417.3" fill="none" stroke="#000" stroke-width="1.15"/>
<ellipse cx="1556.2" cy="409.7" rx="30.6" ry="6.1" fill="#338333" stroke="#000" stroke-width="1.15"/>
<ellipse cx="1556.2" cy="409.7" rx="23.8" ry="4.8" fill="none" stroke="#000" stroke-width="1.035"/>
<ellipse cx="1556.2" cy="409.7" rx="20.5" ry="4.1" fill="none" stroke="#000" stroke-width="1.035"/>
<path d="M939.8,681.0 L939.8,692.2 A18.4,3.7 0 0 0 976.5,692.2 L976.5,681.0 A18.4,3.7 0 0 0 939.8,681.0 Z" fill="url(#gG)"/>
<path d="M939.8,692.2 A18.4,3.7 0 0 0 976.5,692.2" fill="none" stroke="#000" stroke-width="1.15"/>
<ellipse cx="958.1" cy="681.0" rx="18.4" ry="3.7" fill="#338333" stroke="#000" stroke-width="1.15"/>
<ellipse cx="958.1" cy="681.0" rx="11.4" ry="2.3" fill="none" stroke="#000" stroke-width="1.035"/>
<ellipse cx="958.1" cy="681.0" rx="7.7" ry="1.5" fill="none" stroke="#000" stroke-width="1.035"/>
<path d="M1596.0,689.0 L1596.0,700.6 A18.3,3.7 0 0 0 1632.6,700.6 L1632.6,689.0 A18.3,3.7 0 0 0 1596.0,689.0 Z" fill="url(#gG)"/>
<path d="M1596.0,700.6 A18.3,3.7 0 0 0 1632.6,700.6" fill="none" stroke="#000" stroke-width="1.15"/>
<ellipse cx="1614.3" cy="689.0" rx="18.3" ry="3.7" fill="#338333" stroke="#000" stroke-width="1.15"/>
<ellipse cx="1614.3" cy="689.0" rx="11.3" ry="2.3" fill="none" stroke="#000" stroke-width="1.035"/>
<ellipse cx="1614.3" cy="689.0" rx="7.7" ry="1.5" fill="none" stroke="#000" stroke-width="1.035"/>
<linearGradient id="gWM" gradientUnits="userSpaceOnUse" x1="0" y1="508" x2="0" y2="540"><stop offset="0" stop-color="#f7a422"/><stop offset="1" stop-color="#e9681a"/></linearGradient>
<g fill="url(#gWM)"><path d="M891.3,517.5 L893.7,517 V537.3 H908.8 L907.6,540 H891.3 Z"/><path d="M895.1,512.6 L898,511.6 V532.6 L906.4,536 L904.2,537.1 L895.1,534.6 Z"/><path d="M899.7,508.8 L902.6,507.6 V530 L909.6,534.5 L907.6,535.4 L899.7,532.3 Z"/></g>
<g fill="url(#gWM)" transform="translate(1827.6,0) scale(-1,1)"><path d="M891.3,517.5 L893.7,517 V537.3 H908.8 L907.6,540 H891.3 Z"/><path d="M895.1,512.6 L898,511.6 V532.6 L906.4,536 L904.2,537.1 L895.1,534.6 Z"/><path d="M899.7,508.8 L902.6,507.6 V530 L909.6,534.5 L907.6,535.4 L899.7,532.3 Z"/></g>
<path d="M913.3,511.6 C903.5,512.5 901.8,531.5 912.6,534.3 C918.5,535.4 922.3,530.8 923.2,525.6" fill="none" stroke="url(#gWM)" stroke-width="3.4"/>
<path d="M913.6,510.8 V527.6 L919,523.6" fill="none" stroke="url(#gWM)" stroke-width="2.7"/>
<text x="946.3" y="529.4" font-family="Liberation Sans, 'Noto Sans CJK SC', sans-serif" font-weight="500" font-size="16.7" fill="url(#gWM)" textLength="83.5" lengthAdjust="spacingAndGlyphs">智造资料网</text>
<text x="947.2" y="538.2" font-family="Liberation Sans, sans-serif" font-weight="bold" font-size="4.3" fill="#f08a1a" textLength="81.8" lengthAdjust="spacingAndGlyphs">INTELLIGENT MANUFACTURING DATA</text>
<g>
<path d="M117,917h28.5v10l0.5,3v11h-30.5v-13l-1,-2.5v-4.5z" fill="rgba(150,165,205,0.38)" stroke="#cfcfcf" stroke-width="0.9"/>
<path d="M120.4,947.3H142l2.6,-3.8" fill="none" stroke="#e8e000" stroke-width="1.2"/>
<path d="M120.5,944h23.5l-2.2,3h-21.3z" fill="rgba(150,150,60,0.6)"/>
<rect x="117.6" y="876" width="2.8" height="64" fill="#19d3d8"/><path d="M118.9,867.6l4.2,10h-8.4z" fill="#19e0e6"/>
<rect x="120.4" y="941" width="40" height="2.8" fill="#10d010"/><path d="M170,942.4l-11.5,-3.9v7.8z" fill="#10b010"/>
<circle cx="120.6" cy="940.6" r="3" fill="#808080"/><circle cx="119.8" cy="939.8" r="1.2" fill="#b0b0b0"/>
<path d="M120.5,941.5l-6.5,3.5a4,4 0 1 0 4.5,6.2z" fill="#e00000"/><circle cx="115.8" cy="946.4" r="2.6" fill="#f01010"/>
<text x="113.8" y="866" font-size="11" fill="#d6d6d6" font-family="Liberation Sans, sans-serif">Z</text>
<text x="171.6" y="946.8" font-size="11" fill="#d6d6d6" font-family="Liberation Sans, sans-serif">Y</text>
<text x="108.4" y="955.2" font-size="11" fill="#d6d6d6" font-family="Liberation Sans, sans-serif">X</text>
</g>
</svg>
<svg class="abs" style="left:60px;top:109px" width="320" height="175" viewBox="60 109 320 175"><g transform="translate(64.00,113.00)"><rect x="3" y="4.500" width="18" height="3.600" fill="#44608c"/><rect x="3" y="10.300" width="18" height="3.600" fill="#44608c"/><rect x="3" y="16" width="18" height="3.600" fill="#44608c"/></g><g transform="translate(92.00,113.00)"><rect x="6" y="6.500" width="12.500" height="11" fill="url(#iW)" stroke="#8090b0" stroke-width="0.600"/><rect x="3.2" y="3.7" width="3.6" height="3.6" fill="#22b022"/><path d="M3.2,3.7 l3.6,3.6 M6.8,3.7 l-3.6,3.6" stroke="#9af07a" stroke-width="0.7"/><rect x="17.7" y="3.7" width="3.6" height="3.6" fill="#22b022"/><path d="M17.7,3.7 l3.6,3.6 M21.3,3.7 l-3.6,3.6" stroke="#9af07a" stroke-width="0.7"/><rect x="3.2" y="16.7" width="3.6" height="3.6" fill="#22b022"/><path d="M3.2,16.7 l3.6,3.6 M6.8,16.7 l-3.6,3.6" stroke="#9af07a" stroke-width="0.7"/><rect x="17.7" y="16.7" width="3.6" height="3.6" fill="#22b022"/><path d="M17.7,16.7 l3.6,3.6 M21.3,16.7 l-3.6,3.6" stroke="#9af07a" stroke-width="0.7"/></g><g transform="translate(120.00,113.00)"><path d="M4,7h5 M3,10h5 M4.500,13h4" stroke="#b0c8e8" stroke-width="1.200"/><path d="M10.9,13.1 l-4.9,4.9" stroke="#8a8a8a" stroke-width="3" stroke-linecap="round"/><path d="M10.9,13.1 l-4.9,4.9" stroke="#dcdcdc" stroke-width="1.4" stroke-linecap="round"/><circle cx="14.0" cy="10.0" r="5.2" fill="url(#iGl)" stroke="#c8d0dc" stroke-width="1.4"/></g><g transform="translate(148.00,113.00)"><path d="M2.500,14.500l9,-4.500l10,4l-9,5z" fill="none" stroke="#70788c" stroke-width="0.600"/><path d="M6.2,13.6 l8.5,-4.8 l8.5,4.8 l-8.5,5.7 z" fill="#dfe6fa" stroke="#b4bcd4" stroke-width="0.5"/><path d="M11.0,14.5 v-8.5" stroke="#1060f0" stroke-width="1.5"/><path d="M11.0,2.6 l-2.1,4.0 h4.2 z" fill="#1060f0"/><path d="M11.0,14.5 l6.6,-4.8" stroke="#28b028" stroke-width="1.5"/><path d="M20.5,7.7 l-4.4,0.6 l2.5,3.2 z" fill="#28b028"/><path d="M11.0,14.5 l6.2,4.3" stroke="#e02020" stroke-width="1.5"/><path d="M20.0,20.8 l-2.1,-3.8 l-2.7,2.5 z" fill="#e02020"/><circle cx="11.0" cy="14.5" r="1.8" fill="#c8c8c8" stroke="#555" stroke-width="0.5"/></g><g transform="translate(176.00,113.00)"><polygon points="3.5,6.5 12.5,3.0 21.5,6.5 12.5,9.8" fill="#35c835"/><path d="M12.500,3L3.500,6.500V16.500L12.500,21.500L21.500,16.500V6.500Z M3.500,6.500L12.500,9.800L21.500,6.500 M12.500,9.800V21.500 M12.500,3V13.200 M3.500,16.500L12.500,13.200L21.500,16.500" stroke="#080808" stroke-width="1.100" fill="none" stroke-linejoin="round"/></g><g transform="translate(204.00,113.00)"><polygon points="3.5,16.5 12.5,13.2 21.5,16.5 12.5,21.5" fill="#35c835"/><path d="M12.500,3L3.500,6.500V16.500L12.500,21.500L21.500,16.500V6.500Z M3.500,6.500L12.500,9.800L21.500,6.500 M12.500,9.800V21.500 M12.500,3V13.200 M3.500,16.500L12.500,13.200L21.500,16.500" stroke="#080808" stroke-width="1.100" fill="none" stroke-linejoin="round"/></g><g transform="translate(232.00,113.00)"><polygon points="3.5,6.5 12.5,3.0 12.5,13.2 3.5,16.5" fill="url(#iGr)"/><path d="M12.500,3L3.500,6.500V16.500L12.500,21.500L21.500,16.500V6.500Z M3.500,6.500L12.500,9.800L21.500,6.500 M12.500,9.800V21.500 M12.500,3V13.200 M3.500,16.500L12.500,13.200L21.500,16.500" stroke="#080808" stroke-width="1.100" fill="none" stroke-linejoin="round"/></g><g transform="translate(260.00,113.00)"><polygon points="12.5,9.8 21.5,6.5 21.5,16.5 12.5,21.5" fill="url(#iGr)"/><path d="M12.500,3L3.500,6.500V16.500L12.500,21.500L21.500,16.500V6.500Z M3.500,6.500L12.500,9.800L21.500,6.500 M12.500,9.800V21.500 M12.500,3V13.200 M3.500,16.500L12.500,13.200L21.500,16.500" stroke="#080808" stroke-width="1.100" fill="none" stroke-linejoin="round"/></g><g transform="translate(288.00,113.00)"><polygon points="3.5,6.5 12.5,9.8 12.5,21.5 3.5,16.5" fill="url(#iGr)"/><path d="M12.500,3L3.500,6.500V16.500L12.500,21.500L21.500,16.500V6.500Z M3.500,6.500L12.500,9.800L21.500,6.500 M12.500,9.800V21.500 M12.500,3V13.200 M3.500,16.500L12.500,13.200L21.500,16.500" stroke="#080808" stroke-width="1.100" fill="none" stroke-linejoin="round"/></g><g transform="translate(316.00,113.00)"><polygon points="12.5,3.0 21.5,6.5 21.5,16.5 12.5,13.2" fill="url(#iGr)"/><path d="M12.500,3L3.500,6.500V16.500L12.500,21.500L21.500,16.500V6.500Z M3.500,6.500L12.500,9.800L21.500,6.500 M12.500,9.800V21.500 M12.500,3V13.200 M3.500,16.500L12.500,13.200L21.500,16.500" stroke="#080808" stroke-width="1.100" fill="none" stroke-linejoin="round"/></g><g transform="translate(344.00,113.00)"><polygon points="3.5,6.5 12.5,3.0 21.5,6.5 12.5,9.8" fill="#7ae860"/><polygon points="3.5,6.5 12.5,9.8 12.5,21.5 3.5,16.5" fill="#2fc02f"/><polygon points="12.5,9.8 21.5,6.5 21.5,16.5 12.5,21.5" fill="#8af070"/><path d="M3.500,6.500L12.500,9.800L21.500,6.500M12.500,9.800V21.500" stroke="#18a018" stroke-width="0.800" fill="none"/></g><g transform="translate(64.00,141.00)"><path d="M7.0,6.2 V17.8 A5.0,2.2 0 0 0 17.0,17.8 V6.2 A5.0,2.2 0 0 0 7.0,6.2 Z" fill="none" stroke="#1a1a1a" stroke-width="1.0"/><ellipse cx="12.0" cy="6.2" rx="5.0" ry="2.2" fill="none" stroke="#1a1a1a" stroke-width="1.0"/><path d="M7.0,17.8 A5.0,2.2 0 0 1 17.0,17.8" fill="none" stroke="#333" stroke-width="0.8"/></g><g transform="translate(64.00,169.00)"><path d="M7.0,6.2 V17.8 A5.0,2.2 0 0 0 17.0,17.8 V6.2 A5.0,2.2 0 0 0 7.0,6.2 Z" fill="none" stroke="#1a1a1a" stroke-width="1.0"/><ellipse cx="12.0" cy="6.2" rx="5.0" ry="2.2" fill="none" stroke="#1a1a1a" stroke-width="1.0"/></g><g transform="translate(64.00,197.00)"><ellipse cx="16.0" cy="18.8" rx="7" ry="1.8" fill="#555" opacity="0.55"/><path d="M7.0,6.2 V17.8 A5.0,2.2 0 0 0 17.0,17.8 V6.2 A5.0,2.2 0 0 0 7.0,6.2 Z" fill="url(#iB)" stroke="#101828" stroke-width="0.9"/><ellipse cx="12.0" cy="6.2" rx="5.0" ry="2.2" fill="#6a94dc" stroke="#101828" stroke-width="0.9"/></g><g transform="translate(64.00,225.00)"><ellipse cx="16.0" cy="18.8" rx="7" ry="1.8" fill="#555" opacity="0.55"/><path d="M7.0,6.2 V17.8 A5.0,2.2 0 0 0 17.0,17.8 V6.2 A5.0,2.2 0 0 0 7.0,6.2 Z" fill="url(#iL)" stroke="#303848" stroke-width="0.9"/><ellipse cx="12.0" cy="6.2" rx="5.0" ry="2.2" fill="#d4dcf4" stroke="#303848" stroke-width="0.9"/><path d="M7.0,17.8 A5.0,2.2 0 0 1 17.0,17.8" fill="none" stroke="#a0acd0" stroke-width="0.7200000000000001"/></g><g transform="translate(64.00,253.00)"><path d="M7.0,6.2 V17.8 A5.0,2.2 0 0 0 17.0,17.8 V6.2 A5.0,2.2 0 0 0 7.0,6.2 Z" fill="none" stroke="#1a1a1a" stroke-width="0.9"/><ellipse cx="12.0" cy="6.2" rx="5.0" ry="2.2" fill="none" stroke="#1a1a1a" stroke-width="0.9"/><path d="M9.500,7.500c1.500,4 -1,6 0.500,11.500 M12,8c1.600,4 -0.500,7 1,12 M14.500,7.500c1.200,4 -1.200,7 0.200,11.500" stroke="#222" stroke-width="0.700" fill="none"/></g></svg>
<div id="st1" class="abs"></div><div id="stline" class="abs"></div><div id="st2" class="abs"></div>
<div class="abs" style="left:1341px;top:1002px;width:131px;height:18px;background:#fff"></div>
<div class="abs" style="left:1335px;top:1003px;width:5px;height:16px;background-image:radial-gradient(circle at 0.5px 0.5px,#8c92a6 0.6px,transparent 0.7px),radial-gradient(circle at 0.5px 0.5px,#8c92a6 0.6px,transparent 0.7px);background-size:4px 4px;background-position:0 0,2px 2px"></div>
<div class="abs" style="left:1475px;top:1003px;width:5px;height:16px;background-image:radial-gradient(circle at 0.5px 0.5px,#8c92a6 0.6px,transparent 0.7px),radial-gradient(circle at 0.5px 0.5px,#8c92a6 0.6px,transparent 0.7px);background-size:4px 4px;background-position:0 0,2px 2px"></div>
<div class="abs" style="left:1656px;top:1003px;width:5px;height:16px;background-image:radial-gradient(circle at 0.5px 0.5px,#8c92a6 0.6px,transparent 0.7px),radial-gradient(circle at 0.5px 0.5px,#8c92a6 0.6px,transparent 0.7px);background-size:4px 4px;background-position:0 0,2px 2px"></div>
<div class="st" style="left:1486px;top:1003px">绝对 XY 上视图</div>
<div class="st" style="left:1600px;top:1003px">绝对视图</div>
<div class="st" style="left:1668px;top:1003px;font-weight:bold">LAYER0</div>
<div class="vs" style="left:1591px;top:1003px;height:15px"></div>
<div class="vs" style="left:1726px;top:1003px;height:15px"></div>
<div class="vs" style="left:1757px;top:1003px;height:15px"></div>
<div class="vs" style="left:1799px;top:1003px;height:15px"></div>
<div class="vs" style="left:1843px;top:1003px;height:15px"></div>
<div class="vs" style="left:1886px;top:1003px;height:15px"></div>
<div class="abs" style="left:1762px;top:1005px;width:32px;height:12px;background:#46638d"></div>
<div class="abs" style="left:1805px;top:1005px;width:32px;height:12px;background:#46638d"></div>
<div class="abs" style="left:1848px;top:1005px;width:32px;height:12px;background:#46638d"></div>
<div class="st" style="left:1141px;top:1023px">拴牢</div>
<div class="st" style="left:1463px;top:1023px">LS: 1.00 PS: 1.00</div>
<div class="st" style="left:1589px;top:1023px">单位: 毫米</div>
<div class="st" style="left:1663px;top:1023px;color:#f01010;letter-spacing:0.45px">X =-0442.596 Y =-0415.698</div>
<div class="st" style="left:1826px;top:1023px;letter-spacing:0.4px">Z = 0000.000</div>
<div class="vs" style="left:1133px;top:1023px;height:15px"></div>
<div class="vs" style="left:1176px;top:1023px;height:15px"></div>
<div class="vs" style="left:1206px;top:1023px;height:15px"></div>
<div class="vs" style="left:1238px;top:1023px;height:15px"></div>
<div class="vs" style="left:1268px;top:1023px;height:15px"></div>
<div class="vs" style="left:1300px;top:1023px;height:15px"></div>
<div class="vs" style="left:1330px;top:1023px;height:15px"></div>
<div class="vs" style="left:1362px;top:1023px;height:15px"></div>
<div class="vs" style="left:1394px;top:1023px;height:15px"></div>
<div class="vs" style="left:1424px;top:1023px;height:15px"></div>
<div class="vs" style="left:1454px;top:1023px;height:15px"></div>
<div class="vs" style="left:1580px;top:1023px;height:15px"></div>
<div class="vs" style="left:1654px;top:1023px;height:15px"></div>
<svg class="abs" style="left:1170px;top:1000px" width="750" height="44" viewBox="1170 1000 750 44"><rect x="1182.500" y="1022.500" width="15.500" height="15.500" fill="#b8bccc" stroke="#6a7088" stroke-width="1.200"/><g transform="translate(1183.50,1023.50)"><polygon points="11.9,8.6 11.4,9.4 10.6,10.2 9.7,10.8 8.6,11.2 7.5,11.3 6.3,11.3 5.1,11.1 4.1,10.6 3.2,10.0 2.5,9.2 1.0,9.9 3.2,6.4 6.2,7.5 4.7,8.2 5.1,8.6 5.5,8.9 6.1,9.1 6.6,9.2 7.2,9.2 7.8,9.1 8.3,8.9 8.8,8.6 9.2,8.3 9.4,7.8" fill="#e05060" stroke="#f0a0a8" stroke-width="0.5" stroke-linejoin="round"/><polygon points="2.1,4.4 2.6,3.6 3.4,2.8 4.3,2.2 5.4,1.8 6.5,1.7 7.7,1.7 8.9,1.9 9.9,2.4 10.8,3.0 11.5,3.8 13.0,3.1 10.8,6.6 7.8,5.5 9.3,4.8 8.9,4.4 8.5,4.1 7.9,3.9 7.4,3.8 6.8,3.8 6.2,3.9 5.7,4.1 5.2,4.4 4.8,4.7 4.6,5.2" fill="#e05060" stroke="#f0a0a8" stroke-width="0.5" stroke-linejoin="round"/></g><rect x="1212" y="1021.500" width="18" height="18" fill="#ffe070"/><g transform="translate(1212.00,1021.50)"><path d="M2,3l3,2 M9,1v3 M14,3l-2,2 M2,9h3" stroke="#e040e0" stroke-width="1.200"/><circle cx="8" cy="7" r="3" fill="#e8a0e8"/><path d="M7,6 l0.500,10 l2.500,-2.500 l2.500,4.500 l2,-1 l-2.500,-4.500 l3.500,-0.500 z" fill="#d0d0c8" stroke="#555" stroke-width="0.700"/></g><g transform="translate(1245.00,1022.00)"><path d="M2,8 l6,-5 l6,5 v8 h-12 z" fill="#e8ecf8" stroke="#4a70b8" stroke-width="1"/><path d="M5,3.500 l5,-2.500 c2,0 4,1 5,2 l-1,3 c-2,-1 -4,0 -6,1 z" fill="#e8b870" stroke="#8a5a20" stroke-width="0.500"/><path d="M4,11h4v4h-4z M9,11h3v4h-3z" fill="#4a80d0"/></g><g transform="translate(1276.00,1021.00)"><ellipse cx="9" cy="17" rx="6" ry="1.400" fill="#777" opacity="0.600"/><text x="3" y="16" font-family="Liberation Sans,sans-serif" font-weight="bold" font-size="18" fill="#3a6ac0">?</text></g><g transform="translate(1304.00,1021.00)"><path d="M4,4l5,-2l5,2v5l-5,2l-5,-2z" fill="#3a80e8" stroke="#1a3a88" stroke-width="0.600"/><path d="M4,4l5,2l5,-2 M9,6v5" stroke="#1a3a88" stroke-width="0.600" fill="none"/><path d="M10,10l4.500,-2l4.500,2v5l-4.500,2l-4.500,-2z" fill="#78b0b0" stroke="#1a3a48" stroke-width="0.700"/><path d="M10,10l4.500,2l4.500,-2 M14.500,12v5" stroke="#1a3a48" stroke-width="0.700" fill="none"/><path d="M1,13h7 M5.500,10.500l3,2.500l-3,2.500" stroke="#e01010" stroke-width="1.500" fill="none"/></g><rect x="1336.500" y="1021.500" width="17.500" height="18" fill="#ffe070"/><g transform="translate(1337.00,1022.00)"><path d="M2,5l6.500,-3l6.500,3l-6.500,3z" fill="#e040f0"/><path d="M2,5v8l6.500,3.500v-8.500z" fill="#98b8b0" stroke="#2a60d0" stroke-width="0.800"/><path d="M15,5v8l-6.500,3.500v-8.500z" fill="#88a8a0" stroke="#2a60d0" stroke-width="0.800"/><path d="M8.500,8v9" stroke="#2a60d0" stroke-width="1.200"/></g><rect x="1370.500" y="1027" width="11" height="10.500" fill="#e8ecf4" stroke="#4a7a5a" stroke-width="1.200"/><rect x="1430.500" y="1023.500" width="15" height="14.500" fill="#dde2f0" stroke="#50587a" stroke-width="1.200"/><path d="M1438,1023.500v14.500 M1430.500,1031h15" stroke="#50587a" stroke-width="1.200"/><circle cx="1467.500" cy="1007.500" r="3.400" fill="#f4f8ff" stroke="#2a6ad0" stroke-width="1.300"/><path d="M1465,1010.500l-3.600,4.500" stroke="#2a6ad0" stroke-width="1.600"/><circle cx="1901" cy="1009.800" r="6.300" fill="#1030d0"/><path d="M1897,1006c2,-2 4,-1 5,0c-1,2 1,3 0,5c-2,1 -3,-1 -3,-2.500c-1,-0.500 -2,-1.500 -2,-2.500z M1903,1011c1,-1 3,0 3,1c-0.500,1.500 -2,2.500 -3,2c-0.500,-1 -0.500,-2 0,-3z" fill="#30d030"/><circle cx="1899" cy="1007" r="1.500" fill="#fff" opacity="0.500"/></svg>
<div id="task" class="abs"><div class="abs" style="left:48px;top:0;width:344px;height:8px;background:#f2f2f2"></div><div class="abs" style="left:735px;top:0;width:50px;height:8px;background:#4c4c4c"></div><div class="abs" style="left:1814px;top:4px;width:32px;height:12px;font-size:12px;line-height:12px;color:#fff;overflow:hidden">14:57</div></div>
<svg class="abs" style="left:1350px;top:955px" width="120" height="93" viewBox="1350 955 120 93"><circle cx="1367.700" cy="1005.600" r="8.500" fill="#8a6254"/><text x="1362.400" y="1011" font-family="Liberation Sans,sans-serif" font-size="14.500" fill="#fff">A</text><circle cx="1374.600" cy="1026.400" r="8.500" fill="#8a6254"/><path d="M1369,1023.500 l3,-2.500 c1.500,1.500 3.700,1.500 5.200,0 l3,2.500 l-1.700,2.200 l-1.300,-0.800 v6.100 h-5.200 v-6.100 l-1.300,0.800 z" fill="#fff"/><ellipse cx="1406" cy="1037.500" rx="15" ry="2" fill="#b0784a"/><path d="M1390,1019 c-4,1 -4,6 0,6 l3,-1 c0,6 2,10 5,12 c0,2 3,2 3,0 l5,0 c0,2 3,2 3,0 c3,-2 5,-7 5,-12 l6,1 c4,0 4,-5 0,-6 l-8,-2 h-16 z" fill="#fdf05a" stroke="#c89a20" stroke-width="0.700"/><path d="M1397,1017 l13,0 l-12,13" stroke="#a86a3a" stroke-width="1.500" fill="none"/><circle cx="1391" cy="1023.500" r="2" fill="#c08850"/><circle cx="1401" cy="1023.500" r="2" fill="#c08850"/><ellipse cx="1396" cy="1028.500" rx="7.600" ry="6.600" fill="#c89058" stroke="#8a5428" stroke-width="0.600"/><circle cx="1392.500" cy="1029.500" r="1.300" fill="#ff90c0"/><circle cx="1399.500" cy="1029.500" r="1.300" fill="#ff90c0"/><path d="M1393.500,1027.500h1.500 M1397,1027.500h1.500" stroke="#5a3010" stroke-width="0.600"/><ellipse cx="1393" cy="1035.500" rx="2" ry="1.300" fill="#c89058"/><ellipse cx="1399" cy="1035.500" rx="2" ry="1.300" fill="#c89058"/><path d="M1405.500,972 c-1,-3 -3,-5 -4.500,-6 c-1.500,-1 -3,0.500 -2,2 c1,1.500 4,2 5.500,4.500 z M1407.500,972 c0.500,-3 1,-4.500 2,-5.500 c1.500,-1 2.500,0.500 2,2 c-0.500,1.500 -2,2 -2.500,4 z" fill="#8a4a1a"/><circle cx="1389.700" cy="977.200" r="6.400" fill="#c08850" stroke="#8a5428" stroke-width="0.700"/><circle cx="1422.500" cy="977.200" r="6.400" fill="#c08850" stroke="#8a5428" stroke-width="0.700"/><circle cx="1389.500" cy="978" r="3" fill="#f8b8a0"/><circle cx="1422.700" cy="978" r="3" fill="#f8b8a0"/><ellipse cx="1406.500" cy="996.500" rx="27" ry="25.500" fill="#c08850" stroke="#8a5428" stroke-width="0.800"/><ellipse cx="1405.400" cy="1000.300" rx="19.600" ry="17.800" fill="#fdf05a" stroke="#a86a28" stroke-width="0.800"/><circle cx="1395.700" cy="993.600" r="1.500" fill="#5a2a10"/><circle cx="1416.700" cy="993.300" r="1.500" fill="#5a2a10"/><ellipse cx="1390.800" cy="999.800" rx="3.200" ry="2.500" fill="#ffa830"/><ellipse cx="1421" cy="999.800" rx="3.200" ry="2.500" fill="#ffa830"/><path d="M1405.500,997.800h1.800" stroke="#8a4a1a" stroke-width="1" stroke-linecap="round"/><g font-family="Liberation Sans,sans-serif" font-weight="bold" font-size="24" transform="rotate(5 1445 980)"><text x="1435.500" y="989.500" fill="#b87840" stroke="#b87840" stroke-width="4.200" stroke-linejoin="round" textLength="20" lengthAdjust="spacingAndGlyphs">W</text><text x="1435.500" y="989.500" fill="#fff6e6" stroke="#fff6e6" stroke-width="2.600" stroke-linejoin="round" textLength="20" lengthAdjust="spacingAndGlyphs">W</text></g><circle cx="1439" cy="978" r="1.300" fill="#d8a060"/><circle cx="1449" cy="981" r="1.300" fill="#d8a060"/><circle cx="1444" cy="987" r="1.200" fill="#d8a060"/><circle cx="1453" cy="975" r="1.100" fill="#d8a060"/><circle cx="1438.500" cy="993.500" r="3.600" fill="#c89a68" stroke="#9a6838" stroke-width="0.600"/><circle cx="1454" cy="993.500" r="3.600" fill="#c89a68" stroke="#9a6838" stroke-width="0.600"/><ellipse cx="1446.300" cy="1002" rx="10.300" ry="10" fill="#c89a68" stroke="#9a6838" stroke-width="0.800"/><ellipse cx="1446.300" cy="1002.500" rx="3.600" ry="4.600" fill="#e8ecf6" stroke="#9a6838" stroke-width="0.700"/><g font-family="Liberation Sans,sans-serif" font-weight="bold" font-size="25" transform="rotate(-4 1446 1022)"><text x="1437" y="1031.500" fill="#c8a020" stroke="#c8a020" stroke-width="4.200" stroke-linejoin="round" textLength="19.500" lengthAdjust="spacingAndGlyphs">W</text><text x="1437" y="1031.500" fill="#fdf05a" stroke="#fdf05a" stroke-width="2.800" stroke-linejoin="round" textLength="19.500" lengthAdjust="spacingAndGlyphs">W</text></g></svg>
</body></html>
